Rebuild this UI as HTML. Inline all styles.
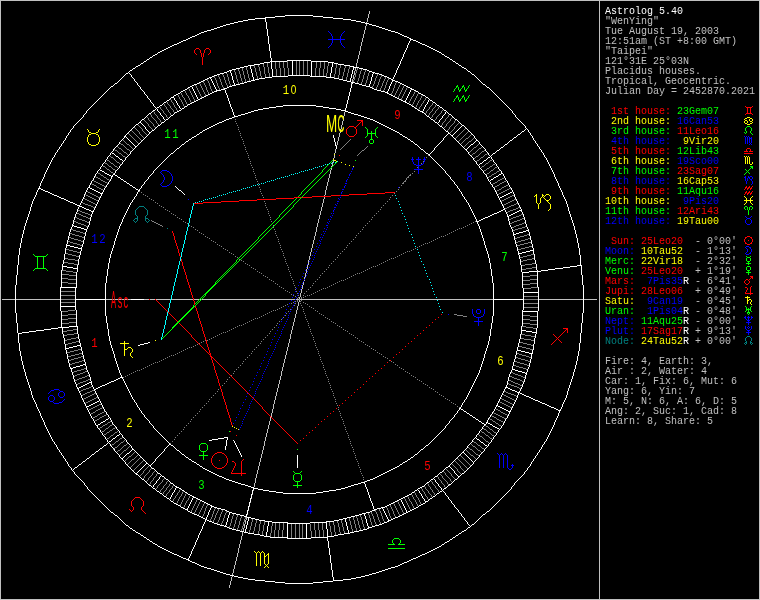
<!DOCTYPE html><html><head><meta charset="utf-8"><title>Astrolog 5.40</title><style>
#ang .hn{font-family:"Liberation Mono",monospace;font-size:13.3px;letter-spacing:2px;}
#ang .z{font-family:"Liberation Sans",sans-serif;font-size:12.6px;}
#ang{position:absolute;left:0;top:0;will-change:transform;font-family:"Liberation Sans",sans-serif;font-size:100px;}
html,body{margin:0;padding:0;background:#000;}
body{width:760px;height:600px;position:relative;overflow:hidden;}
#side{will-change:transform;position:absolute;left:604.6px;top:7px;width:154px;font-family:"Liberation Mono",monospace;font-size:10px;line-height:10px;white-space:pre;color:#c0c0c0;}
.ln{height:10px;}
</style></head><body><svg width="760" height="600" viewBox="0 0 760 600" shape-rendering="crispEdges" style="position:absolute;left:0;top:0"><path fill="#c0c0c0" d="M0 0h760v1h-760zM2 299h13v1h-13zM16 299h44v1h-44zM106 299h25v1h-25zM144 299h5v1h-5zM150 299h5v1h-5zM156 299h14v1h-14zM171 299h22v1h-22zM194 299h5v1h-5zM202 299h93v1h-93zM296 299h3v1h-3zM300 299h193v1h-193zM539 299h44v1h-44zM584 299h13v1h-13zM0 599h760v1h-760zM0 1v598h1v-598zM200 299v1h1v-1zM229 585v3h1v-3zM230 581v4h1v-4zM231 577v4h1v-4zM232 573v2h1v-2zM232 576v1h1v-1zM233 569v4h1v-4zM234 565v4h1v-4zM235 561v4h1v-4zM236 557v4h1v-4zM237 553v4h1v-4zM238 548v5h1v-5zM239 544v4h1v-4zM240 540v4h1v-4zM241 536v4h1v-4zM242 532v4h1v-4zM243 528v3h1v-3zM244 524v4h1v-4zM245 520v4h1v-4zM246 517v3h1v-3zM247 514v1h1v-1zM248 510v1h1v-1zM249 506v1h1v-1zM250 502v1h1v-1zM251 498v1h1v-1zM252 494v1h1v-1zM253 490v1h1v-1zM254 483v4h1v-4zM255 478v5h1v-5zM256 474v4h1v-4zM257 470v4h1v-4zM258 466v4h1v-4zM259 462v4h1v-4zM260 458v4h1v-4zM261 454v4h1v-4zM262 450v4h1v-4zM263 446v4h1v-4zM264 441v5h1v-5zM265 437v4h1v-4zM266 433v4h1v-4zM267 429v4h1v-4zM268 425v4h1v-4zM269 421v4h1v-4zM270 417v4h1v-4zM271 413v4h1v-4zM272 409v4h1v-4zM273 404v5h1v-5zM274 400v4h1v-4zM275 396v4h1v-4zM276 392v4h1v-4zM277 388v4h1v-4zM278 384v4h1v-4zM279 380v4h1v-4zM280 376v4h1v-4zM281 371v5h1v-5zM282 367v4h1v-4zM283 363v4h1v-4zM284 359v4h1v-4zM285 355v4h1v-4zM286 351v4h1v-4zM287 347v4h1v-4zM288 343v4h1v-4zM289 339v4h1v-4zM290 334v5h1v-5zM291 330v4h1v-4zM292 326v4h1v-4zM293 322v4h1v-4zM294 318v4h1v-4zM295 314v4h1v-4zM296 310v4h1v-4zM297 306v4h1v-4zM298 302v4h1v-4zM299 297v2h1v-2zM299 300v2h1v-2zM300 293v4h1v-4zM301 289v4h1v-4zM302 285v4h1v-4zM303 282v3h1v-3zM304 277v2h1v-2zM304 280v1h1v-1zM305 273v4h1v-4zM306 269v4h1v-4zM307 265v4h1v-4zM308 260v5h1v-5zM309 256v4h1v-4zM310 252v4h1v-4zM311 248v4h1v-4zM312 244v4h1v-4zM313 240v4h1v-4zM314 236v4h1v-4zM315 232v4h1v-4zM316 227v5h1v-5zM317 223v4h1v-4zM318 219v4h1v-4zM319 215v4h1v-4zM320 211v4h1v-4zM321 207v4h1v-4zM322 203v4h1v-4zM323 199v4h1v-4zM324 195v1h1v-1zM324 197v2h1v-2zM325 190v5h1v-5zM326 186v4h1v-4zM327 182v4h1v-4zM328 178v4h1v-4zM329 174v4h1v-4zM330 170v4h1v-4zM331 166v1h1v-1zM331 168v2h1v-2zM332 162v4h1v-4zM333 158v1h1v-1zM333 160v2h1v-2zM334 153v1h1v-1zM334 155v3h1v-3zM335 149v4h1v-4zM336 145v1h1v-1zM337 141v4h1v-4zM338 137v4h1v-4zM339 133v4h1v-4zM340 129v4h1v-4zM341 125v4h1v-4zM342 121v4h1v-4zM343 116v5h1v-5zM344 112v4h1v-4zM351 83v1h1v-1zM352 79v3h1v-3zM353 75v4h1v-4zM354 71v4h1v-4zM355 68v3h1v-3zM356 63v4h1v-4zM357 59v4h1v-4zM358 55v4h1v-4zM359 51v4h1v-4zM360 46v5h1v-5zM361 42v4h1v-4zM362 38v4h1v-4zM363 34v4h1v-4zM364 30v4h1v-4zM365 26v4h1v-4zM366 22v1h1v-1zM366 24v2h1v-2zM367 18v4h1v-4zM368 14v4h1v-4zM369 11v3h1v-3zM599 1v598h1v-598zM759 1v598h1v-598z"/><path fill="#808080" d="M466 138h2v1h-2zM469 141h2v1h-2zM121 144h2v1h-2zM127 144h2v1h-2zM474 147h2v1h-2zM119 148h2v1h-2zM479 148h2v1h-2zM127 149h2v1h-2zM115 150h2v1h-2zM362 150h2v1h-2zM482 151h2v1h-2zM124 152h2v1h-2zM119 153h2v1h-2zM473 153h2v1h-2zM485 154h2v1h-2zM123 156h2v1h-2zM476 156h2v1h-2zM111 157h2v1h-2zM481 157h2v1h-2zM107 160h2v1h-2zM477 160h2v1h-2zM490 160h2v1h-2zM117 162h2v1h-2zM105 163h2v1h-2zM111 163h2v1h-2zM486 163h2v1h-2zM493 164h2v1h-2zM103 166h2v1h-2zM109 166h2v1h-2zM115 166h2v1h-2zM482 166h2v1h-2zM490 166h2v1h-2zM495 167h2v1h-2zM487 168h2v1h-2zM107 169h2v1h-2zM113 169h2v1h-2zM484 170h2v1h-2zM491 170h2v1h-2zM497 171h2v1h-2zM111 172h2v1h-2zM98 173h2v1h-2zM487 173h2v1h-2zM494 173h2v1h-2zM492 174h2v1h-2zM101 175h2v1h-2zM409 175h2v1h-2zM489 176h2v1h-2zM96 177h2v1h-2zM104 177h2v1h-2zM407 177h2v1h-2zM98 178h2v1h-2zM502 178h2v1h-2zM107 179h2v1h-2zM500 179h2v1h-2zM101 180h2v1h-2zM498 180h2v1h-2zM94 181h2v1h-2zM103 181h2v1h-2zM404 181h2v1h-2zM504 181h2v1h-2zM96 182h2v1h-2zM105 182h2v1h-2zM495 182h2v1h-2zM502 182h2v1h-2zM98 183h2v1h-2zM402 183h2v1h-2zM493 183h2v1h-2zM500 183h2v1h-2zM92 184h2v1h-2zM100 184h2v1h-2zM94 185h2v1h-2zM102 185h2v1h-2zM497 185h2v1h-2zM506 185h2v1h-2zM104 186h2v1h-2zM495 186h2v1h-2zM504 186h2v1h-2zM97 187h2v1h-2zM502 187h2v1h-2zM99 188h2v1h-2zM509 188h2v1h-2zM101 189h2v1h-2zM499 189h2v1h-2zM507 189h2v1h-2zM497 190h2v1h-2zM505 190h2v1h-2zM503 191h2v1h-2zM88 192h2v1h-2zM501 192h2v1h-2zM90 193h2v1h-2zM499 193h2v1h-2zM92 194h2v1h-2zM86 195h2v1h-2zM94 195h2v1h-2zM512 195h2v1h-2zM88 196h2v1h-2zM96 196h2v1h-2zM510 196h2v1h-2zM90 197h2v1h-2zM98 197h2v1h-2zM508 197h2v1h-2zM92 198h2v1h-2zM506 198h2v1h-2zM85 199h2v1h-2zM94 199h2v1h-2zM504 199h2v1h-2zM514 199h2v1h-2zM87 200h2v1h-2zM96 200h2v1h-2zM502 200h2v1h-2zM512 200h2v1h-2zM89 201h2v1h-2zM510 201h2v1h-2zM91 202h2v1h-2zM508 202h2v1h-2zM83 203h2v1h-2zM93 203h2v1h-2zM506 203h2v1h-2zM516 203h2v1h-2zM85 204h3v1h-3zM504 204h2v1h-2zM514 204h2v1h-2zM88 205h3v1h-3zM511 205h3v1h-3zM91 206h2v1h-2zM509 206h2v1h-2zM93 207h2v1h-2zM507 207h2v1h-2zM518 207h2v1h-2zM505 208h2v1h-2zM516 208h2v1h-2zM513 209h3v1h-3zM78 210h2v1h-2zM510 210h3v1h-3zM80 211h2v1h-2zM508 211h2v1h-2zM82 212h3v1h-3zM77 213h2v1h-2zM85 213h3v1h-3zM79 214h2v1h-2zM88 214h2v1h-2zM521 214h2v1h-2zM81 215h2v1h-2zM519 215h2v1h-2zM83 216h3v1h-3zM516 216h3v1h-3zM75 217h2v1h-2zM86 217h2v1h-2zM513 217h3v1h-3zM77 218h2v1h-2zM88 218h2v1h-2zM511 218h2v1h-2zM522 218h2v1h-2zM79 219h3v1h-3zM509 219h2v1h-2zM520 219h2v1h-2zM82 220h3v1h-3zM517 220h3v1h-3zM74 221h2v1h-2zM85 221h2v1h-2zM152 221h2v1h-2zM514 221h3v1h-3zM76 222h2v1h-2zM87 222h2v1h-2zM154 222h2v1h-2zM512 222h2v1h-2zM78 223h3v1h-3zM156 223h2v1h-2zM510 223h2v1h-2zM522 223h2v1h-2zM81 224h3v1h-3zM158 224h2v1h-2zM519 224h3v1h-3zM84 225h2v1h-2zM160 225h2v1h-2zM516 225h3v1h-3zM86 226h2v1h-2zM514 226h2v1h-2zM512 227h2v1h-2zM522 227h3v1h-3zM518 228h4v1h-4zM71 229h2v1h-2zM515 229h3v1h-3zM73 230h3v1h-3zM513 230h2v1h-2zM76 231h4v1h-4zM80 232h3v1h-3zM70 233h2v1h-2zM83 233h2v1h-2zM72 234h3v1h-3zM527 234h2v1h-2zM75 235h4v1h-4zM524 235h3v1h-3zM79 236h3v1h-3zM520 236h4v1h-4zM69 237h2v1h-2zM82 237h2v1h-2zM517 237h3v1h-3zM71 238h3v1h-3zM515 238h2v1h-2zM528 238h2v1h-2zM74 239h4v1h-4zM525 239h3v1h-3zM78 240h3v1h-3zM521 240h4v1h-4zM68 241h2v1h-2zM81 241h2v1h-2zM518 241h3v1h-3zM70 242h3v1h-3zM516 242h2v1h-2zM528 242h3v1h-3zM73 243h4v1h-4zM524 243h4v1h-4zM77 244h3v1h-3zM520 244h4v1h-4zM80 245h2v1h-2zM517 245h3v1h-3zM529 246h3v1h-3zM525 247h4v1h-4zM521 248h4v1h-4zM66 249h3v1h-3zM518 249h3v1h-3zM69 250h4v1h-4zM73 251h4v1h-4zM77 252h3v1h-3zM66 253h2v1h-2zM68 254h4v1h-4zM531 254h3v1h-3zM72 255h4v1h-4zM527 255h4v1h-4zM76 256h3v1h-3zM523 256h4v1h-4zM520 257h3v1h-3zM65 258h3v1h-3zM532 258h2v1h-2zM68 259h7v1h-7zM527 259h5v1h-5zM75 260h3v1h-3zM523 260h4v1h-4zM521 261h2v1h-2zM64 262h4v1h-4zM68 263h6v1h-6zM532 263h3v1h-3zM74 264h4v1h-4zM525 264h7v1h-7zM522 265h3v1h-3zM532 267h4v1h-4zM526 268h6v1h-6zM522 269h4v1h-4zM62 270h4v1h-4zM66 271h7v1h-7zM73 272h3v1h-3zM62 274h7v1h-7zM69 275h7v1h-7zM530 275h7v1h-7zM523 276h7v1h-7zM62 278h6v1h-6zM68 279h8v1h-8zM530 279h7v1h-7zM523 280h7v1h-7zM62 282h6v1h-6zM68 283h8v1h-8zM530 283h7v1h-7zM523 284h7v1h-7zM531 287h7v1h-7zM524 288h7v1h-7zM61 291h14v1h-14zM61 295h14v1h-14zM524 296h14v1h-14zM61 299h14v1h-14zM524 299h14v1h-14zM61 302h14v1h-14zM524 303h14v1h-14zM524 307h14v1h-14zM68 310h7v1h-7zM62 311h6v1h-6zM68 314h8v1h-8zM454 314h3v1h-3zM62 315h6v1h-6zM457 315h6v1h-6zM523 315h7v1h-7zM463 316h4v1h-4zM530 316h7v1h-7zM68 318h8v1h-8zM62 319h6v1h-6zM523 319h7v1h-7zM530 320h7v1h-7zM69 322h7v1h-7zM62 323h7v1h-7zM523 323h7v1h-7zM530 324h7v1h-7zM522 326h4v1h-4zM526 327h7v1h-7zM533 328h3v1h-3zM73 329h4v1h-4zM67 330h6v1h-6zM63 331h4v1h-4zM74 333h3v1h-3zM67 334h7v1h-7zM521 334h4v1h-4zM64 335h3v1h-3zM525 335h6v1h-6zM531 336h4v1h-4zM76 337h2v1h-2zM71 338h5v1h-5zM521 338h3v1h-3zM67 339h4v1h-4zM524 339h7v1h-7zM65 340h2v1h-2zM531 340h3v1h-3zM76 341h3v1h-3zM72 342h4v1h-4zM520 342h3v1h-3zM68 343h4v1h-4zM523 343h4v1h-4zM66 344h2v1h-2zM527 344h4v1h-4zM531 345h2v1h-2zM519 346h3v1h-3zM522 347h4v1h-4zM526 348h4v1h-4zM78 349h3v1h-3zM530 349h3v1h-3zM74 350h4v1h-4zM70 351h4v1h-4zM67 352h3v1h-3zM79 353h3v1h-3zM517 353h2v1h-2zM75 354h4v1h-4zM519 354h3v1h-3zM71 355h4v1h-4zM522 355h4v1h-4zM68 356h3v1h-3zM81 356h2v1h-2zM526 356h3v1h-3zM78 357h3v1h-3zM516 357h2v1h-2zM529 357h2v1h-2zM74 358h4v1h-4zM518 358h3v1h-3zM71 359h3v1h-3zM521 359h4v1h-4zM69 360h2v1h-2zM82 360h2v1h-2zM525 360h3v1h-3zM79 361h3v1h-3zM515 361h2v1h-2zM528 361h2v1h-2zM75 362h4v1h-4zM517 362h3v1h-3zM72 363h3v1h-3zM520 363h4v1h-4zM70 364h2v1h-2zM524 364h3v1h-3zM514 365h2v1h-2zM527 365h2v1h-2zM516 366h3v1h-3zM519 367h4v1h-4zM84 368h2v1h-2zM523 368h3v1h-3zM81 369h3v1h-3zM77 370h4v1h-4zM74 371h3v1h-3zM85 371h2v1h-2zM83 372h2v1h-2zM511 372h2v1h-2zM80 373h3v1h-3zM513 373h2v1h-2zM77 374h3v1h-3zM515 374h3v1h-3zM75 375h2v1h-2zM87 375h2v1h-2zM518 375h3v1h-3zM85 376h2v1h-2zM510 376h2v1h-2zM521 376h2v1h-2zM82 377h3v1h-3zM512 377h2v1h-2zM523 377h2v1h-2zM79 378h3v1h-3zM514 378h3v1h-3zM77 379h2v1h-2zM88 379h2v1h-2zM517 379h3v1h-3zM75 380h2v1h-2zM86 380h2v1h-2zM509 380h2v1h-2zM520 380h2v1h-2zM83 381h3v1h-3zM511 381h2v1h-2zM522 381h2v1h-2zM80 382h3v1h-3zM513 382h2v1h-2zM78 383h2v1h-2zM515 383h3v1h-3zM509 384h2v1h-2zM518 384h2v1h-2zM511 385h3v1h-3zM520 385h2v1h-2zM514 386h3v1h-3zM89 387h2v1h-2zM517 387h2v1h-2zM86 388h3v1h-3zM519 388h2v1h-2zM83 389h3v1h-3zM81 390h2v1h-2zM92 390h2v1h-2zM90 391h2v1h-2zM504 391h2v1h-2zM87 392h3v1h-3zM506 392h2v1h-2zM85 393h2v1h-2zM94 393h2v1h-2zM508 393h3v1h-3zM83 394h2v1h-2zM92 394h2v1h-2zM511 394h3v1h-3zM90 395h2v1h-2zM504 395h2v1h-2zM514 395h2v1h-2zM88 396h2v1h-2zM506 396h2v1h-2zM86 397h2v1h-2zM96 397h2v1h-2zM508 397h2v1h-2zM84 398h2v1h-2zM94 398h2v1h-2zM510 398h2v1h-2zM92 399h2v1h-2zM502 399h2v1h-2zM512 399h2v1h-2zM90 400h2v1h-2zM504 400h2v1h-2zM88 401h2v1h-2zM506 401h2v1h-2zM86 402h2v1h-2zM500 402h2v1h-2zM508 402h2v1h-2zM502 403h2v1h-2zM510 403h2v1h-2zM99 404h2v1h-2zM504 404h2v1h-2zM97 405h2v1h-2zM506 405h2v1h-2zM95 406h2v1h-2zM508 406h2v1h-2zM93 407h2v1h-2zM510 407h2v1h-2zM91 408h2v1h-2zM100 408h2v1h-2zM89 409h2v1h-2zM98 409h2v1h-2zM496 409h2v1h-2zM96 410h2v1h-2zM498 410h2v1h-2zM93 412h2v1h-2zM102 412h2v1h-2zM501 412h2v1h-2zM91 413h2v1h-2zM100 413h2v1h-2zM494 413h2v1h-2zM503 413h2v1h-2zM98 414h2v1h-2zM496 414h2v1h-2zM505 414h2v1h-2zM104 415h2v1h-2zM498 415h2v1h-2zM95 416h2v1h-2zM102 416h2v1h-2zM492 416h2v1h-2zM500 416h2v1h-2zM93 417h2v1h-2zM100 417h2v1h-2zM494 417h2v1h-2zM502 417h2v1h-2zM504 418h2v1h-2zM97 419h2v1h-2zM490 419h2v1h-2zM497 419h2v1h-2zM95 420h2v1h-2zM499 420h2v1h-2zM493 421h2v1h-2zM501 421h2v1h-2zM108 422h2v1h-2zM496 423h2v1h-2zM105 424h2v1h-2zM103 425h2v1h-2zM110 425h2v1h-2zM499 425h2v1h-2zM486 426h2v1h-2zM100 427h2v1h-2zM106 428h2v1h-2zM113 428h2v1h-2zM484 429h2v1h-2zM490 429h2v1h-2zM110 430h2v1h-2zM102 431h2v1h-2zM107 432h2v1h-2zM115 432h2v1h-2zM482 432h2v1h-2zM488 432h2v1h-2zM494 432h2v1h-2zM104 434h2v1h-2zM111 435h2v1h-2zM486 435h2v1h-2zM492 435h2v1h-2zM480 436h2v1h-2zM107 438h2v1h-2zM120 438h2v1h-2zM490 438h2v1h-2zM116 441h2v1h-2zM486 441h2v1h-2zM121 442h2v1h-2zM474 442h2v1h-2zM112 444h2v1h-2zM124 445h2v1h-2zM478 445h2v1h-2zM473 446h2v1h-2zM115 447h2v1h-2zM482 448h2v1h-2zM470 449h2v1h-2zM118 450h2v1h-2zM124 450h2v1h-2zM478 450h2v1h-2zM476 454h2v1h-2zM471 455h2v1h-2zM129 456h2v1h-2zM132 459h2v1h-2zM73 372v1h1v-1zM74 376v1h1v-1zM77 384v1h1v-1zM80 391v1h1v-1zM82 202v1h1v-1zM82 395v1h1v-1zM83 399v1h1v-1zM84 198v1h1v-1zM85 194v1h1v-1zM85 403v1h1v-1zM87 191v1h1v-1zM90 215v1h1v-1zM91 183v1h1v-1zM91 386v1h1v-1zM93 180v1h1v-1zM95 176v1h1v-1zM95 204v1h1v-1zM95 411v1h1v-1zM96 186v1h1v-1zM97 415v1h1v-1zM99 418v1h1v-1zM99 428v1h1v-1zM100 174v1h1v-1zM100 179v1h1v-1zM102 407v1h1v-1zM102 426v1h1v-1zM103 176v1h1v-1zM104 411v1h1v-1zM104 430v1h1v-1zM105 167v1h1v-1zM105 429v1h1v-1zM106 168v1h1v-1zM106 178v1h1v-1zM106 414v1h1v-1zM106 433v1h1v-1zM107 164v1h1v-1zM107 183v1h1v-1zM107 423v1h1v-1zM108 165v1h1v-1zM108 427v1h1v-1zM109 161v1h1v-1zM109 170v1h1v-1zM109 180v1h1v-1zM109 426v1h1v-1zM109 431v1h1v-1zM109 437v1h1v-1zM110 156v1h1v-1zM110 162v1h1v-1zM110 171v1h1v-1zM110 421v1h1v-1zM110 436v1h1v-1zM111 167v1h1v-1zM111 445v1h1v-1zM112 168v1h1v-1zM112 424v1h1v-1zM112 429v1h1v-1zM113 158v1h1v-1zM113 164v1h1v-1zM113 173v1h1v-1zM113 434v1h1v-1zM113 449v1h1v-1zM114 149v1h1v-1zM114 159v1h1v-1zM114 165v1h1v-1zM114 433v1h1v-1zM114 443v1h1v-1zM114 448v1h1v-1zM115 160v1h1v-1zM115 170v1h1v-1zM115 427v1h1v-1zM115 442v1h1v-1zM116 161v1h1v-1zM117 146v1h1v-1zM117 151v1h1v-1zM117 167v1h1v-1zM117 431v1h1v-1zM117 446v1h1v-1zM117 451v1h1v-1zM118 147v1h1v-1zM118 152v1h1v-1zM118 440v1h1v-1zM118 445v1h1v-1zM119 163v1h1v-1zM119 439v1h1v-1zM119 444v1h1v-1zM120 143v1h1v-1zM120 164v1h1v-1zM120 443v1h1v-1zM120 449v1h1v-1zM120 454v1h1v-1zM121 149v1h1v-1zM121 154v1h1v-1zM121 448v1h1v-1zM121 453v1h1v-1zM122 150v1h1v-1zM122 155v1h1v-1zM122 437v1h1v-1zM122 447v1h1v-1zM122 452v1h1v-1zM123 140v1h1v-1zM123 145v1h1v-1zM123 151v1h1v-1zM123 377v1h1v-1zM123 441v1h1v-1zM123 446v1h1v-1zM123 451v1h1v-1zM124 141v1h1v-1zM124 146v1h1v-1zM124 440v1h1v-1zM125 142v1h1v-1zM125 147v1h1v-1zM125 157v1h1v-1zM125 376v1h1v-1zM125 460v1h1v-1zM126 143v1h1v-1zM126 148v1h1v-1zM126 153v1h1v-1zM126 444v1h1v-1zM126 449v1h1v-1zM126 459v1h1v-1zM127 154v1h1v-1zM127 375v1h1v-1zM127 443v1h1v-1zM127 448v1h1v-1zM127 458v1h1v-1zM127 464v1h1v-1zM128 133v1h1v-1zM128 447v1h1v-1zM128 457v1h1v-1zM128 463v1h1v-1zM129 134v1h1v-1zM129 145v1h1v-1zM129 150v1h1v-1zM129 374v1h1v-1zM129 446v1h1v-1zM129 462v1h1v-1zM130 135v1h1v-1zM130 146v1h1v-1zM130 151v1h1v-1zM130 461v1h1v-1zM130 467v1h1v-1zM131 130v1h1v-1zM131 136v1h1v-1zM131 147v1h1v-1zM131 373v1h1v-1zM131 455v1h1v-1zM131 460v1h1v-1zM131 466v1h1v-1zM132 131v1h1v-1zM132 137v1h1v-1zM132 148v1h1v-1zM132 454v1h1v-1zM132 465v1h1v-1zM133 132v1h1v-1zM133 138v1h1v-1zM133 372v1h1v-1zM133 453v1h1v-1zM133 464v1h1v-1zM133 470v1h1v-1zM134 127v1h1v-1zM134 133v1h1v-1zM134 139v1h1v-1zM134 452v1h1v-1zM134 458v1h1v-1zM134 463v1h1v-1zM134 469v1h1v-1zM135 128v1h1v-1zM135 134v1h1v-1zM135 140v1h1v-1zM135 371v1h1v-1zM135 457v1h1v-1zM135 462v1h1v-1zM135 468v1h1v-1zM136 129v1h1v-1zM136 135v1h1v-1zM136 141v1h1v-1zM136 456v1h1v-1zM136 461v1h1v-1zM136 467v1h1v-1zM137 130v1h1v-1zM137 136v1h1v-1zM137 142v1h1v-1zM137 370v1h1v-1zM137 455v1h1v-1zM137 460v1h1v-1zM137 466v1h1v-1zM138 125v1h1v-1zM138 131v1h1v-1zM138 137v1h1v-1zM138 143v1h1v-1zM138 459v1h1v-1zM138 465v1h1v-1zM139 126v1h1v-1zM139 132v2h1v-2zM139 138v1h1v-1zM139 191v1h1v-1zM139 370v1h1v-1zM139 458v1h1v-1zM139 464v1h1v-1zM140 127v1h1v-1zM140 134v1h1v-1zM140 139v1h1v-1zM140 457v1h1v-1zM140 463v1h1v-1zM140 475v1h1v-1zM141 128v1h1v-1zM141 135v1h1v-1zM141 140v1h1v-1zM141 192v1h1v-1zM141 369v1h1v-1zM141 462v1h1v-1zM141 474v1h1v-1zM142 129v2h1v-2zM142 136v1h1v-1zM142 461v1h1v-1zM142 473v1h1v-1zM143 131v1h1v-1zM143 137v1h1v-1zM143 194v1h1v-1zM143 368v1h1v-1zM143 460v1h1v-1zM143 471v2h1v-2zM143 478v1h1v-1zM144 120v1h1v-1zM144 132v1h1v-1zM144 470v1h1v-1zM144 476v2h1v-2zM145 121v1h1v-1zM145 133v1h1v-1zM145 195v1h1v-1zM145 367v1h1v-1zM145 469v1h1v-1zM145 475v1h1v-1zM146 122v1h1v-1zM146 134v1h1v-1zM146 468v1h1v-1zM146 474v1h1v-1zM146 481v1h1v-1zM147 117v1h1v-1zM147 123v1h1v-1zM147 196v1h1v-1zM147 366v1h1v-1zM147 467v1h1v-1zM147 473v1h1v-1zM147 480v1h1v-1zM148 118v2h1v-2zM148 124v2h1v-2zM148 466v1h1v-1zM148 472v1h1v-1zM148 478v2h1v-2zM149 120v1h1v-1zM149 126v1h1v-1zM149 198v1h1v-1zM149 365v1h1v-1zM149 470v2h1v-2zM149 477v1h1v-1zM149 484v1h1v-1zM150 114v1h1v-1zM150 121v1h1v-1zM150 127v1h1v-1zM150 469v1h1v-1zM150 476v1h1v-1zM150 482v2h1v-2zM151 115v2h1v-2zM151 122v1h1v-1zM151 128v1h1v-1zM151 199v1h1v-1zM151 220v1h1v-1zM151 364v1h1v-1zM151 468v1h1v-1zM151 475v1h1v-1zM151 481v1h1v-1zM152 117v1h1v-1zM152 123v1h1v-1zM152 129v1h1v-1zM152 473v2h1v-2zM152 480v1h1v-1zM153 111v1h1v-1zM153 118v1h1v-1zM153 124v2h1v-2zM153 200v1h1v-1zM153 363v1h1v-1zM153 472v1h1v-1zM153 478v2h1v-2zM154 112v2h1v-2zM154 119v1h1v-1zM154 126v1h1v-1zM154 471v1h1v-1zM154 477v1h1v-1zM155 114v1h1v-1zM155 120v1h1v-1zM155 127v1h1v-1zM155 202v1h1v-1zM155 362v1h1v-1zM155 476v1h1v-1zM156 115v1h1v-1zM156 121v2h1v-2zM156 474v2h1v-2zM156 488v1h1v-1zM157 116v2h1v-2zM157 123v1h1v-1zM157 203v1h1v-1zM157 362v1h1v-1zM157 473v1h1v-1zM157 486v2h1v-2zM158 118v1h1v-1zM158 124v1h1v-1zM158 485v1h1v-1zM159 119v1h1v-1zM159 205v1h1v-1zM159 361v1h1v-1zM159 484v1h1v-1zM160 107v2h1v-2zM160 120v2h1v-2zM160 483v1h1v-1zM160 490v2h1v-2zM161 109v1h1v-1zM161 122v1h1v-1zM161 206v1h1v-1zM161 360v1h1v-1zM161 482v1h1v-1zM161 489v1h1v-1zM162 110v1h1v-1zM162 226v1h1v-1zM162 480v2h1v-2zM162 488v1h1v-1zM163 111v2h1v-2zM163 207v1h1v-1zM163 359v1h1v-1zM163 479v1h1v-1zM163 486v2h1v-2zM163 492v2h1v-2zM164 104v2h1v-2zM164 113v1h1v-1zM164 478v1h1v-1zM164 485v1h1v-1zM164 491v1h1v-1zM165 106v1h1v-1zM165 114v1h1v-1zM165 209v1h1v-1zM165 358v1h1v-1zM165 484v1h1v-1zM165 490v1h1v-1zM166 107v2h1v-2zM166 115v2h1v-2zM166 482v2h1v-2zM166 488v2h1v-2zM166 494v2h1v-2zM167 102v2h1v-2zM167 109v1h1v-1zM167 117v1h1v-1zM167 210v1h1v-1zM167 357v1h1v-1zM167 481v1h1v-1zM167 487v1h1v-1zM167 493v1h1v-1zM168 104v1h1v-1zM168 110v2h1v-2zM168 486v1h1v-1zM168 492v1h1v-1zM169 105v1h1v-1zM169 112v1h1v-1zM169 211v1h1v-1zM169 356v1h1v-1zM169 484v2h1v-2zM169 490v2h1v-2zM170 99v1h1v-1zM170 106v2h1v-2zM170 113v2h1v-2zM170 443v1h1v-1zM170 483v1h1v-1zM170 489v1h1v-1zM171 100v2h1v-2zM171 108v1h1v-1zM171 213v1h1v-1zM171 355v1h1v-1zM171 488v1h1v-1zM172 102v1h1v-1zM172 109v1h1v-1zM172 441v1h1v-1zM172 486v2h1v-2zM173 103v2h1v-2zM173 110v2h1v-2zM173 214v1h1v-1zM173 355v1h1v-1zM173 485v1h1v-1zM173 499v2h1v-2zM174 105v2h1v-2zM174 112v1h1v-1zM174 439v1h1v-1zM174 498v1h1v-1zM175 107v1h1v-1zM175 215v1h1v-1zM175 354v1h1v-1zM175 437v1h1v-1zM175 496v2h1v-2zM176 108v2h1v-2zM176 495v1h1v-1zM176 503v1h1v-1zM177 110v1h1v-1zM177 217v1h1v-1zM177 353v1h1v-1zM177 435v1h1v-1zM177 493v2h1v-2zM177 501v2h1v-2zM178 95v2h1v-2zM178 492v1h1v-1zM178 499v2h1v-2zM179 97v2h1v-2zM179 218v1h1v-1zM179 352v1h1v-1zM179 433v1h1v-1zM179 490v2h1v-2zM179 497v2h1v-2zM180 99v1h1v-1zM180 489v1h1v-1zM180 496v1h1v-1zM180 504v2h1v-2zM181 93v2h1v-2zM181 100v2h1v-2zM181 219v1h1v-1zM181 351v1h1v-1zM181 431v1h1v-1zM181 494v2h1v-2zM181 502v2h1v-2zM182 95v2h1v-2zM182 102v2h1v-2zM182 492v2h1v-2zM182 500v2h1v-2zM183 97v1h1v-1zM183 104v2h1v-2zM183 221v1h1v-1zM183 350v1h1v-1zM183 429v1h1v-1zM183 491v1h1v-1zM183 498v2h1v-2zM183 507v1h1v-1zM184 98v2h1v-2zM184 106v1h1v-1zM184 427v1h1v-1zM184 496v2h1v-2zM184 505v2h1v-2zM185 91v2h1v-2zM185 100v2h1v-2zM185 222v1h1v-1zM185 349v1h1v-1zM185 494v2h1v-2zM185 503v2h1v-2zM186 93v2h1v-2zM186 102v2h1v-2zM186 425v1h1v-1zM186 493v1h1v-1zM186 501v2h1v-2zM187 95v1h1v-1zM187 104v1h1v-1zM187 223v1h1v-1zM187 348v1h1v-1zM187 500v1h1v-1zM188 88v1h1v-1zM188 96v2h1v-2zM188 423v1h1v-1zM188 498v2h1v-2zM189 89v2h1v-2zM189 98v2h1v-2zM189 225v1h1v-1zM189 347v1h1v-1zM189 496v2h1v-2zM190 91v2h1v-2zM190 100v2h1v-2zM190 421v1h1v-1zM191 93v2h1v-2zM191 102v1h1v-1zM191 226v1h1v-1zM191 347v1h1v-1zM191 419v1h1v-1zM191 510v2h1v-2zM192 95v2h1v-2zM192 508v2h1v-2zM193 97v2h1v-2zM193 227v1h1v-1zM193 346v1h1v-1zM193 417v1h1v-1zM193 506v2h1v-2zM194 99v2h1v-2zM194 504v2h1v-2zM194 512v2h1v-2zM195 85v1h1v-1zM195 229v1h1v-1zM195 345v1h1v-1zM195 415v1h1v-1zM195 502v2h1v-2zM195 510v2h1v-2zM196 86v2h1v-2zM196 500v2h1v-2zM196 508v2h1v-2zM197 88v2h1v-2zM197 230v1h1v-1zM197 344v1h1v-1zM197 413v1h1v-1zM197 499v1h1v-1zM197 506v2h1v-2zM198 90v2h1v-2zM198 504v2h1v-2zM198 514v1h1v-1zM199 83v1h1v-1zM199 92v2h1v-2zM199 232v1h1v-1zM199 343v1h1v-1zM199 411v1h1v-1zM199 502v2h1v-2zM199 512v2h1v-2zM200 84v2h1v-2zM200 94v2h1v-2zM200 409v1h1v-1zM200 501v1h1v-1zM200 510v2h1v-2zM201 86v2h1v-2zM201 96v2h1v-2zM201 233v1h1v-1zM201 342v1h1v-1zM201 508v2h1v-2zM202 88v2h1v-2zM202 407v1h1v-1zM202 506v2h1v-2zM202 516v1h1v-1zM203 81v2h1v-2zM203 90v2h1v-2zM203 234v1h1v-1zM203 341v1h1v-1zM203 504v2h1v-2zM203 514v2h1v-2zM204 83v2h1v-2zM204 92v2h1v-2zM204 405v1h1v-1zM204 503v1h1v-1zM204 511v3h1v-3zM205 85v2h1v-2zM205 94v2h1v-2zM205 236v1h1v-1zM205 340v1h1v-1zM205 508v3h1v-3zM206 87v3h1v-3zM206 403v1h1v-1zM206 506v2h1v-2zM207 79v2h1v-2zM207 90v2h1v-2zM207 237v1h1v-1zM207 340v1h1v-1zM207 504v2h1v-2zM208 81v2h1v-2zM208 92v2h1v-2zM208 401v1h1v-1zM209 83v3h1v-3zM209 238v1h1v-1zM209 339v1h1v-1zM209 399v1h1v-1zM210 86v3h1v-3zM210 519v2h1v-2zM211 89v2h1v-2zM211 240v1h1v-1zM211 338v1h1v-1zM211 397v1h1v-1zM211 517v2h1v-2zM212 91v1h1v-1zM212 514v3h1v-3zM213 241v1h1v-1zM213 337v1h1v-1zM213 395v1h1v-1zM213 511v3h1v-3zM213 520v2h1v-2zM214 76v2h1v-2zM214 509v2h1v-2zM214 518v2h1v-2zM215 78v2h1v-2zM215 242v1h1v-1zM215 336v1h1v-1zM215 393v1h1v-1zM215 508v1h1v-1zM215 515v3h1v-3zM216 80v3h1v-3zM216 513v2h1v-2zM217 83v3h1v-3zM217 244v1h1v-1zM217 335v1h1v-1zM217 391v1h1v-1zM217 511v2h1v-2zM217 522v2h1v-2zM218 75v2h1v-2zM218 86v2h1v-2zM218 389v1h1v-1zM218 509v2h1v-2zM218 520v2h1v-2zM219 77v2h1v-2zM219 88v2h1v-2zM219 245v1h1v-1zM219 334v1h1v-1zM219 517v3h1v-3zM220 79v3h1v-3zM220 514v3h1v-3zM221 82v3h1v-3zM221 246v1h1v-1zM221 333v1h1v-1zM221 512v2h1v-2zM221 523v2h1v-2zM222 74v1h1v-1zM222 85v2h1v-2zM222 385v1h1v-1zM222 510v2h1v-2zM222 521v2h1v-2zM223 75v2h1v-2zM223 87v2h1v-2zM223 248v1h1v-1zM223 332v1h1v-1zM223 518v3h1v-3zM224 77v3h1v-3zM224 383v1h1v-1zM224 515v3h1v-3zM225 80v3h1v-3zM225 249v1h1v-1zM225 332v1h1v-1zM225 513v2h1v-2zM226 73v1h1v-1zM226 83v2h1v-2zM226 381v1h1v-1zM226 511v2h1v-2zM227 74v3h1v-3zM227 85v2h1v-2zM227 250v1h1v-1zM227 331v1h1v-1zM227 379v1h1v-1zM228 77v4h1v-4zM229 81v3h1v-3zM229 252v1h1v-1zM229 330v1h1v-1zM229 377v1h1v-1zM229 526v2h1v-2zM230 84v2h1v-2zM230 523v3h1v-3zM231 253v1h1v-1zM231 329v1h1v-1zM231 375v1h1v-1zM231 519v4h1v-4zM232 516v3h1v-3zM233 254v1h1v-1zM233 328v1h1v-1zM233 373v1h1v-1zM233 514v2h1v-2zM233 527v2h1v-2zM234 70v2h1v-2zM234 117v1h1v-1zM234 371v1h1v-1zM234 524v3h1v-3zM235 72v3h1v-3zM235 119v1h1v-1zM235 121v1h1v-1zM235 256v1h1v-1zM235 327v1h1v-1zM235 520v4h1v-4zM236 75v4h1v-4zM236 123v1h1v-1zM236 369v1h1v-1zM236 517v3h1v-3zM237 79v3h1v-3zM237 125v1h1v-1zM237 257v1h1v-1zM237 326v1h1v-1zM237 515v2h1v-2zM237 528v2h1v-2zM238 69v2h1v-2zM238 82v2h1v-2zM238 127v1h1v-1zM238 129v1h1v-1zM238 367v1h1v-1zM238 525v3h1v-3zM239 71v3h1v-3zM239 131v1h1v-1zM239 259v1h1v-1zM239 325v1h1v-1zM239 521v4h1v-4zM240 74v4h1v-4zM240 133v1h1v-1zM240 135v1h1v-1zM240 365v1h1v-1zM240 518v3h1v-3zM241 78v3h1v-3zM241 137v1h1v-1zM241 260v1h1v-1zM241 325v1h1v-1zM241 516v2h1v-2zM241 529v2h1v-2zM242 68v3h1v-3zM242 81v2h1v-2zM242 139v1h1v-1zM242 363v1h1v-1zM242 526v3h1v-3zM243 71v4h1v-4zM243 141v1h1v-1zM243 143v1h1v-1zM243 261v1h1v-1zM243 324v1h1v-1zM243 361v1h1v-1zM243 522v4h1v-4zM244 75v4h1v-4zM244 145v1h1v-1zM244 519v3h1v-3zM245 79v3h1v-3zM245 147v1h1v-1zM245 149v1h1v-1zM245 263v1h1v-1zM245 323v1h1v-1zM245 359v1h1v-1zM245 517v2h1v-2zM246 67v3h1v-3zM246 151v1h1v-1zM247 70v4h1v-4zM247 153v1h1v-1zM247 264v1h1v-1zM247 322v1h1v-1zM247 357v1h1v-1zM248 74v4h1v-4zM248 155v1h1v-1zM248 157v1h1v-1zM249 78v3h1v-3zM249 159v1h1v-1zM249 265v1h1v-1zM249 321v1h1v-1zM249 355v1h1v-1zM249 530v3h1v-3zM250 161v1h1v-1zM250 163v1h1v-1zM250 526v4h1v-4zM251 165v1h1v-1zM251 267v1h1v-1zM251 320v1h1v-1zM251 353v1h1v-1zM251 522v4h1v-4zM252 167v1h1v-1zM252 351v1h1v-1zM252 519v3h1v-3zM253 169v1h1v-1zM253 171v1h1v-1zM253 268v1h1v-1zM253 319v1h1v-1zM253 531v2h1v-2zM254 65v3h1v-3zM254 173v1h1v-1zM254 349v1h1v-1zM254 527v4h1v-4zM255 68v4h1v-4zM255 175v1h1v-1zM255 177v1h1v-1zM255 269v1h1v-1zM255 318v1h1v-1zM255 523v4h1v-4zM256 72v4h1v-4zM256 179v1h1v-1zM256 347v1h1v-1zM256 520v3h1v-3zM257 76v3h1v-3zM257 181v1h1v-1zM257 271v1h1v-1zM257 318v1h1v-1zM258 65v2h1v-2zM258 183v1h1v-1zM258 185v1h1v-1zM258 345v1h1v-1zM258 531v3h1v-3zM259 67v4h1v-4zM259 187v1h1v-1zM259 272v1h1v-1zM259 317v1h1v-1zM259 524v7h1v-7zM260 71v5h1v-5zM260 189v1h1v-1zM260 191v1h1v-1zM260 343v1h1v-1zM260 521v3h1v-3zM261 76v2h1v-2zM261 193v1h1v-1zM261 273v1h1v-1zM261 316v1h1v-1zM261 341v1h1v-1zM262 195v1h1v-1zM262 531v4h1v-4zM263 64v3h1v-3zM263 197v1h1v-1zM263 275v1h1v-1zM263 315v1h1v-1zM263 339v1h1v-1zM263 525v6h1v-6zM264 67v7h1v-7zM264 201v1h1v-1zM264 521v4h1v-4zM265 74v3h1v-3zM265 203v1h1v-1zM265 205v1h1v-1zM265 276v1h1v-1zM265 314v1h1v-1zM265 337v1h1v-1zM266 207v1h1v-1zM267 63v4h1v-4zM267 209v1h1v-1zM267 277v1h1v-1zM267 313v1h1v-1zM267 335v1h1v-1zM268 67v6h1v-6zM268 211v1h1v-1zM268 213v1h1v-1zM269 73v4h1v-4zM269 215v1h1v-1zM269 279v1h1v-1zM269 312v1h1v-1zM269 333v1h1v-1zM270 217v1h1v-1zM270 219v1h1v-1zM270 331v1h1v-1zM270 533v4h1v-4zM271 221v1h1v-1zM271 280v1h1v-1zM271 311v1h1v-1zM271 526v7h1v-7zM272 329v1h1v-1zM272 523v3h1v-3zM273 225v1h1v-1zM273 227v1h1v-1zM273 281v1h1v-1zM273 310v1h1v-1zM274 229v1h1v-1zM274 327v1h1v-1zM274 530v7h1v-7zM275 62v7h1v-7zM275 231v1h1v-1zM275 233v1h1v-1zM275 283v1h1v-1zM275 310v1h1v-1zM275 523v7h1v-7zM276 69v7h1v-7zM276 235v1h1v-1zM276 325v1h1v-1zM277 237v1h1v-1zM277 284v1h1v-1zM277 309v1h1v-1zM277 323v1h1v-1zM278 239v1h1v-1zM278 241v1h1v-1zM278 530v7h1v-7zM279 62v6h1v-6zM279 243v1h1v-1zM279 286v1h1v-1zM279 308v1h1v-1zM279 321v1h1v-1zM279 523v7h1v-7zM280 68v8h1v-8zM280 245v1h1v-1zM280 247v1h1v-1zM281 249v1h1v-1zM281 287v1h1v-1zM281 307v1h1v-1zM281 319v1h1v-1zM282 251v1h1v-1zM282 530v7h1v-7zM283 62v6h1v-6zM283 253v1h1v-1zM283 255v1h1v-1zM283 288v1h1v-1zM283 306v1h1v-1zM283 317v1h1v-1zM283 523v7h1v-7zM284 68v8h1v-8zM284 257v1h1v-1zM285 259v1h1v-1zM285 261v1h1v-1zM285 290v1h1v-1zM285 305v1h1v-1zM285 315v1h1v-1zM286 263v1h1v-1zM286 313v1h1v-1zM287 61v7h1v-7zM287 265v1h1v-1zM287 291v1h1v-1zM287 304v1h1v-1zM288 68v7h1v-7zM288 267v1h1v-1zM288 269v1h1v-1zM288 311v1h1v-1zM289 271v1h1v-1zM289 292v1h1v-1zM290 273v1h1v-1zM290 275v1h1v-1zM290 309v1h1v-1zM291 277v1h1v-1zM291 294v1h1v-1zM291 303v1h1v-1zM291 524v14h1v-14zM292 279v1h1v-1zM293 281v1h1v-1zM293 283v1h1v-1zM293 295v1h1v-1zM293 302v1h1v-1zM294 285v1h1v-1zM294 305v1h1v-1zM295 287v1h1v-1zM295 289v1h1v-1zM295 296v1h1v-1zM295 301v1h1v-1zM295 303v1h1v-1zM295 524v14h1v-14zM296 61v14h1v-14zM296 291v1h1v-1zM297 293v1h1v-1zM297 298v1h1v-1zM297 300v2h1v-2zM298 295v1h1v-1zM298 297v1h1v-1zM299 61v14h1v-14zM299 299v1h1v-1zM299 524v14h1v-14zM300 301v1h1v-1zM300 303v1h1v-1zM301 297v2h1v-2zM301 300v1h1v-1zM301 305v1h1v-1zM302 307v1h1v-1zM302 524v14h1v-14zM303 61v14h1v-14zM303 295v1h1v-1zM303 297v1h1v-1zM303 302v1h1v-1zM303 309v1h1v-1zM303 311v1h1v-1zM304 293v1h1v-1zM304 313v1h1v-1zM305 296v1h1v-1zM305 303v1h1v-1zM305 315v1h1v-1zM305 317v1h1v-1zM306 291v1h1v-1zM306 319v1h1v-1zM307 61v14h1v-14zM307 295v1h1v-1zM307 304v1h1v-1zM307 321v1h1v-1zM308 289v1h1v-1zM308 323v1h1v-1zM308 325v1h1v-1zM309 295v1h1v-1zM309 306v1h1v-1zM309 327v1h1v-1zM310 287v1h1v-1zM310 329v1h1v-1zM310 331v1h1v-1zM310 524v7h1v-7zM311 294v1h1v-1zM311 307v1h1v-1zM311 333v1h1v-1zM311 531v6h1v-6zM312 285v1h1v-1zM312 335v1h1v-1zM313 283v1h1v-1zM313 293v1h1v-1zM313 308v1h1v-1zM313 337v1h1v-1zM313 339v1h1v-1zM314 341v1h1v-1zM314 523v7h1v-7zM315 68v8h1v-8zM315 281v1h1v-1zM315 292v1h1v-1zM315 310v1h1v-1zM315 343v1h1v-1zM315 345v1h1v-1zM315 530v7h1v-7zM316 62v6h1v-6zM316 347v1h1v-1zM317 279v1h1v-1zM317 291v1h1v-1zM317 311v1h1v-1zM317 349v1h1v-1zM318 351v1h1v-1zM318 353v1h1v-1zM318 523v7h1v-7zM319 68v8h1v-8zM319 277v1h1v-1zM319 290v1h1v-1zM319 313v1h1v-1zM319 355v1h1v-1zM319 530v7h1v-7zM320 62v6h1v-6zM320 275v1h1v-1zM320 357v1h1v-1zM320 359v1h1v-1zM321 289v1h1v-1zM321 314v1h1v-1zM321 361v1h1v-1zM322 273v1h1v-1zM322 363v1h1v-1zM322 523v7h1v-7zM323 69v7h1v-7zM323 288v1h1v-1zM323 315v1h1v-1zM323 365v1h1v-1zM323 367v1h1v-1zM323 530v7h1v-7zM324 62v7h1v-7zM324 271v1h1v-1zM324 369v1h1v-1zM325 288v1h1v-1zM325 317v1h1v-1zM325 371v1h1v-1zM325 373v1h1v-1zM326 73v4h1v-4zM326 269v1h1v-1zM326 375v1h1v-1zM327 66v7h1v-7zM327 287v1h1v-1zM327 318v1h1v-1zM327 377v1h1v-1zM328 63v3h1v-3zM328 267v1h1v-1zM328 379v1h1v-1zM328 381v1h1v-1zM329 265v1h1v-1zM329 286v1h1v-1zM329 319v1h1v-1zM329 383v1h1v-1zM329 522v4h1v-4zM330 385v1h1v-1zM330 387v1h1v-1zM330 526v6h1v-6zM331 263v1h1v-1zM331 285v1h1v-1zM331 321v1h1v-1zM331 389v1h1v-1zM331 532v4h1v-4zM332 391v1h1v-1zM333 261v1h1v-1zM333 284v1h1v-1zM333 322v1h1v-1zM333 393v1h1v-1zM333 395v1h1v-1zM333 522v3h1v-3zM334 74v4h1v-4zM334 397v1h1v-1zM334 525v7h1v-7zM335 68v6h1v-6zM335 259v1h1v-1zM335 283v1h1v-1zM335 323v1h1v-1zM335 399v1h1v-1zM335 401v1h1v-1zM335 532v3h1v-3zM336 64v4h1v-4zM336 403v1h1v-1zM337 257v1h1v-1zM337 282v1h1v-1zM337 325v1h1v-1zM337 405v1h1v-1zM337 521v2h1v-2zM338 75v3h1v-3zM338 255v1h1v-1zM338 407v1h1v-1zM338 409v1h1v-1zM338 523v4h1v-4zM339 68v7h1v-7zM339 281v1h1v-1zM339 326v1h1v-1zM339 411v1h1v-1zM339 527v5h1v-5zM340 65v3h1v-3zM340 149v1h1v-1zM340 253v1h1v-1zM340 413v1h1v-1zM340 415v1h1v-1zM340 532v2h1v-2zM341 148v1h1v-1zM341 280v1h1v-1zM341 327v1h1v-1zM341 417v1h1v-1zM341 520v3h1v-3zM342 76v3h1v-3zM342 147v1h1v-1zM342 251v1h1v-1zM342 419v1h1v-1zM342 523v4h1v-4zM343 72v4h1v-4zM343 146v1h1v-1zM343 280v1h1v-1zM343 329v1h1v-1zM343 421v1h1v-1zM343 423v1h1v-1zM343 527v4h1v-4zM344 68v4h1v-4zM344 145v1h1v-1zM344 249v1h1v-1zM344 425v1h1v-1zM344 531v2h1v-2zM345 66v2h1v-2zM345 144v1h1v-1zM345 279v1h1v-1zM345 330v1h1v-1zM345 427v1h1v-1zM345 429v1h1v-1zM346 77v3h1v-3zM346 143v1h1v-1zM346 247v1h1v-1zM346 431v1h1v-1zM347 73v4h1v-4zM347 142v1h1v-1zM347 245v1h1v-1zM347 278v1h1v-1zM347 331v1h1v-1zM347 433v1h1v-1zM348 69v4h1v-4zM348 141v1h1v-1zM348 435v1h1v-1zM348 437v1h1v-1zM349 66v3h1v-3zM349 140v1h1v-1zM349 243v1h1v-1zM349 277v1h1v-1zM349 333v1h1v-1zM349 439v1h1v-1zM349 518v3h1v-3zM350 139v1h1v-1zM350 441v1h1v-1zM350 443v1h1v-1zM350 521v4h1v-4zM351 241v1h1v-1zM351 276v1h1v-1zM351 334v1h1v-1zM351 445v1h1v-1zM351 525v4h1v-4zM352 447v1h1v-1zM352 529v3h1v-3zM353 80v2h1v-2zM353 239v1h1v-1zM353 275v1h1v-1zM353 335v1h1v-1zM353 449v1h1v-1zM353 451v1h1v-1zM353 517v3h1v-3zM354 77v3h1v-3zM354 453v1h1v-1zM354 520v4h1v-4zM355 73v4h1v-4zM355 237v1h1v-1zM355 274v1h1v-1zM355 337v1h1v-1zM355 455v1h1v-1zM355 457v1h1v-1zM355 524v4h1v-4zM356 70v3h1v-3zM356 235v1h1v-1zM356 459v1h1v-1zM356 516v2h1v-2zM356 528v3h1v-3zM357 68v2h1v-2zM357 81v2h1v-2zM357 155v1h1v-1zM357 273v1h1v-1zM357 338v1h1v-1zM357 461v1h1v-1zM357 518v3h1v-3zM358 78v3h1v-3zM358 154v1h1v-1zM358 233v1h1v-1zM358 463v1h1v-1zM358 465v1h1v-1zM358 521v4h1v-4zM359 74v4h1v-4zM359 153v1h1v-1zM359 273v1h1v-1zM359 340v1h1v-1zM359 467v1h1v-1zM359 525v3h1v-3zM360 71v3h1v-3zM360 152v1h1v-1zM360 231v1h1v-1zM360 469v1h1v-1zM360 471v1h1v-1zM360 515v2h1v-2zM360 528v2h1v-2zM361 69v2h1v-2zM361 82v2h1v-2zM361 151v1h1v-1zM361 272v1h1v-1zM361 341v1h1v-1zM361 473v1h1v-1zM361 517v3h1v-3zM362 79v3h1v-3zM362 229v1h1v-1zM362 475v1h1v-1zM362 520v4h1v-4zM363 75v4h1v-4zM363 227v1h1v-1zM363 271v1h1v-1zM363 342v1h1v-1zM363 477v1h1v-1zM363 479v1h1v-1zM363 524v3h1v-3zM364 72v3h1v-3zM364 149v1h1v-1zM364 481v1h1v-1zM364 527v2h1v-2zM365 70v2h1v-2zM365 83v2h1v-2zM365 148v1h1v-1zM365 225v1h1v-1zM365 270v1h1v-1zM365 344v1h1v-1zM366 80v3h1v-3zM366 147v1h1v-1zM367 76v4h1v-4zM367 146v1h1v-1zM367 223v1h1v-1zM367 269v1h1v-1zM367 345v1h1v-1zM368 73v3h1v-3zM368 513v2h1v-2zM369 72v1h1v-1zM369 221v1h1v-1zM369 268v1h1v-1zM369 346v1h1v-1zM369 515v3h1v-3zM370 518v4h1v-4zM371 219v1h1v-1zM371 267v1h1v-1zM371 348v1h1v-1zM371 512v2h1v-2zM371 522v3h1v-3zM372 86v2h1v-2zM372 217v1h1v-1zM372 514v2h1v-2zM372 525v1h1v-1zM373 84v2h1v-2zM373 266v1h1v-1zM373 349v1h1v-1zM373 516v3h1v-3zM374 81v3h1v-3zM374 215v1h1v-1zM374 519v3h1v-3zM375 78v3h1v-3zM375 266v1h1v-1zM375 350v1h1v-1zM375 510v2h1v-2zM375 522v2h1v-2zM376 76v2h1v-2zM376 87v2h1v-2zM376 213v1h1v-1zM376 512v2h1v-2zM376 524v1h1v-1zM377 74v2h1v-2zM377 85v2h1v-2zM377 265v1h1v-1zM377 352v1h1v-1zM377 514v3h1v-3zM378 82v3h1v-3zM378 211v1h1v-1zM378 517v3h1v-3zM379 79v3h1v-3zM379 264v1h1v-1zM379 353v1h1v-1zM379 509v2h1v-2zM379 520v2h1v-2zM380 77v2h1v-2zM380 88v2h1v-2zM380 209v1h1v-1zM380 511v2h1v-2zM380 522v2h1v-2zM381 75v2h1v-2zM381 86v2h1v-2zM381 207v1h1v-1zM381 263v1h1v-1zM381 354v1h1v-1zM381 513v3h1v-3zM382 83v3h1v-3zM382 516v3h1v-3zM383 81v2h1v-2zM383 90v1h1v-1zM383 205v1h1v-1zM383 262v1h1v-1zM383 356v1h1v-1zM383 519v2h1v-2zM384 79v2h1v-2zM384 88v2h1v-2zM384 521v1h1v-1zM385 77v2h1v-2zM385 85v3h1v-3zM385 203v1h1v-1zM385 261v1h1v-1zM385 357v1h1v-1zM386 82v3h1v-3zM386 507v1h1v-1zM387 80v2h1v-2zM387 201v1h1v-1zM387 260v1h1v-1zM387 358v1h1v-1zM387 508v2h1v-2zM388 78v2h1v-2zM388 510v3h1v-3zM389 199v1h1v-1zM389 259v1h1v-1zM389 360v1h1v-1zM389 513v3h1v-3zM390 197v1h1v-1zM390 505v2h1v-2zM390 516v2h1v-2zM391 93v2h1v-2zM391 258v1h1v-1zM391 361v1h1v-1zM391 507v2h1v-2zM391 518v1h1v-1zM392 91v2h1v-2zM392 195v1h1v-1zM392 509v2h1v-2zM393 88v3h1v-3zM393 258v1h1v-1zM393 362v1h1v-1zM393 503v1h1v-1zM393 511v3h1v-3zM394 85v3h1v-3zM394 95v1h1v-1zM394 193v1h1v-1zM394 504v2h1v-2zM394 514v2h1v-2zM395 83v2h1v-2zM395 93v2h1v-2zM395 257v1h1v-1zM395 364v1h1v-1zM395 506v2h1v-2zM395 516v1h1v-1zM396 82v1h1v-1zM396 91v2h1v-2zM396 191v1h1v-1zM396 508v2h1v-2zM397 89v2h1v-2zM397 256v1h1v-1zM397 365v1h1v-1zM397 501v1h1v-1zM397 510v2h1v-2zM398 87v2h1v-2zM398 96v2h1v-2zM398 189v1h1v-1zM398 502v2h1v-2zM398 512v2h1v-2zM399 85v2h1v-2zM399 94v2h1v-2zM399 187v1h1v-1zM399 255v1h1v-1zM399 367v1h1v-1zM399 504v2h1v-2zM399 514v2h1v-2zM400 84v1h1v-1zM400 92v2h1v-2zM400 506v2h1v-2zM401 90v2h1v-2zM401 98v2h1v-2zM401 185v1h1v-1zM401 254v1h1v-1zM401 368v1h1v-1zM401 508v2h1v-2zM402 88v2h1v-2zM402 96v2h1v-2zM402 510v2h1v-2zM403 86v2h1v-2zM403 94v2h1v-2zM403 182v1h1v-1zM403 253v1h1v-1zM403 369v1h1v-1zM403 512v2h1v-2zM404 92v2h1v-2zM404 498v1h1v-1zM405 90v2h1v-2zM405 180v1h1v-1zM405 252v1h1v-1zM405 371v1h1v-1zM405 499v2h1v-2zM406 88v2h1v-2zM406 178v2h1v-2zM406 501v2h1v-2zM407 87v1h1v-1zM407 251v1h1v-1zM407 372v1h1v-1zM407 496v1h1v-1zM407 503v2h1v-2zM408 176v1h1v-1zM408 497v2h1v-2zM408 505v2h1v-2zM409 101v2h1v-2zM409 251v1h1v-1zM409 373v1h1v-1zM409 499v2h1v-2zM409 507v2h1v-2zM410 99v2h1v-2zM410 174v1h1v-1zM410 501v1h1v-1zM410 509v1h1v-1zM411 97v2h1v-2zM411 250v1h1v-1zM411 375v1h1v-1zM411 494v1h1v-1zM411 502v2h1v-2zM412 96v1h1v-1zM412 104v2h1v-2zM412 173v1h1v-1zM412 495v2h1v-2zM412 504v2h1v-2zM413 94v2h1v-2zM413 102v2h1v-2zM413 249v1h1v-1zM413 376v1h1v-1zM413 497v2h1v-2zM413 506v2h1v-2zM414 92v2h1v-2zM414 100v2h1v-2zM414 171v1h1v-1zM414 492v1h1v-1zM414 499v1h1v-1zM415 91v1h1v-1zM415 98v2h1v-2zM415 107v1h1v-1zM415 248v1h1v-1zM415 377v1h1v-1zM415 493v2h1v-2zM415 500v2h1v-2zM416 96v2h1v-2zM416 105v2h1v-2zM416 495v2h1v-2zM416 502v2h1v-2zM417 94v2h1v-2zM417 103v2h1v-2zM417 167v1h1v-1zM417 247v1h1v-1zM417 379v1h1v-1zM417 497v1h1v-1zM417 504v2h1v-2zM418 93v1h1v-1zM418 101v2h1v-2zM418 109v1h1v-1zM418 498v2h1v-2zM419 100v1h1v-1zM419 107v2h1v-2zM419 246v1h1v-1zM419 380v1h1v-1zM419 500v2h1v-2zM420 98v2h1v-2zM420 106v1h1v-1zM420 502v2h1v-2zM421 96v2h1v-2zM421 104v2h1v-2zM421 163v1h1v-1zM421 245v1h1v-1zM421 381v1h1v-1zM421 488v1h1v-1zM422 95v1h1v-1zM422 103v1h1v-1zM422 489v2h1v-2zM423 101v2h1v-2zM423 161v1h1v-1zM423 244v1h1v-1zM423 383v1h1v-1zM423 491v1h1v-1zM424 100v1h1v-1zM424 486v1h1v-1zM424 492v2h1v-2zM425 98v2h1v-2zM425 113v1h1v-1zM425 243v1h1v-1zM425 384v1h1v-1zM425 487v2h1v-2zM425 494v2h1v-2zM426 111v2h1v-2zM426 157v1h1v-1zM426 489v1h1v-1zM426 496v1h1v-1zM427 110v1h1v-1zM427 243v1h1v-1zM427 385v1h1v-1zM427 483v1h1v-1zM427 490v1h1v-1zM427 497v2h1v-2zM428 109v1h1v-1zM428 115v1h1v-1zM428 155v1h1v-1zM428 484v2h1v-2zM428 491v2h1v-2zM428 499v1h1v-1zM429 107v2h1v-2zM429 113v2h1v-2zM429 242v1h1v-1zM429 387v1h1v-1zM429 486v1h1v-1zM429 493v1h1v-1zM430 106v1h1v-1zM430 112v1h1v-1zM430 487v2h1v-2zM430 494v1h1v-1zM431 105v1h1v-1zM431 111v1h1v-1zM431 117v1h1v-1zM431 241v1h1v-1zM431 388v1h1v-1zM431 481v1h1v-1zM431 489v1h1v-1zM431 495v2h1v-2zM432 103v2h1v-2zM432 109v2h1v-2zM432 115v2h1v-2zM432 482v2h1v-2zM432 490v2h1v-2zM433 108v1h1v-1zM433 114v1h1v-1zM433 240v1h1v-1zM433 389v1h1v-1zM433 484v1h1v-1zM433 492v1h1v-1zM434 107v1h1v-1zM434 113v1h1v-1zM434 120v1h1v-1zM434 485v1h1v-1zM434 493v2h1v-2zM435 105v2h1v-2zM435 111v2h1v-2zM435 119v1h1v-1zM435 239v1h1v-1zM435 391v1h1v-1zM435 486v2h1v-2zM436 110v1h1v-1zM436 117v2h1v-2zM436 488v1h1v-1zM437 109v1h1v-1zM437 116v1h1v-1zM437 238v1h1v-1zM437 392v1h1v-1zM437 476v1h1v-1zM437 489v1h1v-1zM438 107v2h1v-2zM438 115v1h1v-1zM438 477v2h1v-2zM438 490v2h1v-2zM439 114v1h1v-1zM439 237v1h1v-1zM439 394v1h1v-1zM439 479v1h1v-1zM440 113v1h1v-1zM440 474v1h1v-1zM440 480v1h1v-1zM441 111v2h1v-2zM441 125v1h1v-1zM441 236v1h1v-1zM441 395v1h1v-1zM441 475v1h1v-1zM441 481v2h1v-2zM442 110v1h1v-1zM442 123v2h1v-2zM442 476v2h1v-2zM442 483v1h1v-1zM443 122v1h1v-1zM443 236v1h1v-1zM443 396v1h1v-1zM443 471v1h1v-1zM443 478v1h1v-1zM443 484v1h1v-1zM444 121v1h1v-1zM444 127v1h1v-1zM444 472v1h1v-1zM444 479v1h1v-1zM444 485v2h1v-2zM445 119v2h1v-2zM445 126v1h1v-1zM445 235v1h1v-1zM445 398v1h1v-1zM445 473v2h1v-2zM445 480v1h1v-1zM445 487v1h1v-1zM446 118v1h1v-1zM446 124v2h1v-2zM446 469v1h1v-1zM446 475v1h1v-1zM446 481v1h1v-1zM447 117v1h1v-1zM447 123v1h1v-1zM447 130v1h1v-1zM447 234v1h1v-1zM447 399v1h1v-1zM447 470v1h1v-1zM447 476v1h1v-1zM447 482v2h1v-2zM448 115v2h1v-2zM448 122v1h1v-1zM448 129v1h1v-1zM448 471v1h1v-1zM448 477v1h1v-1zM448 484v1h1v-1zM449 121v1h1v-1zM449 127v2h1v-2zM449 233v1h1v-1zM449 400v1h1v-1zM449 472v1h1v-1zM449 478v1h1v-1zM449 485v1h1v-1zM450 119v2h1v-2zM450 126v1h1v-1zM450 132v1h1v-1zM450 473v1h1v-1zM450 479v2h1v-2zM451 118v1h1v-1zM451 125v1h1v-1zM451 131v1h1v-1zM451 232v1h1v-1zM451 402v1h1v-1zM451 474v2h1v-2zM451 481v1h1v-1zM452 117v1h1v-1zM452 124v1h1v-1zM452 130v1h1v-1zM452 464v1h1v-1zM452 476v1h1v-1zM453 123v1h1v-1zM453 129v1h1v-1zM453 231v1h1v-1zM453 403v1h1v-1zM453 465v1h1v-1zM453 477v1h1v-1zM454 121v2h1v-2zM454 127v2h1v-2zM454 466v1h1v-1zM454 478v1h1v-1zM455 120v1h1v-1zM455 126v1h1v-1zM455 138v1h1v-1zM455 230v1h1v-1zM455 404v1h1v-1zM455 461v1h1v-1zM455 467v1h1v-1zM456 125v1h1v-1zM456 137v1h1v-1zM456 462v1h1v-1zM456 468v1h1v-1zM457 124v1h1v-1zM457 136v1h1v-1zM457 229v1h1v-1zM457 406v1h1v-1zM457 458v1h1v-1zM457 463v1h1v-1zM457 469v2h1v-2zM458 123v1h1v-1zM458 135v1h1v-1zM458 141v1h1v-1zM458 459v1h1v-1zM458 464v1h1v-1zM458 471v1h1v-1zM459 134v1h1v-1zM459 140v1h1v-1zM459 228v1h1v-1zM459 407v1h1v-1zM459 460v1h1v-1zM459 465v1h1v-1zM459 472v1h1v-1zM460 133v1h1v-1zM460 139v1h1v-1zM460 455v1h1v-1zM460 461v1h1v-1zM460 466v2h1v-2zM460 473v1h1v-1zM461 132v1h1v-1zM461 138v1h1v-1zM461 143v1h1v-1zM461 228v1h1v-1zM461 456v1h1v-1zM461 462v1h1v-1zM461 468v1h1v-1zM462 131v1h1v-1zM462 137v1h1v-1zM462 142v1h1v-1zM462 457v1h1v-1zM462 463v1h1v-1zM462 469v1h1v-1zM463 130v1h1v-1zM463 136v1h1v-1zM463 141v1h1v-1zM463 227v1h1v-1zM463 458v1h1v-1zM463 464v1h1v-1zM463 470v1h1v-1zM464 129v1h1v-1zM464 135v1h1v-1zM464 140v1h1v-1zM464 146v1h1v-1zM464 459v1h1v-1zM464 465v1h1v-1zM464 471v1h1v-1zM465 128v1h1v-1zM465 134v1h1v-1zM465 139v1h1v-1zM465 145v1h1v-1zM465 226v1h1v-1zM465 460v1h1v-1zM465 466v1h1v-1zM466 133v1h1v-1zM466 144v1h1v-1zM466 450v1h1v-1zM466 461v1h1v-1zM466 467v1h1v-1zM467 132v1h1v-1zM467 143v1h1v-1zM467 225v1h1v-1zM467 451v1h1v-1zM467 462v1h1v-1zM467 468v1h1v-1zM468 131v1h1v-1zM468 137v1h1v-1zM468 142v1h1v-1zM468 447v1h1v-1zM468 452v1h1v-1zM468 463v1h1v-1zM469 136v1h1v-1zM469 152v1h1v-1zM469 224v1h1v-1zM469 448v1h1v-1zM469 453v1h1v-1zM469 464v1h1v-1zM470 135v1h1v-1zM470 151v1h1v-1zM470 454v1h1v-1zM470 465v1h1v-1zM471 134v1h1v-1zM471 140v1h1v-1zM471 150v1h1v-1zM471 155v1h1v-1zM471 223v1h1v-1zM471 444v1h1v-1zM472 139v1h1v-1zM472 149v1h1v-1zM472 154v1h1v-1zM472 445v1h1v-1zM472 450v1h1v-1zM473 138v1h1v-1zM473 148v1h1v-1zM473 222v1h1v-1zM473 441v1h1v-1zM473 451v1h1v-1zM473 456v1h1v-1zM474 158v1h1v-1zM474 452v1h1v-1zM474 457v1h1v-1zM475 152v1h1v-1zM475 157v1h1v-1zM475 221v1h1v-1zM475 447v1h1v-1zM475 453v1h1v-1zM475 458v1h1v-1zM476 146v1h1v-1zM476 151v1h1v-1zM476 161v1h1v-1zM476 443v1h1v-1zM476 448v1h1v-1zM477 145v1h1v-1zM477 150v1h1v-1zM477 444v1h1v-1zM477 449v1h1v-1zM478 144v1h1v-1zM478 149v1h1v-1zM478 155v1h1v-1zM478 434v1h1v-1zM478 455v1h1v-1zM479 154v1h1v-1zM479 159v1h1v-1zM479 435v1h1v-1zM480 153v1h1v-1zM480 158v1h1v-1zM480 446v1h1v-1zM480 451v1h1v-1zM481 147v1h1v-1zM481 152v1h1v-1zM481 167v1h1v-1zM481 431v1h1v-1zM481 447v1h1v-1zM481 452v1h1v-1zM482 437v1h1v-1zM483 156v1h1v-1zM483 428v1h1v-1zM483 438v1h1v-1zM484 150v1h1v-1zM484 155v1h1v-1zM484 165v1h1v-1zM484 433v1h1v-1zM484 439v1h1v-1zM485 164v1h1v-1zM485 425v1h1v-1zM485 434v1h1v-1zM485 440v1h1v-1zM486 169v1h1v-1zM486 174v1h1v-1zM486 430v1h1v-1zM487 153v1h1v-1zM487 431v1h1v-1zM488 162v1h1v-1zM488 177v1h1v-1zM488 427v1h1v-1zM488 436v1h1v-1zM488 442v1h1v-1zM489 161v1h1v-1zM489 167v1h1v-1zM489 172v1h1v-1zM489 418v1h1v-1zM489 428v1h1v-1zM489 437v1h1v-1zM490 171v1h1v-1zM490 433v1h1v-1zM491 175v1h1v-1zM491 415v1h1v-1zM491 434v1h1v-1zM492 165v1h1v-1zM492 184v1h1v-1zM492 420v1h1v-1zM492 430v1h1v-1zM493 169v1h1v-1zM493 412v1h1v-1zM493 431v1h1v-1zM494 168v1h1v-1zM494 187v1h1v-1zM495 422v1h1v-1zM496 172v1h1v-1zM496 191v1h1v-1zM496 418v1h1v-1zM497 181v1h1v-1zM498 194v1h1v-1zM498 424v1h1v-1zM499 170v1h1v-1zM499 184v1h1v-1zM499 401v1h1v-1zM500 411v1h1v-1zM501 188v1h1v-1zM501 201v1h1v-1zM501 398v1h1v-1zM503 205v1h1v-1zM503 394v1h1v-1zM503 422v1h1v-1zM507 212v1h1v-1zM507 415v1h1v-1zM508 383v1h1v-1zM512 404v1h1v-1zM514 400v1h1v-1zM516 396v1h1v-1zM524 222v1h1v-1zM525 226v1h1v-1zM526 369v1h1v-1z"/><path fill="#ffffff" d="M285 15h28v1h-28zM275 16h10v1h-10zM313 16h10v1h-10zM265 17h10v1h-10zM323 17h10v1h-10zM255 18h11v1h-11zM333 18h10v1h-10zM248 19h7v1h-7zM343 19h8v1h-8zM243 20h5v1h-5zM351 20h5v1h-5zM238 21h5v1h-5zM356 21h5v1h-5zM234 22h4v1h-4zM361 22h4v1h-4zM230 23h4v1h-4zM365 23h4v1h-4zM226 24h4v1h-4zM369 24h3v1h-3zM223 25h3v1h-3zM372 25h4v1h-4zM220 26h3v1h-3zM376 26h3v1h-3zM217 27h3v1h-3zM379 27h3v1h-3zM214 28h3v1h-3zM382 28h3v1h-3zM211 29h3v1h-3zM385 29h3v1h-3zM207 30h4v1h-4zM388 30h3v1h-3zM204 31h3v1h-3zM391 31h4v1h-4zM201 32h3v1h-3zM395 32h3v1h-3zM199 33h2v1h-2zM398 33h2v1h-2zM197 34h2v1h-2zM400 34h2v1h-2zM195 35h2v1h-2zM402 35h2v1h-2zM192 36h3v1h-3zM404 36h3v1h-3zM190 37h2v1h-2zM407 37h2v1h-2zM188 38h2v1h-2zM409 38h2v1h-2zM186 39h2v1h-2zM410 39h3v1h-3zM183 40h3v1h-3zM413 40h3v1h-3zM181 41h2v1h-2zM416 41h2v1h-2zM179 42h2v1h-2zM418 42h2v1h-2zM177 43h2v1h-2zM420 43h2v1h-2zM174 44h3v1h-3zM422 44h3v1h-3zM172 45h2v1h-2zM425 45h2v1h-2zM170 46h2v1h-2zM427 46h2v1h-2zM168 47h2v1h-2zM429 47h2v1h-2zM166 48h2v1h-2zM431 48h2v1h-2zM164 49h2v1h-2zM433 49h2v1h-2zM162 50h2v1h-2zM435 50h2v1h-2zM160 51h2v1h-2zM437 51h2v1h-2zM158 52h2v1h-2zM439 52h2v1h-2zM155 54h2v1h-2zM442 54h2v1h-2zM153 55h2v1h-2zM445 56h2v1h-2zM150 57h2v1h-2zM447 57h2v1h-2zM147 59h2v1h-2zM450 59h2v1h-2zM287 60h24v1h-24zM144 61h2v1h-2zM270 61h17v1h-17zM311 61h17v1h-17zM453 61h2v1h-2zM264 62h6v1h-6zM328 62h6v1h-6zM141 63h2v1h-2zM260 63h4v1h-4zM334 63h4v1h-4zM456 63h2v1h-2zM254 64h6v1h-6zM338 64h6v1h-6zM138 65h2v1h-2zM248 65h6v1h-6zM344 65h6v1h-6zM459 65h2v1h-2zM136 66h2v1h-2zM244 66h4v1h-4zM350 66h4v1h-4zM240 67h4v1h-4zM353 67h6v1h-6zM462 67h2v1h-2zM133 68h2v1h-2zM236 68h4v1h-4zM359 68h4v1h-4zM464 68h2v1h-2zM232 69h4v1h-4zM363 69h4v1h-4zM130 70h2v1h-2zM229 70h3v1h-3zM367 70h2v1h-2zM227 71h2v1h-2zM369 71h3v1h-3zM468 71h2v1h-2zM224 72h3v1h-3zM372 72h3v1h-3zM126 73h2v1h-2zM220 73h4v1h-4zM375 73h4v1h-4zM217 74h3v1h-3zM379 74h3v1h-3zM472 74h2v1h-2zM214 75h3v1h-3zM288 75h22v1h-22zM382 75h2v1h-2zM212 76h2v1h-2zM272 76h16v1h-16zM310 76h16v1h-16zM384 76h3v1h-3zM209 77h3v1h-3zM265 77h7v1h-7zM326 77h8v1h-8zM387 77h2v1h-2zM207 78h2v1h-2zM259 78h6v1h-6zM334 78h5v1h-5zM389 78h2v1h-2zM205 79h2v1h-2zM255 79h4v1h-4zM339 79h4v1h-4zM391 79h2v1h-2zM203 80h2v1h-2zM251 80h4v1h-4zM343 80h4v1h-4zM392 80h3v1h-3zM201 81h2v1h-2zM247 81h4v1h-4zM347 81h4v1h-4zM395 81h3v1h-3zM199 82h2v1h-2zM244 82h3v1h-3zM351 82h4v1h-4zM398 82h2v1h-2zM115 83h2v1h-2zM197 83h2v1h-2zM240 83h4v1h-4zM355 83h4v1h-4zM400 83h2v1h-2zM194 84h3v1h-3zM236 84h4v1h-4zM359 84h3v1h-3zM402 84h2v1h-2zM483 84h2v1h-2zM192 85h2v1h-2zM232 85h4v1h-4zM362 85h4v1h-4zM404 85h2v1h-2zM111 86h2v1h-2zM190 86h2v1h-2zM229 86h3v1h-3zM366 86h4v1h-4zM406 86h2v1h-2zM188 87h2v1h-2zM227 87h2v1h-2zM370 87h2v1h-2zM408 87h2v1h-2zM487 87h2v1h-2zM224 88h3v1h-3zM372 88h2v1h-2zM410 88h2v1h-2zM185 89h2v1h-2zM221 89h4v1h-4zM374 89h3v1h-3zM411 89h3v1h-3zM183 90h2v1h-2zM216 90h5v1h-5zM377 90h4v1h-4zM414 90h2v1h-2zM181 91h2v1h-2zM214 91h3v1h-3zM381 91h4v1h-4zM416 91h2v1h-2zM212 92h2v1h-2zM385 92h3v1h-3zM178 93h2v1h-2zM210 93h2v1h-2zM387 93h2v1h-2zM419 93h2v1h-2zM176 94h2v1h-2zM208 94h2v1h-2zM389 94h2v1h-2zM421 94h2v1h-2zM174 95h2v1h-2zM206 95h2v1h-2zM391 95h2v1h-2zM423 95h2v1h-2zM204 96h2v1h-2zM393 96h2v1h-2zM171 97h3v1h-3zM202 97h2v1h-2zM395 97h2v1h-2zM426 97h2v1h-2zM200 98h2v1h-2zM397 98h2v1h-2zM198 99h2v1h-2zM399 99h2v1h-2zM167 100h2v1h-2zM196 100h2v1h-2zM401 100h2v1h-2zM430 100h2v1h-2zM194 101h2v1h-2zM403 101h3v1h-3zM164 102h2v1h-2zM192 102h2v1h-2zM405 102h2v1h-2zM433 102h2v1h-2zM190 103h2v1h-2zM407 103h2v1h-2zM188 104h2v1h-2zM409 104h2v1h-2zM160 105h2v1h-2zM283 105h33v1h-33zM437 105h2v1h-2zM185 106h2v1h-2zM276 106h7v1h-7zM316 106h7v1h-7zM412 106h2v1h-2zM157 107h2v1h-2zM269 107h7v1h-7zM323 107h6v1h-6zM440 107h2v1h-2zM182 108h2v1h-2zM263 108h6v1h-6zM329 108h7v1h-7zM415 108h2v1h-2zM258 109h5v1h-5zM336 109h5v1h-5zM153 110h2v1h-2zM179 110h2v1h-2zM254 110h4v1h-4zM341 110h5v1h-5zM418 110h2v1h-2zM444 110h2v1h-2zM177 111h2v1h-2zM251 111h3v1h-3zM345 111h3v1h-3zM420 111h3v1h-3zM175 112h2v1h-2zM248 112h3v1h-3zM348 112h3v1h-3zM422 112h2v1h-2zM149 113h2v1h-2zM245 113h3v1h-3zM351 113h3v1h-3zM241 114h4v1h-4zM354 114h4v1h-4zM449 114h2v1h-2zM171 115h2v1h-2zM238 115h3v1h-3zM358 115h3v1h-3zM234 116h4v1h-4zM361 116h3v1h-3zM427 116h2v1h-2zM232 117h2v1h-2zM364 117h3v1h-3zM229 118h3v1h-3zM367 118h3v1h-3zM142 119h2v1h-2zM166 119h2v1h-2zM226 119h3v1h-3zM370 119h3v1h-3zM431 119h2v1h-2zM455 119h2v1h-2zM224 120h2v1h-2zM373 120h2v1h-2zM222 121h2v1h-2zM375 121h2v1h-2zM139 122h2v1h-2zM162 122h2v1h-2zM219 122h3v1h-3zM377 122h2v1h-2zM435 122h2v1h-2zM217 123h2v1h-2zM379 123h2v1h-2zM136 124h2v1h-2zM215 124h2v1h-2zM381 124h2v1h-2zM158 125h2v1h-2zM213 125h2v1h-2zM383 125h2v1h-2zM462 125h2v1h-2zM211 126h2v1h-2zM385 126h2v1h-2zM440 126h2v1h-2zM209 127h2v1h-2zM387 127h2v1h-2zM207 128h2v1h-2zM389 128h2v1h-2zM205 129h2v1h-2zM391 129h2v1h-2zM152 130h2v1h-2zM203 130h2v1h-2zM393 130h2v1h-2zM395 131h2v1h-2zM446 131h2v1h-2zM522 131h2v1h-2zM149 132h2v1h-2zM200 132h2v1h-2zM397 132h2v1h-2zM448 133h2v1h-2zM197 134h2v1h-2zM400 134h2v1h-2zM518 134h2v1h-2zM451 135h2v1h-2zM124 136h2v1h-2zM194 136h2v1h-2zM403 136h2v1h-2zM192 137h2v1h-2zM405 137h2v1h-2zM514 137h2v1h-2zM189 139h2v1h-2zM408 139h2v1h-2zM476 140h2v1h-2zM510 140h2v1h-2zM186 141h2v1h-2zM411 141h2v1h-2zM182 144h2v1h-2zM415 144h2v1h-2zM471 144h2v1h-2zM505 144h2v1h-2zM135 146h2v1h-2zM501 147h2v1h-2zM177 148h2v1h-2zM421 149h2v1h-2zM465 149h2v1h-2zM497 150h2v1h-2zM112 153h2v1h-2zM171 153h2v1h-2zM426 153h2v1h-2zM493 153h2v1h-2zM428 154h2v1h-2zM116 156h2v1h-2zM488 157h2v1h-2zM120 159h2v1h-2zM484 160h2v1h-2zM480 163h2v1h-2zM100 170h2v1h-2zM102 171h2v1h-2zM105 173h2v1h-2zM501 173h2v1h-2zM107 174h2v1h-2zM113 174h2v1h-2zM499 174h2v1h-2zM109 175h2v1h-2zM115 175h2v1h-2zM111 176h2v1h-2zM496 176h2v1h-2zM118 177h2v1h-2zM494 177h2v1h-2zM121 179h2v1h-2zM491 179h2v1h-2zM124 181h2v1h-2zM127 183h2v1h-2zM130 185h2v1h-2zM88 187h2v1h-2zM133 187h2v1h-2zM38 188h3v1h-3zM90 188h2v1h-2zM41 189h2v1h-2zM92 189h2v1h-2zM136 189h2v1h-2zM43 190h2v1h-2zM94 190h2v1h-2zM138 190h2v1h-2zM179 190h2v1h-2zM45 191h3v1h-3zM96 191h2v1h-2zM48 192h2v1h-2zM98 192h2v1h-2zM510 192h2v1h-2zM50 193h2v1h-2zM100 193h3v1h-3zM508 193h2v1h-2zM52 194h2v1h-2zM506 194h2v1h-2zM54 195h3v1h-3zM504 195h2v1h-2zM57 196h2v1h-2zM502 196h2v1h-2zM59 197h2v1h-2zM500 197h2v1h-2zM61 198h3v1h-3zM64 199h2v1h-2zM66 200h2v1h-2zM68 201h2v1h-2zM70 202h3v1h-3zM73 203h2v1h-2zM75 204h2v1h-2zM77 205h3v1h-3zM79 206h3v1h-3zM82 207h2v1h-2zM84 208h2v1h-2zM86 209h3v1h-3zM503 209h2v1h-2zM89 210h2v1h-2zM501 210h2v1h-2zM519 210h3v1h-3zM91 211h3v1h-3zM499 211h2v1h-2zM517 211h2v1h-2zM497 212h2v1h-2zM515 212h2v1h-2zM494 213h3v1h-3zM513 213h2v1h-2zM492 214h2v1h-2zM511 214h2v1h-2zM490 215h2v1h-2zM509 215h2v1h-2zM488 216h2v1h-2zM507 216h2v1h-2zM485 217h3v1h-3zM483 218h2v1h-2zM481 219h2v1h-2zM479 220h2v1h-2zM476 221h3v1h-3zM72 225h2v1h-2zM74 226h3v1h-3zM77 227h4v1h-4zM81 228h3v1h-3zM84 229h3v1h-3zM526 230h3v1h-3zM523 231h3v1h-3zM519 232h4v1h-4zM516 233h3v1h-3zM513 234h3v1h-3zM66 245h4v1h-4zM70 246h4v1h-4zM74 247h4v1h-4zM78 248h4v1h-4zM530 250h4v1h-4zM526 251h4v1h-4zM522 252h4v1h-4zM518 253h4v1h-4zM577 265h5v1h-5zM62 266h5v1h-5zM570 266h7v1h-7zM67 267h6v1h-6zM563 267h7v1h-7zM73 268h5v1h-5zM555 268h8v1h-8zM548 269h7v1h-7zM541 270h7v1h-7zM529 271h12v1h-12zM522 272h7v1h-7zM60 287h17v1h-17zM523 292h16v1h-16zM75 299h31v1h-31zM131 299h13v1h-13zM493 299h31v1h-31zM60 306h16v1h-16zM522 311h16v1h-16zM69 326h9v1h-9zM58 327h11v1h-11zM51 328h7v1h-7zM44 329h7v1h-7zM36 330h8v1h-8zM521 330h5v1h-5zM29 331h7v1h-7zM526 331h6v1h-6zM22 332h7v1h-7zM532 332h5v1h-5zM18 333h4v1h-4zM148 342h2v1h-2zM144 343h4v1h-4zM140 344h4v1h-4zM77 345h4v1h-4zM138 345h2v1h-2zM73 346h4v1h-4zM69 347h4v1h-4zM65 348h4v1h-4zM517 350h4v1h-4zM521 351h4v1h-4zM525 352h4v1h-4zM529 353h4v1h-4zM83 364h3v1h-3zM80 365h3v1h-3zM76 366h4v1h-4zM73 367h3v1h-3zM70 368h3v1h-3zM512 369h3v1h-3zM515 370h3v1h-3zM518 371h4v1h-4zM522 372h3v1h-3zM525 373h2v1h-2zM120 377h3v1h-3zM118 378h2v1h-2zM116 379h2v1h-2zM114 380h2v1h-2zM111 381h3v1h-3zM89 382h3v1h-3zM109 382h2v1h-2zM87 383h2v1h-2zM107 383h2v1h-2zM85 384h2v1h-2zM105 384h2v1h-2zM83 385h2v1h-2zM102 385h3v1h-3zM81 386h2v1h-2zM100 386h2v1h-2zM79 387h2v1h-2zM98 387h2v1h-2zM505 387h3v1h-3zM77 388h2v1h-2zM96 388h2v1h-2zM508 388h2v1h-2zM94 389h2v1h-2zM510 389h2v1h-2zM512 390h3v1h-3zM515 391h2v1h-2zM517 392h3v1h-3zM520 393h2v1h-2zM522 394h2v1h-2zM524 395h2v1h-2zM526 396h3v1h-3zM529 397h2v1h-2zM531 398h2v1h-2zM533 399h2v1h-2zM535 400h3v1h-3zM97 401h2v1h-2zM538 401h2v1h-2zM95 402h2v1h-2zM540 402h2v1h-2zM93 403h2v1h-2zM542 403h3v1h-3zM91 404h2v1h-2zM545 404h2v1h-2zM89 405h2v1h-2zM496 405h2v1h-2zM547 405h2v1h-2zM86 406h3v1h-3zM498 406h2v1h-2zM549 406h2v1h-2zM500 407h2v1h-2zM551 407h3v1h-3zM459 408h2v1h-2zM502 408h2v1h-2zM554 408h2v1h-2zM461 409h2v1h-2zM504 409h2v1h-2zM556 409h2v1h-2zM506 410h2v1h-2zM558 410h3v1h-3zM464 411h2v1h-2zM508 411h3v1h-3zM467 413h2v1h-2zM470 415h2v1h-2zM473 417h2v1h-2zM106 419h2v1h-2zM476 419h2v1h-2zM103 421h2v1h-2zM479 421h2v1h-2zM101 422h2v1h-2zM486 422h2v1h-2zM482 423h2v1h-2zM488 423h2v1h-2zM98 424h2v1h-2zM484 424h2v1h-2zM490 424h2v1h-2zM96 425h2v1h-2zM493 426h2v1h-2zM495 427h2v1h-2zM497 428h2v1h-2zM117 435h2v1h-2zM224 437h4v1h-4zM113 438h2v1h-2zM218 438h6v1h-6zM212 439h6v1h-6zM477 439h2v1h-2zM209 440h3v1h-3zM109 441h2v1h-2zM481 442h2v1h-2zM169 444h2v1h-2zM104 445h2v1h-2zM171 445h2v1h-2zM426 445h2v1h-2zM485 445h2v1h-2zM100 448h2v1h-2zM132 449h2v1h-2zM421 449h2v1h-2zM177 450h2v1h-2zM96 451h2v1h-2zM462 452h2v1h-2zM127 453h2v1h-2zM92 454h2v1h-2zM182 454h2v1h-2zM415 454h2v1h-2zM186 457h2v1h-2zM411 457h2v1h-2zM87 458h2v1h-2zM121 458h2v1h-2zM189 459h2v1h-2zM408 459h2v1h-2zM83 461h2v1h-2zM192 461h2v1h-2zM405 461h2v1h-2zM194 462h2v1h-2zM403 462h2v1h-2zM146 463h2v1h-2zM79 464h2v1h-2zM197 464h2v1h-2zM400 464h2v1h-2zM149 465h2v1h-2zM200 466h2v1h-2zM397 466h2v1h-2zM448 466h2v1h-2zM75 467h2v1h-2zM395 467h2v1h-2zM446 467h2v1h-2zM152 468h2v1h-2zM203 468h2v1h-2zM393 468h2v1h-2zM205 469h2v1h-2zM391 469h2v1h-2zM207 470h2v1h-2zM389 470h2v1h-2zM209 471h2v1h-2zM387 471h2v1h-2zM211 472h2v1h-2zM385 472h2v1h-2zM440 472h2v1h-2zM135 473h2v1h-2zM158 473h2v1h-2zM213 473h2v1h-2zM383 473h2v1h-2zM462 473h2v1h-2zM136 474h2v1h-2zM215 474h2v1h-2zM381 474h2v1h-2zM217 475h2v1h-2zM379 475h2v1h-2zM162 476h2v1h-2zM219 476h3v1h-3zM377 476h2v1h-2zM435 476h2v1h-2zM458 476h2v1h-2zM222 477h2v1h-2zM375 477h2v1h-2zM224 478h2v1h-2zM373 478h2v1h-2zM142 479h2v1h-2zM166 479h2v1h-2zM226 479h3v1h-3zM370 479h3v1h-3zM431 479h2v1h-2zM455 479h2v1h-2zM229 480h3v1h-3zM367 480h3v1h-3zM232 481h3v1h-3zM365 481h2v1h-2zM235 482h3v1h-3zM361 482h4v1h-4zM427 482h2v1h-2zM171 483h2v1h-2zM238 483h3v1h-3zM358 483h3v1h-3zM241 484h4v1h-4zM354 484h4v1h-4zM449 484h2v1h-2zM149 485h2v1h-2zM245 485h3v1h-3zM351 485h3v1h-3zM175 486h2v1h-2zM248 486h3v1h-3zM348 486h3v1h-3zM422 486h2v1h-2zM176 487h3v1h-3zM251 487h3v1h-3zM345 487h3v1h-3zM420 487h2v1h-2zM153 488h2v1h-2zM179 488h2v1h-2zM253 488h5v1h-5zM341 488h4v1h-4zM418 488h2v1h-2zM444 488h2v1h-2zM258 489h5v1h-5zM336 489h5v1h-5zM182 490h2v1h-2zM263 490h6v1h-6zM329 490h7v1h-7zM415 490h2v1h-2zM157 491h2v1h-2zM269 491h7v1h-7zM323 491h6v1h-6zM440 491h2v1h-2zM185 492h2v1h-2zM276 492h7v1h-7zM316 492h7v1h-7zM412 492h2v1h-2zM160 493h2v1h-2zM283 493h33v1h-33zM437 493h2v1h-2zM188 494h2v1h-2zM409 494h2v1h-2zM190 495h2v1h-2zM407 495h2v1h-2zM164 496h2v1h-2zM192 496h2v1h-2zM405 496h2v1h-2zM433 496h2v1h-2zM193 497h3v1h-3zM403 497h2v1h-2zM167 498h2v1h-2zM196 498h2v1h-2zM401 498h2v1h-2zM430 498h2v1h-2zM198 499h2v1h-2zM399 499h2v1h-2zM200 500h2v1h-2zM397 500h2v1h-2zM171 501h2v1h-2zM202 501h2v1h-2zM395 501h2v1h-2zM425 501h3v1h-3zM204 502h2v1h-2zM393 502h2v1h-2zM174 503h2v1h-2zM206 503h2v1h-2zM391 503h2v1h-2zM423 503h2v1h-2zM176 504h2v1h-2zM208 504h2v1h-2zM389 504h2v1h-2zM421 504h2v1h-2zM178 505h2v1h-2zM210 505h2v1h-2zM387 505h2v1h-2zM419 505h2v1h-2zM211 506h3v1h-3zM385 506h2v1h-2zM181 507h2v1h-2zM214 507h3v1h-3zM381 507h4v1h-4zM416 507h2v1h-2zM183 508h2v1h-2zM217 508h4v1h-4zM377 508h4v1h-4zM414 508h2v1h-2zM185 509h3v1h-3zM221 509h4v1h-4zM374 509h3v1h-3zM412 509h2v1h-2zM225 510h2v1h-2zM372 510h3v1h-3zM410 510h2v1h-2zM188 511h2v1h-2zM227 511h2v1h-2zM370 511h2v1h-2zM408 511h2v1h-2zM487 511h2v1h-2zM111 512h2v1h-2zM190 512h2v1h-2zM229 512h3v1h-3zM366 512h4v1h-4zM406 512h2v1h-2zM192 513h2v1h-2zM232 513h4v1h-4zM362 513h4v1h-4zM404 513h2v1h-2zM194 514h3v1h-3zM236 514h4v1h-4zM359 514h3v1h-3zM402 514h2v1h-2zM483 514h2v1h-2zM115 515h2v1h-2zM197 515h2v1h-2zM240 515h4v1h-4zM355 515h4v1h-4zM400 515h2v1h-2zM199 516h2v1h-2zM244 516h3v1h-3zM351 516h4v1h-4zM398 516h2v1h-2zM201 517h2v1h-2zM247 517h4v1h-4zM347 517h4v1h-4zM395 517h3v1h-3zM203 518h2v1h-2zM251 518h4v1h-4zM343 518h4v1h-4zM393 518h2v1h-2zM205 519h2v1h-2zM255 519h4v1h-4zM339 519h4v1h-4zM391 519h2v1h-2zM207 520h2v1h-2zM259 520h6v1h-6zM334 520h5v1h-5zM388 520h3v1h-3zM209 521h3v1h-3zM265 521h7v1h-7zM326 521h8v1h-8zM387 521h2v1h-2zM212 522h2v1h-2zM272 522h16v1h-16zM310 522h17v1h-17zM384 522h3v1h-3zM214 523h3v1h-3zM287 523h23v1h-23zM382 523h2v1h-2zM217 524h3v1h-3zM379 524h3v1h-3zM472 524h2v1h-2zM126 525h2v1h-2zM220 525h4v1h-4zM375 525h4v1h-4zM224 526h3v1h-3zM372 526h3v1h-3zM227 527h2v1h-2zM368 527h4v1h-4zM468 527h2v1h-2zM130 528h2v1h-2zM229 528h3v1h-3zM367 528h2v1h-2zM232 529h4v1h-4zM363 529h4v1h-4zM133 530h2v1h-2zM236 530h4v1h-4zM359 530h4v1h-4zM464 530h2v1h-2zM240 531h4v1h-4zM354 531h5v1h-5zM462 531h2v1h-2zM136 532h2v1h-2zM244 532h4v1h-4zM350 532h4v1h-4zM138 533h2v1h-2zM248 533h6v1h-6zM344 533h6v1h-6zM459 533h2v1h-2zM254 534h6v1h-6zM338 534h6v1h-6zM141 535h2v1h-2zM260 535h4v1h-4zM334 535h4v1h-4zM456 535h2v1h-2zM264 536h6v1h-6zM327 536h7v1h-7zM144 537h2v1h-2zM270 537h18v1h-18zM311 537h17v1h-17zM453 537h2v1h-2zM287 538h24v1h-24zM147 539h2v1h-2zM450 539h2v1h-2zM150 541h2v1h-2zM447 541h2v1h-2zM445 542h2v1h-2zM153 543h2v1h-2zM155 544h2v1h-2zM442 544h2v1h-2zM158 546h2v1h-2zM439 546h2v1h-2zM160 547h2v1h-2zM437 547h2v1h-2zM162 548h2v1h-2zM435 548h2v1h-2zM164 549h2v1h-2zM433 549h2v1h-2zM166 550h2v1h-2zM431 550h2v1h-2zM168 551h2v1h-2zM429 551h2v1h-2zM170 552h2v1h-2zM427 552h2v1h-2zM172 553h2v1h-2zM425 553h2v1h-2zM174 554h3v1h-3zM422 554h3v1h-3zM177 555h2v1h-2zM420 555h2v1h-2zM179 556h2v1h-2zM418 556h2v1h-2zM181 557h2v1h-2zM416 557h2v1h-2zM183 558h3v1h-3zM413 558h3v1h-3zM186 559h3v1h-3zM411 559h2v1h-2zM188 560h2v1h-2zM409 560h2v1h-2zM190 561h2v1h-2zM407 561h2v1h-2zM192 562h3v1h-3zM404 562h3v1h-3zM195 563h2v1h-2zM402 563h2v1h-2zM197 564h2v1h-2zM400 564h2v1h-2zM199 565h2v1h-2zM398 565h2v1h-2zM201 566h3v1h-3zM395 566h3v1h-3zM204 567h3v1h-3zM391 567h4v1h-4zM207 568h4v1h-4zM388 568h3v1h-3zM211 569h3v1h-3zM385 569h3v1h-3zM214 570h3v1h-3zM382 570h3v1h-3zM217 571h3v1h-3zM379 571h3v1h-3zM220 572h3v1h-3zM376 572h3v1h-3zM223 573h3v1h-3zM372 573h4v1h-4zM226 574h4v1h-4zM369 574h3v1h-3zM230 575h4v1h-4zM365 575h4v1h-4zM234 576h4v1h-4zM361 576h4v1h-4zM238 577h5v1h-5zM356 577h5v1h-5zM243 578h5v1h-5zM351 578h5v1h-5zM248 579h7v1h-7zM343 579h8v1h-8zM255 580h10v1h-10zM333 580h10v1h-10zM265 581h10v1h-10zM323 581h10v1h-10zM275 582h10v1h-10zM313 582h10v1h-10zM285 583h28v1h-28zM15 285v28h1v-28zM16 275v10h1v-10zM16 313v10h1v-10zM17 265v10h1v-10zM17 323v10h1v-10zM18 255v10h1v-10zM18 334v9h1v-9zM19 248v7h1v-7zM19 343v8h1v-8zM20 243v5h1v-5zM20 351v5h1v-5zM21 238v5h1v-5zM21 356v5h1v-5zM22 234v4h1v-4zM22 361v4h1v-4zM23 230v4h1v-4zM23 365v4h1v-4zM24 226v4h1v-4zM24 369v3h1v-3zM25 223v3h1v-3zM25 372v4h1v-4zM26 220v3h1v-3zM26 376v3h1v-3zM27 217v3h1v-3zM27 379v3h1v-3zM28 214v3h1v-3zM28 382v3h1v-3zM29 211v3h1v-3zM29 385v3h1v-3zM30 207v4h1v-4zM30 388v3h1v-3zM31 204v3h1v-3zM31 391v4h1v-4zM32 201v3h1v-3zM32 395v3h1v-3zM33 199v2h1v-2zM33 398v2h1v-2zM34 197v2h1v-2zM34 400v2h1v-2zM35 195v2h1v-2zM35 402v2h1v-2zM36 192v3h1v-3zM36 404v3h1v-3zM37 190v2h1v-2zM37 407v2h1v-2zM38 189v1h1v-1zM38 409v2h1v-2zM39 186v2h1v-2zM39 411v2h1v-2zM40 183v3h1v-3zM40 413v3h1v-3zM41 181v2h1v-2zM41 416v2h1v-2zM42 179v2h1v-2zM42 418v2h1v-2zM43 177v2h1v-2zM43 420v2h1v-2zM44 174v3h1v-3zM44 422v3h1v-3zM45 172v2h1v-2zM45 425v2h1v-2zM46 170v2h1v-2zM46 427v2h1v-2zM47 168v2h1v-2zM47 429v2h1v-2zM48 166v2h1v-2zM48 431v2h1v-2zM49 164v2h1v-2zM49 433v2h1v-2zM50 162v2h1v-2zM50 435v2h1v-2zM51 160v2h1v-2zM51 437v2h1v-2zM52 158v2h1v-2zM52 439v2h1v-2zM53 157v1h1v-1zM53 441v1h1v-1zM54 155v2h1v-2zM54 442v2h1v-2zM55 153v2h1v-2zM55 444v1h1v-1zM56 152v1h1v-1zM56 445v2h1v-2zM57 150v2h1v-2zM57 447v2h1v-2zM58 149v1h1v-1zM58 449v1h1v-1zM59 147v2h1v-2zM59 450v2h1v-2zM60 146v1h1v-1zM60 288v18h1v-18zM60 307v4h1v-4zM60 452v1h1v-1zM61 144v2h1v-2zM61 270v17h1v-17zM61 311v16h1v-16zM61 453v2h1v-2zM62 143v1h1v-1zM62 264v2h1v-2zM62 267v3h1v-3zM62 328v6h1v-6zM62 455v1h1v-1zM63 141v2h1v-2zM63 260v4h1v-4zM63 334v4h1v-4zM63 456v2h1v-2zM64 140v1h1v-1zM64 254v6h1v-6zM64 338v6h1v-6zM64 458v1h1v-1zM65 138v2h1v-2zM65 248v6h1v-6zM65 344v4h1v-4zM65 349v1h1v-1zM65 459v2h1v-2zM66 136v2h1v-2zM66 244v1h1v-1zM66 246v2h1v-2zM66 350v4h1v-4zM66 461v1h1v-1zM67 135v1h1v-1zM67 240v4h1v-4zM67 354v5h1v-5zM67 462v2h1v-2zM68 133v2h1v-2zM68 236v4h1v-4zM68 359v4h1v-4zM68 464v2h1v-2zM69 132v1h1v-1zM69 232v4h1v-4zM69 363v4h1v-4zM69 466v1h1v-1zM70 130v2h1v-2zM70 229v3h1v-3zM70 367v1h1v-1zM70 467v1h1v-1zM71 129v1h1v-1zM71 227v2h1v-2zM71 369v3h1v-3zM71 468v2h1v-2zM72 128v1h1v-1zM72 224v1h1v-1zM72 226v1h1v-1zM72 372v3h1v-3zM72 470v1h1v-1zM73 126v2h1v-2zM73 220v4h1v-4zM73 375v4h1v-4zM73 469v1h1v-1zM73 471v1h1v-1zM74 125v1h1v-1zM74 217v3h1v-3zM74 379v3h1v-3zM74 468v1h1v-1zM74 472v2h1v-2zM75 124v1h1v-1zM75 214v3h1v-3zM75 288v11h1v-11zM75 300v6h1v-6zM75 307v3h1v-3zM75 382v2h1v-2zM75 474v1h1v-1zM76 123v1h1v-1zM76 212v2h1v-2zM76 272v15h1v-15zM76 310v16h1v-16zM76 384v3h1v-3zM76 475v1h1v-1zM77 122v1h1v-1zM77 209v3h1v-3zM77 265v3h1v-3zM77 269v3h1v-3zM77 327v7h1v-7zM77 387v1h1v-1zM77 466v1h1v-1zM77 476v1h1v-1zM78 121v1h1v-1zM78 207v2h1v-2zM78 259v6h1v-6zM78 334v5h1v-5zM78 389v2h1v-2zM78 465v1h1v-1zM78 477v1h1v-1zM79 120v1h1v-1zM79 255v4h1v-4zM79 339v4h1v-4zM79 391v2h1v-2zM79 478v1h1v-1zM80 119v1h1v-1zM80 203v2h1v-2zM80 251v4h1v-4zM80 343v2h1v-2zM80 346v1h1v-1zM80 393v2h1v-2zM80 479v1h1v-1zM81 118v1h1v-1zM81 201v2h1v-2zM81 247v1h1v-1zM81 249v2h1v-2zM81 347v4h1v-4zM81 395v3h1v-3zM81 463v1h1v-1zM81 480v1h1v-1zM82 117v1h1v-1zM82 199v2h1v-2zM82 244v3h1v-3zM82 351v4h1v-4zM82 398v2h1v-2zM82 462v1h1v-1zM82 481v1h1v-1zM83 115v2h1v-2zM83 197v2h1v-2zM83 240v4h1v-4zM83 355v4h1v-4zM83 400v2h1v-2zM83 482v1h1v-1zM84 114v1h1v-1zM84 194v3h1v-3zM84 236v4h1v-4zM84 359v3h1v-3zM84 402v2h1v-2zM84 483v2h1v-2zM85 113v1h1v-1zM85 192v2h1v-2zM85 232v4h1v-4zM85 362v2h1v-2zM85 365v1h1v-1zM85 404v2h1v-2zM85 460v1h1v-1zM85 485v1h1v-1zM86 111v2h1v-2zM86 190v2h1v-2zM86 230v2h1v-2zM86 366v4h1v-4zM86 407v1h1v-1zM86 459v1h1v-1zM86 486v1h1v-1zM87 110v1h1v-1zM87 188v2h1v-2zM87 227v2h1v-2zM87 370v2h1v-2zM87 408v2h1v-2zM87 487v2h1v-2zM88 109v1h1v-1zM88 225v2h1v-2zM88 372v2h1v-2zM88 410v2h1v-2zM88 489v1h1v-1zM89 108v1h1v-1zM89 185v2h1v-2zM89 221v4h1v-4zM89 374v3h1v-3zM89 412v2h1v-2zM89 457v1h1v-1zM89 490v1h1v-1zM90 107v1h1v-1zM90 183v2h1v-2zM90 217v4h1v-4zM90 377v4h1v-4zM90 414v2h1v-2zM90 456v1h1v-1zM90 491v1h1v-1zM91 106v1h1v-1zM91 181v2h1v-2zM91 214v3h1v-3zM91 381v1h1v-1zM91 383v2h1v-2zM91 416v2h1v-2zM91 455v1h1v-1zM91 492v1h1v-1zM92 105v1h1v-1zM92 180v1h1v-1zM92 212v2h1v-2zM92 385v2h1v-2zM92 418v1h1v-1zM92 493v1h1v-1zM93 104v1h1v-1zM93 178v2h1v-2zM93 210v1h1v-1zM93 387v2h1v-2zM93 419v2h1v-2zM93 494v1h1v-1zM94 103v1h1v-1zM94 176v2h1v-2zM94 208v2h1v-2zM94 390v1h1v-1zM94 421v2h1v-2zM94 453v1h1v-1zM94 495v1h1v-1zM95 102v1h1v-1zM95 174v2h1v-2zM95 206v2h1v-2zM95 391v2h1v-2zM95 423v2h1v-2zM95 452v1h1v-1zM95 496v1h1v-1zM96 101v1h1v-1zM96 173v1h1v-1zM96 204v2h1v-2zM96 393v2h1v-2zM96 497v1h1v-1zM97 100v1h1v-1zM97 171v2h1v-2zM97 202v2h1v-2zM97 395v2h1v-2zM97 426v2h1v-2zM97 498v1h1v-1zM98 99v1h1v-1zM98 170v1h1v-1zM98 200v2h1v-2zM98 397v2h1v-2zM98 428v1h1v-1zM98 450v1h1v-1zM98 499v1h1v-1zM99 98v1h1v-1zM99 169v1h1v-1zM99 198v2h1v-2zM99 399v2h1v-2zM99 429v1h1v-1zM99 449v1h1v-1zM99 500v1h1v-1zM100 97v1h1v-1zM100 167v2h1v-2zM100 196v2h1v-2zM100 401v2h1v-2zM100 423v1h1v-1zM100 430v2h1v-2zM100 501v1h1v-1zM101 96v1h1v-1zM101 166v1h1v-1zM101 194v2h1v-2zM101 403v2h1v-2zM101 432v1h1v-1zM101 502v1h1v-1zM102 95v1h1v-1zM102 164v2h1v-2zM102 192v1h1v-1zM102 405v2h1v-2zM102 433v2h1v-2zM102 447v1h1v-1zM102 503v1h1v-1zM103 94v1h1v-1zM103 163v1h1v-1zM103 190v2h1v-2zM103 407v2h1v-2zM103 435v1h1v-1zM103 446v1h1v-1zM103 504v1h1v-1zM104 93v1h1v-1zM104 162v1h1v-1zM104 172v1h1v-1zM104 188v2h1v-2zM104 409v2h1v-2zM104 436v1h1v-1zM104 505v1h1v-1zM105 92v1h1v-1zM105 160v2h1v-2zM105 187v1h1v-1zM105 283v16h1v-16zM105 300v16h1v-16zM105 411v1h1v-1zM105 420v1h1v-1zM105 437v2h1v-2zM105 506v1h1v-1zM106 91v1h1v-1zM106 159v1h1v-1zM106 185v2h1v-2zM106 276v7h1v-7zM106 316v7h1v-7zM106 412v2h1v-2zM106 439v1h1v-1zM106 444v1h1v-1zM106 507v1h1v-1zM107 90v1h1v-1zM107 157v2h1v-2zM107 184v1h1v-1zM107 269v7h1v-7zM107 323v6h1v-6zM107 414v1h1v-1zM107 440v2h1v-2zM107 443v1h1v-1zM107 508v1h1v-1zM108 89v1h1v-1zM108 156v1h1v-1zM108 182v2h1v-2zM108 263v6h1v-6zM108 329v7h1v-7zM108 415v2h1v-2zM108 418v1h1v-1zM108 442v1h1v-1zM108 509v1h1v-1zM109 88v1h1v-1zM109 155v1h1v-1zM109 181v1h1v-1zM109 258v5h1v-5zM109 336v5h1v-5zM109 417v1h1v-1zM109 443v1h1v-1zM109 510v1h1v-1zM110 87v1h1v-1zM110 153v2h1v-2zM110 179v2h1v-2zM110 254v4h1v-4zM110 341v4h1v-4zM110 418v2h1v-2zM110 444v2h1v-2zM110 511v1h1v-1zM111 152v1h1v-1zM111 177v2h1v-2zM111 251v3h1v-3zM111 345v3h1v-3zM111 420v2h1v-2zM111 440v1h1v-1zM111 446v1h1v-1zM112 151v1h1v-1zM112 175v1h1v-1zM112 248v3h1v-3zM112 348v3h1v-3zM112 422v2h1v-2zM112 439v1h1v-1zM112 447v1h1v-1zM113 85v1h1v-1zM113 149v2h1v-2zM113 245v3h1v-3zM113 351v3h1v-3zM113 424v1h1v-1zM113 448v1h1v-1zM113 513v1h1v-1zM114 84v1h1v-1zM114 148v1h1v-1zM114 154v1h1v-1zM114 173v1h1v-1zM114 241v4h1v-4zM114 354v4h1v-4zM114 425v1h1v-1zM114 449v2h1v-2zM114 514v1h1v-1zM115 147v1h1v-1zM115 155v1h1v-1zM115 171v2h1v-2zM115 238v3h1v-3zM115 358v3h1v-3zM115 426v1h1v-1zM115 437v1h1v-1zM115 451v1h1v-1zM116 146v1h1v-1zM116 170v1h1v-1zM116 235v3h1v-3zM116 361v3h1v-3zM116 427v2h1v-2zM116 436v1h1v-1zM116 452v1h1v-1zM117 82v1h1v-1zM117 145v1h1v-1zM117 169v1h1v-1zM117 176v1h1v-1zM117 232v3h1v-3zM117 364v3h1v-3zM117 429v1h1v-1zM117 453v1h1v-1zM117 516v1h1v-1zM118 81v1h1v-1zM118 144v1h1v-1zM118 157v1h1v-1zM118 168v1h1v-1zM118 229v3h1v-3zM118 367v3h1v-3zM118 430v1h1v-1zM118 454v1h1v-1zM118 517v1h1v-1zM119 80v1h1v-1zM119 142v2h1v-2zM119 158v1h1v-1zM119 166v2h1v-2zM119 226v3h1v-3zM119 370v3h1v-3zM119 431v2h1v-2zM119 434v1h1v-1zM119 455v2h1v-2zM119 518v1h1v-1zM120 79v1h1v-1zM120 141v1h1v-1zM120 165v1h1v-1zM120 178v1h1v-1zM120 224v2h1v-2zM120 373v2h1v-2zM120 433v1h1v-1zM120 457v1h1v-1zM120 519v1h1v-1zM121 78v1h1v-1zM121 140v1h1v-1zM121 164v1h1v-1zM121 222v2h1v-2zM121 375v2h1v-2zM121 434v1h1v-1zM121 520v1h1v-1zM122 77v1h1v-1zM122 139v1h1v-1zM122 160v1h1v-1zM122 162v2h1v-2zM122 219v3h1v-3zM122 378v1h1v-1zM122 435v2h1v-2zM122 459v1h1v-1zM122 521v1h1v-1zM123 76v1h1v-1zM123 138v1h1v-1zM123 161v1h1v-1zM123 180v1h1v-1zM123 217v2h1v-2zM123 379v2h1v-2zM123 437v1h1v-1zM123 457v1h1v-1zM123 460v1h1v-1zM123 522v1h1v-1zM124 75v1h1v-1zM124 137v1h1v-1zM124 160v1h1v-1zM124 215v2h1v-2zM124 381v2h1v-2zM124 438v1h1v-1zM124 456v1h1v-1zM124 461v1h1v-1zM124 523v1h1v-1zM125 74v1h1v-1zM125 135v1h1v-1zM125 158v2h1v-2zM125 213v2h1v-2zM125 383v2h1v-2zM125 439v1h1v-1zM125 455v1h1v-1zM125 462v2h1v-2zM125 524v1h1v-1zM126 134v1h1v-1zM126 137v1h1v-1zM126 157v1h1v-1zM126 182v1h1v-1zM126 211v2h1v-2zM126 385v2h1v-2zM126 440v2h1v-2zM126 454v1h1v-1zM126 464v1h1v-1zM127 133v1h1v-1zM127 138v1h1v-1zM127 156v1h1v-1zM127 209v2h1v-2zM127 387v2h1v-2zM127 442v1h1v-1zM127 465v1h1v-1zM128 72v1h1v-1zM128 132v1h1v-1zM128 139v1h1v-1zM128 155v1h1v-1zM128 207v2h1v-2zM128 389v2h1v-2zM128 443v1h1v-1zM128 466v1h1v-1zM128 526v1h1v-1zM129 71v1h1v-1zM129 73v1h1v-1zM129 131v1h1v-1zM129 140v1h1v-1zM129 154v1h1v-1zM129 184v1h1v-1zM129 205v2h1v-2zM129 391v2h1v-2zM129 444v1h1v-1zM129 452v1h1v-1zM129 467v1h1v-1zM129 527v1h1v-1zM130 74v1h1v-1zM130 130v1h1v-1zM130 141v1h1v-1zM130 152v2h1v-2zM130 203v2h1v-2zM130 393v2h1v-2zM130 445v1h1v-1zM130 451v1h1v-1zM130 468v1h1v-1zM131 75v2h1v-2zM131 129v1h1v-1zM131 142v1h1v-1zM131 151v1h1v-1zM131 202v1h1v-1zM131 395v2h1v-2zM131 446v2h1v-2zM131 450v1h1v-1zM131 469v1h1v-1zM132 69v1h1v-1zM132 77v1h1v-1zM132 128v1h1v-1zM132 143v1h1v-1zM132 150v1h1v-1zM132 186v1h1v-1zM132 200v2h1v-2zM132 397v2h1v-2zM132 448v1h1v-1zM132 470v1h1v-1zM132 529v1h1v-1zM133 78v1h1v-1zM133 127v1h1v-1zM133 144v1h1v-1zM133 149v1h1v-1zM133 199v1h1v-1zM133 399v1h1v-1zM133 471v1h1v-1zM134 79v2h1v-2zM134 126v1h1v-1zM134 145v1h1v-1zM134 148v1h1v-1zM134 197v2h1v-2zM134 400v2h1v-2zM134 450v1h1v-1zM134 472v1h1v-1zM135 67v1h1v-1zM135 81v1h1v-1zM135 125v1h1v-1zM135 147v1h1v-1zM135 188v1h1v-1zM135 196v1h1v-1zM135 402v1h1v-1zM135 451v1h1v-1zM135 531v1h1v-1zM136 82v1h1v-1zM136 194v2h1v-2zM136 403v2h1v-2zM136 452v1h1v-1zM137 83v2h1v-2zM137 145v1h1v-1zM137 192v2h1v-2zM137 405v2h1v-2zM137 453v1h1v-1zM137 472v1h1v-1zM138 85v1h1v-1zM138 123v1h1v-1zM138 144v1h1v-1zM138 191v1h1v-1zM138 407v1h1v-1zM138 454v1h1v-1zM138 471v1h1v-1zM138 475v1h1v-1zM139 86v1h1v-1zM139 143v1h1v-1zM139 189v1h1v-1zM139 408v2h1v-2zM139 455v1h1v-1zM139 470v1h1v-1zM139 476v1h1v-1zM140 64v1h1v-1zM140 87v2h1v-2zM140 121v1h1v-1zM140 142v1h1v-1zM140 188v1h1v-1zM140 410v1h1v-1zM140 456v1h1v-1zM140 469v1h1v-1zM140 477v1h1v-1zM140 534v1h1v-1zM141 89v1h1v-1zM141 120v1h1v-1zM141 123v1h1v-1zM141 141v1h1v-1zM141 186v2h1v-2zM141 411v2h1v-2zM141 457v1h1v-1zM141 468v1h1v-1zM141 478v1h1v-1zM142 90v1h1v-1zM142 124v1h1v-1zM142 140v1h1v-1zM142 185v1h1v-1zM142 413v1h1v-1zM142 458v1h1v-1zM142 467v1h1v-1zM143 62v1h1v-1zM143 91v1h1v-1zM143 125v1h1v-1zM143 139v1h1v-1zM143 184v1h1v-1zM143 414v1h1v-1zM143 459v1h1v-1zM143 466v1h1v-1zM143 536v1h1v-1zM144 92v2h1v-2zM144 118v1h1v-1zM144 126v1h1v-1zM144 138v1h1v-1zM144 182v2h1v-2zM144 415v2h1v-2zM144 460v1h1v-1zM144 465v1h1v-1zM144 480v1h1v-1zM145 94v1h1v-1zM145 117v1h1v-1zM145 127v2h1v-2zM145 137v1h1v-1zM145 181v1h1v-1zM145 417v1h1v-1zM145 461v1h1v-1zM145 464v1h1v-1zM145 481v1h1v-1zM146 60v1h1v-1zM146 95v1h1v-1zM146 116v1h1v-1zM146 129v1h1v-1zM146 136v1h1v-1zM146 180v1h1v-1zM146 418v1h1v-1zM146 462v1h1v-1zM146 482v1h1v-1zM146 538v1h1v-1zM147 96v2h1v-2zM147 115v1h1v-1zM147 130v1h1v-1zM147 135v1h1v-1zM147 179v1h1v-1zM147 419v1h1v-1zM147 483v1h1v-1zM148 98v1h1v-1zM148 114v1h1v-1zM148 131v1h1v-1zM148 134v1h1v-1zM148 177v2h1v-2zM148 420v1h1v-1zM148 464v1h1v-1zM148 484v1h1v-1zM149 58v1h1v-1zM149 99v1h1v-1zM149 133v1h1v-1zM149 176v1h1v-1zM149 421v2h1v-2zM149 540v1h1v-1zM150 100v2h1v-2zM150 175v1h1v-1zM150 423v1h1v-1zM150 466v1h1v-1zM151 102v1h1v-1zM151 112v1h1v-1zM151 131v1h1v-1zM151 174v1h1v-1zM151 424v1h1v-1zM151 464v1h1v-1zM151 467v1h1v-1zM151 486v1h1v-1zM152 56v1h1v-1zM152 103v1h1v-1zM152 111v1h1v-1zM152 173v1h1v-1zM152 425v1h1v-1zM152 463v1h1v-1zM152 487v1h1v-1zM152 542v1h1v-1zM153 104v2h1v-2zM153 171v2h1v-2zM153 426v2h1v-2zM153 462v1h1v-1zM153 485v2h1v-2zM154 106v1h1v-1zM154 129v1h1v-1zM154 170v1h1v-1zM154 428v1h1v-1zM154 461v1h1v-1zM154 469v1h1v-1zM154 484v1h1v-1zM155 107v1h1v-1zM155 109v1h1v-1zM155 128v1h1v-1zM155 169v1h1v-1zM155 429v1h1v-1zM155 459v2h1v-2zM155 470v1h1v-1zM155 483v1h1v-1zM155 489v1h1v-1zM156 108v1h1v-1zM156 127v1h1v-1zM156 168v1h1v-1zM156 430v1h1v-1zM156 458v1h1v-1zM156 471v1h1v-1zM156 481v2h1v-2zM156 490v1h1v-1zM157 53v1h1v-1zM157 109v2h1v-2zM157 126v1h1v-1zM157 167v1h1v-1zM157 431v1h1v-1zM157 457v1h1v-1zM157 472v1h1v-1zM157 480v1h1v-1zM157 545v1h1v-1zM158 111v1h1v-1zM158 166v1h1v-1zM158 432v1h1v-1zM158 456v1h1v-1zM158 479v1h1v-1zM159 106v1h1v-1zM159 112v1h1v-1zM159 165v1h1v-1zM159 433v1h1v-1zM159 455v1h1v-1zM159 477v2h1v-2zM159 492v1h1v-1zM160 113v2h1v-2zM160 124v1h1v-1zM160 164v1h1v-1zM160 434v1h1v-1zM160 454v1h1v-1zM160 474v1h1v-1zM160 476v1h1v-1zM161 115v1h1v-1zM161 123v1h1v-1zM161 163v1h1v-1zM161 435v1h1v-1zM161 453v1h1v-1zM161 475v1h1v-1zM162 104v1h1v-1zM162 116v1h1v-1zM162 162v1h1v-1zM162 436v1h1v-1zM162 452v1h1v-1zM162 494v1h1v-1zM163 103v1h1v-1zM163 117v2h1v-2zM163 161v1h1v-1zM163 437v1h1v-1zM163 451v1h1v-1zM163 495v1h1v-1zM164 119v1h1v-1zM164 121v1h1v-1zM164 160v1h1v-1zM164 438v1h1v-1zM164 449v2h1v-2zM164 477v1h1v-1zM165 120v1h1v-1zM165 159v1h1v-1zM165 439v1h1v-1zM165 448v1h1v-1zM165 478v1h1v-1zM166 101v1h1v-1zM166 158v1h1v-1zM166 440v1h1v-1zM166 447v1h1v-1zM166 497v1h1v-1zM167 157v1h1v-1zM167 441v1h1v-1zM167 446v1h1v-1zM168 118v1h1v-1zM168 156v1h1v-1zM168 442v1h1v-1zM168 445v1h1v-1zM168 480v1h1v-1zM169 99v1h1v-1zM169 117v1h1v-1zM169 155v1h1v-1zM169 443v1h1v-1zM169 481v1h1v-1zM169 499v1h1v-1zM170 98v1h1v-1zM170 116v1h1v-1zM170 154v1h1v-1zM170 482v1h1v-1zM170 497v2h1v-2zM170 500v1h1v-1zM171 495v2h1v-2zM172 493v2h1v-2zM173 96v1h1v-1zM173 114v1h1v-1zM173 152v1h1v-1zM173 446v1h1v-1zM173 484v1h1v-1zM173 492v1h1v-1zM173 502v1h1v-1zM174 98v2h1v-2zM174 113v1h1v-1zM174 151v1h1v-1zM174 447v1h1v-1zM174 485v1h1v-1zM174 490v2h1v-2zM175 100v1h1v-1zM175 150v1h1v-1zM175 186v1h1v-1zM175 448v1h1v-1zM175 488v2h1v-2zM176 101v2h1v-2zM176 149v1h1v-1zM176 187v1h1v-1zM176 449v1h1v-1zM177 103v2h1v-2zM177 188v1h1v-1zM178 105v1h1v-1zM178 189v1h1v-1zM179 106v2h1v-2zM179 147v1h1v-1zM179 451v1h1v-1zM180 92v1h1v-1zM180 108v1h1v-1zM180 146v1h1v-1zM180 452v1h1v-1zM180 506v1h1v-1zM181 109v1h1v-1zM181 145v1h1v-1zM181 191v1h1v-1zM181 453v1h1v-1zM181 489v1h1v-1zM182 192v1h1v-1zM183 193v1h1v-1zM184 107v1h1v-1zM184 143v1h1v-1zM184 194v1h1v-1zM184 455v1h1v-1zM184 491v1h1v-1zM185 142v1h1v-1zM185 456v1h1v-1zM187 88v1h1v-1zM187 105v1h1v-1zM187 493v1h1v-1zM187 508v1h1v-1zM187 510v1h1v-1zM188 140v1h1v-1zM188 458v1h1v-1zM188 506v2h1v-2zM188 558v1h1v-1zM189 504v2h1v-2zM189 556v2h1v-2zM190 502v2h1v-2zM190 554v2h1v-2zM191 138v1h1v-1zM191 460v1h1v-1zM191 500v2h1v-2zM191 551v3h1v-3zM192 87v2h1v-2zM192 498v2h1v-2zM192 549v2h1v-2zM193 89v2h1v-2zM193 547v2h1v-2zM194 91v2h1v-2zM194 545v2h1v-2zM195 93v2h1v-2zM195 542v3h1v-3zM196 95v2h1v-2zM196 135v1h1v-1zM196 463v1h1v-1zM196 540v2h1v-2zM197 97v2h1v-2zM197 538v2h1v-2zM198 535v3h1v-3zM199 133v1h1v-1zM199 465v1h1v-1zM199 533v2h1v-2zM200 531v2h1v-2zM201 529v2h1v-2zM202 131v1h1v-1zM202 467v1h1v-1zM202 526v3h1v-3zM203 524v2h1v-2zM204 522v2h1v-2zM205 520v2h1v-2zM206 517v2h1v-2zM207 515v2h1v-2zM208 512v3h1v-3zM209 510v2h1v-2zM210 78v1h1v-1zM210 508v2h1v-2zM211 79v2h1v-2zM211 507v1h1v-1zM212 81v2h1v-2zM213 83v2h1v-2zM214 85v2h1v-2zM215 87v2h1v-2zM216 89v1h1v-1zM225 90v3h1v-3zM225 446v4h1v-4zM225 525v1h1v-1zM226 93v2h1v-2zM226 440v6h1v-6zM226 522v3h1v-3zM227 95v3h1v-3zM227 438v2h1v-2zM227 518v4h1v-4zM228 98v3h1v-3zM228 515v3h1v-3zM229 101v3h1v-3zM229 513v2h1v-2zM230 71v2h1v-2zM230 104v3h1v-3zM231 73v3h1v-3zM231 107v2h1v-2zM232 76v4h1v-4zM232 109v3h1v-3zM233 80v3h1v-3zM233 112v3h1v-3zM233 440v1h1v-1zM234 83v2h1v-2zM234 115v1h1v-1zM234 441v2h1v-2zM235 443v2h1v-2zM236 445v2h1v-2zM237 447v2h1v-2zM238 449v2h1v-2zM239 451v2h1v-2zM240 453v2h1v-2zM241 455v2h1v-2zM245 529v3h1v-3zM246 514v2h1v-2zM246 525v4h1v-4zM247 510v4h1v-4zM247 521v4h1v-4zM248 506v4h1v-4zM248 518v3h1v-3zM249 502v4h1v-4zM250 66v3h1v-3zM250 498v4h1v-4zM251 69v4h1v-4zM251 494v4h1v-4zM252 73v4h1v-4zM252 490v4h1v-4zM253 77v3h1v-3zM253 489v1h1v-1zM265 19v3h1v-3zM266 22v7h1v-7zM266 532v4h1v-4zM267 29v7h1v-7zM267 526v6h1v-6zM268 36v8h1v-8zM268 522v4h1v-4zM269 44v7h1v-7zM270 51v7h1v-7zM271 58v3h1v-3zM271 62v7h1v-7zM272 69v7h1v-7zM287 524v13h1v-13zM292 61v14h1v-14zM297 455v13h1v-13zM306 524v14h1v-14zM311 62v14h1v-14zM326 523v6h1v-6zM327 529v7h1v-7zM327 538v3h1v-3zM328 541v7h1v-7zM329 548v7h1v-7zM330 73v4h1v-4zM330 555v8h1v-8zM331 67v6h1v-6zM331 563v7h1v-7zM332 63v4h1v-4zM332 570v7h1v-7zM333 135v3h1v-3zM333 577v3h1v-3zM334 138v4h1v-4zM335 142v4h1v-4zM336 146v3h1v-3zM345 108v2h1v-2zM345 519v3h1v-3zM346 104v4h1v-4zM346 522v4h1v-4zM347 100v4h1v-4zM347 526v4h1v-4zM348 96v4h1v-4zM348 530v3h1v-3zM349 92v4h1v-4zM350 78v3h1v-3zM350 88v4h1v-4zM351 74v4h1v-4zM351 84v4h1v-4zM352 70v4h1v-4zM352 83v1h1v-1zM353 68v2h1v-2zM364 483v1h1v-1zM364 514v2h1v-2zM365 484v3h1v-3zM365 516v3h1v-3zM366 487v2h1v-2zM366 519v4h1v-4zM367 489v3h1v-3zM367 523v3h1v-3zM368 492v3h1v-3zM368 526v1h1v-1zM369 84v2h1v-2zM369 495v3h1v-3zM370 81v3h1v-3zM370 498v3h1v-3zM371 77v4h1v-4zM371 501v2h1v-2zM372 74v3h1v-3zM372 503v3h1v-3zM373 73v1h1v-1zM373 506v3h1v-3zM382 508v1h1v-1zM383 509v2h1v-2zM384 511v2h1v-2zM385 513v2h1v-2zM386 515v2h1v-2zM387 91v1h1v-1zM387 517v2h1v-2zM388 89v2h1v-2zM388 519v1h1v-1zM389 86v3h1v-3zM390 84v2h1v-2zM391 82v2h1v-2zM392 81v1h1v-1zM393 77v2h1v-2zM394 75v2h1v-2zM395 73v2h1v-2zM396 70v3h1v-3zM397 68v2h1v-2zM398 66v2h1v-2zM399 64v2h1v-2zM399 133v1h1v-1zM399 465v1h1v-1zM400 61v3h1v-3zM401 59v2h1v-2zM401 500v2h1v-2zM402 57v2h1v-2zM402 135v1h1v-1zM402 463v1h1v-1zM402 502v2h1v-2zM403 54v3h1v-3zM403 504v2h1v-2zM404 52v2h1v-2zM404 506v2h1v-2zM405 50v2h1v-2zM405 100v1h1v-1zM405 508v2h1v-2zM406 48v2h1v-2zM406 98v2h1v-2zM406 510v2h1v-2zM407 45v3h1v-3zM407 96v2h1v-2zM407 138v1h1v-1zM407 460v1h1v-1zM408 43v2h1v-2zM408 94v2h1v-2zM409 41v2h1v-2zM409 92v2h1v-2zM410 40v1h1v-1zM410 90v2h1v-2zM410 140v1h1v-1zM410 458v1h1v-1zM411 105v1h1v-1zM411 493v1h1v-1zM413 142v1h1v-1zM413 456v1h1v-1zM414 107v1h1v-1zM414 143v1h1v-1zM414 455v1h1v-1zM414 491v1h1v-1zM417 109v1h1v-1zM417 145v1h1v-1zM417 453v1h1v-1zM417 489v1h1v-1zM418 92v1h1v-1zM418 146v1h1v-1zM418 452v1h1v-1zM418 490v1h1v-1zM418 506v1h1v-1zM419 147v1h1v-1zM419 451v1h1v-1zM419 491v2h1v-2zM420 148v1h1v-1zM420 450v1h1v-1zM420 493v1h1v-1zM421 494v2h1v-2zM422 496v2h1v-2zM423 109v2h1v-2zM423 150v1h1v-1zM423 448v1h1v-1zM423 498v1h1v-1zM424 107v2h1v-2zM424 113v1h1v-1zM424 151v1h1v-1zM424 447v1h1v-1zM424 485v1h1v-1zM424 499v2h1v-2zM425 96v1h1v-1zM425 105v2h1v-2zM425 114v1h1v-1zM425 152v1h1v-1zM425 446v1h1v-1zM425 484v1h1v-1zM425 502v1h1v-1zM426 104v1h1v-1zM426 115v1h1v-1zM426 483v1h1v-1zM427 102v2h1v-2zM428 98v1h1v-1zM428 100v2h1v-2zM428 444v1h1v-1zM428 500v1h1v-1zM429 99v1h1v-1zM429 117v1h1v-1zM429 155v1h1v-1zM429 443v1h1v-1zM429 481v1h1v-1zM429 499v1h1v-1zM430 118v1h1v-1zM430 153v1h1v-1zM430 156v1h1v-1zM430 442v1h1v-1zM430 480v1h1v-1zM431 152v1h1v-1zM431 157v1h1v-1zM431 441v1h1v-1zM432 101v1h1v-1zM432 151v1h1v-1zM432 158v1h1v-1zM432 440v1h1v-1zM432 497v1h1v-1zM433 120v1h1v-1zM433 150v1h1v-1zM433 159v1h1v-1zM433 439v1h1v-1zM433 478v1h1v-1zM434 121v1h1v-1zM434 148v2h1v-2zM434 160v1h1v-1zM434 438v1h1v-1zM434 477v1h1v-1zM434 479v1h1v-1zM435 103v1h1v-1zM435 147v1h1v-1zM435 161v1h1v-1zM435 437v1h1v-1zM435 480v2h1v-2zM435 495v1h1v-1zM436 104v1h1v-1zM436 146v1h1v-1zM436 162v1h1v-1zM436 436v1h1v-1zM436 482v1h1v-1zM436 494v1h1v-1zM437 123v1h1v-1zM437 145v1h1v-1zM437 163v1h1v-1zM437 435v1h1v-1zM437 475v1h1v-1zM437 483v1h1v-1zM438 122v1h1v-1zM438 124v1h1v-1zM438 144v1h1v-1zM438 164v1h1v-1zM438 434v1h1v-1zM438 474v1h1v-1zM438 484v2h1v-2zM439 106v1h1v-1zM439 120v2h1v-2zM439 125v1h1v-1zM439 143v1h1v-1zM439 165v1h1v-1zM439 433v1h1v-1zM439 473v1h1v-1zM439 486v1h1v-1zM439 492v1h1v-1zM440 119v1h1v-1zM440 142v1h1v-1zM440 166v1h1v-1zM440 432v1h1v-1zM440 487v1h1v-1zM441 53v1h1v-1zM441 118v1h1v-1zM441 141v1h1v-1zM441 167v1h1v-1zM441 431v1h1v-1zM441 488v2h1v-2zM441 545v1h1v-1zM442 108v1h1v-1zM442 116v2h1v-2zM442 127v1h1v-1zM442 140v1h1v-1zM442 168v1h1v-1zM442 430v1h1v-1zM442 471v1h1v-1zM442 490v1h1v-1zM443 109v1h1v-1zM443 115v1h1v-1zM443 128v1h1v-1zM443 138v2h1v-2zM443 169v1h1v-1zM443 429v1h1v-1zM443 470v1h1v-1zM443 489v1h1v-1zM443 491v1h1v-1zM444 55v1h1v-1zM444 114v1h1v-1zM444 129v1h1v-1zM444 137v1h1v-1zM444 170v1h1v-1zM444 428v1h1v-1zM444 469v1h1v-1zM444 492v1h1v-1zM444 543v1h1v-1zM445 112v2h1v-2zM445 130v1h1v-1zM445 136v1h1v-1zM445 171v2h1v-2zM445 426v2h1v-2zM445 468v1h1v-1zM445 493v2h1v-2zM446 111v1h1v-1zM446 135v1h1v-1zM446 173v1h1v-1zM446 425v1h1v-1zM446 487v1h1v-1zM446 495v1h1v-1zM447 112v1h1v-1zM447 134v1h1v-1zM447 174v1h1v-1zM447 424v1h1v-1zM447 486v1h1v-1zM447 496v1h1v-1zM448 113v1h1v-1zM448 132v1h1v-1zM448 175v1h1v-1zM448 423v1h1v-1zM448 485v1h1v-1zM448 497v2h1v-2zM449 58v1h1v-1zM449 176v1h1v-1zM449 421v2h1v-2zM449 465v1h1v-1zM449 499v1h1v-1zM449 540v1h1v-1zM450 134v1h1v-1zM450 177v2h1v-2zM450 420v1h1v-1zM450 464v1h1v-1zM450 467v1h1v-1zM450 500v1h1v-1zM451 115v1h1v-1zM451 179v1h1v-1zM451 419v1h1v-1zM451 463v1h1v-1zM451 468v1h1v-1zM451 483v1h1v-1zM451 501v2h1v-2zM452 60v1h1v-1zM452 116v1h1v-1zM452 136v1h1v-1zM452 180v1h1v-1zM452 418v1h1v-1zM452 462v1h1v-1zM452 469v1h1v-1zM452 482v1h1v-1zM452 503v1h1v-1zM452 538v1h1v-1zM453 117v1h1v-1zM453 134v1h1v-1zM453 137v1h1v-1zM453 181v1h1v-1zM453 417v1h1v-1zM453 461v1h1v-1zM453 470v1h1v-1zM453 481v1h1v-1zM453 504v1h1v-1zM454 118v1h1v-1zM454 133v1h1v-1zM454 138v1h1v-1zM454 182v2h1v-2zM454 415v2h1v-2zM454 460v1h1v-1zM454 471v2h1v-2zM454 480v1h1v-1zM454 505v2h1v-2zM455 62v1h1v-1zM455 132v1h1v-1zM455 139v1h1v-1zM455 184v1h1v-1zM455 414v1h1v-1zM455 459v1h1v-1zM455 473v1h1v-1zM455 507v1h1v-1zM455 536v1h1v-1zM456 131v1h1v-1zM456 140v1h1v-1zM456 185v1h1v-1zM456 413v1h1v-1zM456 458v1h1v-1zM456 474v1h1v-1zM456 508v1h1v-1zM457 120v1h1v-1zM457 130v1h1v-1zM457 141v1h1v-1zM457 186v2h1v-2zM457 411v2h1v-2zM457 457v1h1v-1zM457 475v1h1v-1zM457 478v1h1v-1zM457 509v1h1v-1zM458 64v1h1v-1zM458 121v1h1v-1zM458 129v1h1v-1zM458 142v1h1v-1zM458 188v1h1v-1zM458 410v1h1v-1zM458 456v1h1v-1zM458 477v1h1v-1zM458 510v2h1v-2zM458 534v1h1v-1zM459 122v1h1v-1zM459 128v1h1v-1zM459 143v1h1v-1zM459 189v2h1v-2zM459 409v1h1v-1zM459 455v1h1v-1zM459 512v1h1v-1zM460 123v1h1v-1zM460 127v1h1v-1zM460 144v1h1v-1zM460 191v1h1v-1zM460 407v1h1v-1zM460 454v1h1v-1zM460 475v1h1v-1zM460 513v1h1v-1zM461 66v1h1v-1zM461 124v1h1v-1zM461 126v1h1v-1zM461 145v1h1v-1zM461 192v2h1v-2zM461 405v2h1v-2zM461 453v1h1v-1zM461 474v1h1v-1zM461 514v2h1v-2zM461 532v1h1v-1zM462 146v1h1v-1zM462 194v2h1v-2zM462 403v2h1v-2zM462 516v1h1v-1zM463 147v1h1v-1zM463 196v1h1v-1zM463 402v1h1v-1zM463 410v1h1v-1zM463 451v1h1v-1zM463 517v1h1v-1zM464 126v1h1v-1zM464 148v1h1v-1zM464 197v2h1v-2zM464 400v2h1v-2zM464 450v1h1v-1zM464 453v1h1v-1zM464 472v1h1v-1zM464 518v2h1v-2zM465 127v1h1v-1zM465 199v1h1v-1zM465 399v1h1v-1zM465 449v1h1v-1zM465 454v1h1v-1zM465 471v1h1v-1zM465 520v1h1v-1zM466 69v1h1v-1zM466 128v1h1v-1zM466 150v1h1v-1zM466 200v2h1v-2zM466 397v2h1v-2zM466 412v1h1v-1zM466 448v1h1v-1zM466 455v1h1v-1zM466 470v1h1v-1zM466 521v1h1v-1zM466 529v1h1v-1zM467 70v1h1v-1zM467 129v1h1v-1zM467 148v1h1v-1zM467 151v1h1v-1zM467 202v1h1v-1zM467 395v2h1v-2zM467 446v2h1v-2zM467 456v1h1v-1zM467 469v1h1v-1zM467 522v2h1v-2zM467 528v1h1v-1zM468 130v1h1v-1zM468 147v1h1v-1zM468 152v2h1v-2zM468 203v2h1v-2zM468 393v2h1v-2zM468 445v1h1v-1zM468 457v1h1v-1zM468 468v1h1v-1zM468 524v1h1v-1zM469 131v1h1v-1zM469 146v1h1v-1zM469 154v1h1v-1zM469 205v2h1v-2zM469 391v2h1v-2zM469 414v1h1v-1zM469 444v1h1v-1zM469 458v1h1v-1zM469 467v1h1v-1zM469 525v1h1v-1zM470 72v1h1v-1zM470 132v1h1v-1zM470 145v1h1v-1zM470 155v1h1v-1zM470 207v2h1v-2zM470 389v2h1v-2zM470 443v1h1v-1zM470 459v1h1v-1zM470 466v1h1v-1zM470 526v1h1v-1zM471 73v1h1v-1zM471 133v1h1v-1zM471 156v1h1v-1zM471 209v2h1v-2zM471 387v2h1v-2zM471 442v1h1v-1zM471 460v1h1v-1zM471 465v1h1v-1zM471 525v1h1v-1zM472 134v1h1v-1zM472 157v1h1v-1zM472 211v2h1v-2zM472 385v2h1v-2zM472 416v1h1v-1zM472 440v2h1v-2zM472 461v1h1v-1zM472 464v1h1v-1zM473 135v1h1v-1zM473 143v1h1v-1zM473 158v2h1v-2zM473 213v2h1v-2zM473 383v2h1v-2zM473 439v1h1v-1zM473 462v2h1v-2zM474 75v1h1v-1zM474 136v2h1v-2zM474 142v1h1v-1zM474 160v1h1v-1zM474 215v2h1v-2zM474 381v2h1v-2zM474 438v1h1v-1zM474 461v1h1v-1zM474 523v1h1v-1zM475 76v1h1v-1zM475 138v1h1v-1zM475 141v1h1v-1zM475 161v1h1v-1zM475 217v2h1v-2zM475 379v2h1v-2zM475 418v1h1v-1zM475 437v1h1v-1zM475 460v1h1v-1zM475 522v1h1v-1zM476 77v1h1v-1zM476 139v1h1v-1zM476 162v2h1v-2zM476 219v2h1v-2zM476 377v2h1v-2zM476 435v2h1v-2zM476 438v1h1v-1zM476 459v1h1v-1zM476 521v1h1v-1zM477 78v1h1v-1zM477 164v1h1v-1zM477 222v2h1v-2zM477 375v2h1v-2zM477 434v1h1v-1zM477 458v1h1v-1zM477 520v1h1v-1zM478 79v1h1v-1zM478 141v1h1v-1zM478 165v1h1v-1zM478 224v2h1v-2zM478 373v2h1v-2zM478 420v1h1v-1zM478 433v1h1v-1zM478 457v1h1v-1zM478 519v1h1v-1zM479 80v1h1v-1zM479 142v2h1v-2zM479 164v1h1v-1zM479 166v2h1v-2zM479 226v3h1v-3zM479 370v3h1v-3zM479 431v2h1v-2zM479 440v1h1v-1zM479 455v2h1v-2zM479 518v1h1v-1zM480 81v1h1v-1zM480 144v1h1v-1zM480 168v1h1v-1zM480 229v3h1v-3zM480 367v3h1v-3zM480 430v1h1v-1zM480 441v1h1v-1zM480 454v1h1v-1zM480 517v1h1v-1zM481 82v1h1v-1zM481 145v1h1v-1zM481 169v1h1v-1zM481 232v3h1v-3zM481 364v3h1v-3zM481 422v1h1v-1zM481 429v1h1v-1zM481 453v1h1v-1zM481 516v1h1v-1zM482 83v1h1v-1zM482 146v1h1v-1zM482 162v1h1v-1zM482 170v1h1v-1zM482 235v3h1v-3zM482 361v3h1v-3zM482 427v2h1v-2zM482 452v1h1v-1zM482 515v1h1v-1zM483 147v1h1v-1zM483 161v1h1v-1zM483 171v2h1v-2zM483 238v3h1v-3zM483 358v3h1v-3zM483 426v1h1v-1zM483 443v1h1v-1zM483 451v1h1v-1zM484 148v1h1v-1zM484 173v1h1v-1zM484 241v4h1v-4zM484 354v4h1v-4zM484 425v1h1v-1zM484 444v1h1v-1zM484 449v2h1v-2zM485 85v1h1v-1zM485 149v2h1v-2zM485 174v1h1v-1zM485 245v3h1v-3zM485 351v3h1v-3zM485 448v1h1v-1zM485 513v1h1v-1zM486 86v1h1v-1zM486 151v1h1v-1zM486 159v1h1v-1zM486 175v2h1v-2zM486 248v3h1v-3zM486 348v3h1v-3zM486 423v1h1v-1zM486 447v1h1v-1zM486 512v1h1v-1zM487 152v1h1v-1zM487 158v1h1v-1zM487 177v2h1v-2zM487 251v3h1v-3zM487 345v3h1v-3zM487 420v2h1v-2zM487 446v1h1v-1zM488 153v2h1v-2zM488 179v2h1v-2zM488 254v4h1v-4zM488 341v4h1v-4zM488 418v2h1v-2zM488 444v2h1v-2zM489 88v1h1v-1zM489 155v1h1v-1zM489 181v1h1v-1zM489 258v5h1v-5zM489 336v5h1v-5zM489 417v1h1v-1zM489 443v1h1v-1zM489 510v1h1v-1zM490 89v1h1v-1zM490 156v1h1v-1zM490 180v1h1v-1zM490 182v2h1v-2zM490 263v6h1v-6zM490 329v7h1v-7zM490 415v2h1v-2zM490 442v1h1v-1zM490 509v1h1v-1zM491 90v1h1v-1zM491 155v1h1v-1zM491 157v2h1v-2zM491 184v1h1v-1zM491 269v7h1v-7zM491 323v6h1v-6zM491 414v1h1v-1zM491 440v2h1v-2zM491 508v1h1v-1zM492 91v1h1v-1zM492 154v1h1v-1zM492 159v1h1v-1zM492 185v2h1v-2zM492 276v7h1v-7zM492 316v7h1v-7zM492 412v2h1v-2zM492 425v1h1v-1zM492 439v1h1v-1zM492 507v1h1v-1zM493 92v1h1v-1zM493 160v2h1v-2zM493 178v1h1v-1zM493 187v1h1v-1zM493 283v16h1v-16zM493 300v16h1v-16zM493 411v1h1v-1zM493 437v2h1v-2zM493 506v1h1v-1zM494 93v1h1v-1zM494 162v1h1v-1zM494 188v2h1v-2zM494 409v2h1v-2zM494 436v1h1v-1zM494 505v1h1v-1zM495 94v1h1v-1zM495 152v1h1v-1zM495 163v1h1v-1zM495 190v2h1v-2zM495 407v2h1v-2zM495 435v1h1v-1zM495 504v1h1v-1zM496 95v1h1v-1zM496 151v1h1v-1zM496 164v2h1v-2zM496 192v2h1v-2zM496 406v1h1v-1zM496 433v2h1v-2zM496 503v1h1v-1zM497 96v1h1v-1zM497 166v1h1v-1zM497 194v2h1v-2zM497 403v2h1v-2zM497 432v1h1v-1zM497 502v1h1v-1zM498 97v1h1v-1zM498 167v2h1v-2zM498 175v1h1v-1zM498 196v2h1v-2zM498 401v2h1v-2zM498 430v2h1v-2zM498 501v1h1v-1zM499 98v1h1v-1zM499 149v1h1v-1zM499 169v1h1v-1zM499 198v2h1v-2zM499 399v2h1v-2zM499 429v1h1v-1zM499 500v1h1v-1zM500 99v1h1v-1zM500 148v1h1v-1zM500 170v1h1v-1zM500 200v2h1v-2zM500 397v2h1v-2zM500 428v1h1v-1zM500 499v1h1v-1zM501 100v1h1v-1zM501 171v2h1v-2zM501 202v2h1v-2zM501 395v2h1v-2zM501 426v2h1v-2zM501 498v1h1v-1zM502 101v1h1v-1zM502 204v2h1v-2zM502 393v2h1v-2zM502 425v1h1v-1zM502 497v1h1v-1zM503 102v1h1v-1zM503 146v1h1v-1zM503 174v2h1v-2zM503 206v2h1v-2zM503 391v2h1v-2zM503 423v2h1v-2zM503 496v1h1v-1zM504 103v1h1v-1zM504 145v1h1v-1zM504 176v2h1v-2zM504 208v1h1v-1zM504 389v2h1v-2zM504 421v2h1v-2zM504 495v1h1v-1zM505 104v1h1v-1zM505 178v2h1v-2zM505 210v2h1v-2zM505 388v1h1v-1zM505 419v2h1v-2zM505 494v1h1v-1zM506 105v1h1v-1zM506 180v1h1v-1zM506 212v2h1v-2zM506 385v2h1v-2zM506 418v1h1v-1zM506 493v1h1v-1zM507 106v1h1v-1zM507 143v1h1v-1zM507 181v2h1v-2zM507 214v2h1v-2zM507 381v4h1v-4zM507 416v2h1v-2zM507 492v1h1v-1zM508 107v1h1v-1zM508 142v1h1v-1zM508 183v2h1v-2zM508 217v4h1v-4zM508 377v4h1v-4zM508 414v2h1v-2zM508 491v1h1v-1zM509 108v1h1v-1zM509 141v1h1v-1zM509 185v2h1v-2zM509 221v4h1v-4zM509 374v3h1v-3zM509 412v2h1v-2zM509 490v1h1v-1zM510 109v1h1v-1zM510 187v1h1v-1zM510 225v2h1v-2zM510 372v2h1v-2zM510 410v1h1v-1zM510 489v1h1v-1zM511 110v1h1v-1zM511 188v2h1v-2zM511 227v2h1v-2zM511 370v2h1v-2zM511 408v2h1v-2zM511 487v2h1v-2zM512 111v2h1v-2zM512 139v1h1v-1zM512 190v2h1v-2zM512 229v3h1v-3zM512 366v3h1v-3zM512 406v2h1v-2zM512 486v1h1v-1zM513 113v1h1v-1zM513 138v1h1v-1zM513 192v2h1v-2zM513 232v2h1v-2zM513 235v1h1v-1zM513 362v4h1v-4zM513 404v2h1v-2zM513 485v1h1v-1zM514 114v1h1v-1zM514 194v3h1v-3zM514 236v4h1v-4zM514 359v3h1v-3zM514 402v2h1v-2zM514 483v2h1v-2zM515 115v2h1v-2zM515 197v2h1v-2zM515 240v4h1v-4zM515 355v4h1v-4zM515 400v2h1v-2zM515 482v1h1v-1zM516 117v1h1v-1zM516 136v1h1v-1zM516 199v2h1v-2zM516 244v3h1v-3zM516 351v4h1v-4zM516 398v2h1v-2zM516 481v1h1v-1zM517 118v1h1v-1zM517 135v1h1v-1zM517 201v2h1v-2zM517 247v4h1v-4zM517 347v3h1v-3zM517 395v3h1v-3zM517 480v1h1v-1zM518 119v1h1v-1zM518 203v2h1v-2zM518 251v2h1v-2zM518 254v1h1v-1zM518 343v4h1v-4zM518 393v2h1v-2zM518 479v1h1v-1zM519 120v1h1v-1zM519 205v2h1v-2zM519 255v4h1v-4zM519 339v4h1v-4zM519 391v1h1v-1zM519 478v1h1v-1zM520 121v1h1v-1zM520 133v1h1v-1zM520 207v2h1v-2zM520 259v6h1v-6zM520 334v5h1v-5zM520 389v2h1v-2zM520 477v1h1v-1zM521 122v1h1v-1zM521 132v1h1v-1zM521 209v1h1v-1zM521 211v1h1v-1zM521 265v7h1v-7zM521 326v4h1v-4zM521 331v3h1v-3zM521 387v2h1v-2zM521 476v1h1v-1zM522 123v1h1v-1zM522 212v2h1v-2zM522 273v15h1v-15zM522 310v1h1v-1zM522 312v14h1v-14zM522 384v3h1v-3zM522 475v1h1v-1zM523 124v1h1v-1zM523 214v3h1v-3zM523 288v4h1v-4zM523 293v6h1v-6zM523 300v10h1v-10zM523 382v2h1v-2zM523 474v1h1v-1zM524 125v1h1v-1zM524 130v1h1v-1zM524 217v3h1v-3zM524 379v3h1v-3zM524 472v2h1v-2zM525 126v2h1v-2zM525 129v1h1v-1zM525 220v4h1v-4zM525 375v4h1v-4zM525 471v1h1v-1zM526 128v1h1v-1zM526 224v3h1v-3zM526 372v1h1v-1zM526 374v1h1v-1zM526 470v1h1v-1zM527 129v1h1v-1zM527 227v2h1v-2zM527 369v3h1v-3zM527 468v2h1v-2zM528 130v2h1v-2zM528 229v1h1v-1zM528 231v1h1v-1zM528 367v2h1v-2zM528 467v1h1v-1zM529 132v1h1v-1zM529 232v4h1v-4zM529 363v4h1v-4zM529 466v1h1v-1zM530 133v2h1v-2zM530 236v4h1v-4zM530 359v4h1v-4zM530 464v2h1v-2zM531 135v1h1v-1zM531 240v4h1v-4zM531 354v5h1v-5zM531 462v2h1v-2zM532 136v2h1v-2zM532 244v4h1v-4zM532 350v3h1v-3zM532 461v1h1v-1zM533 138v2h1v-2zM533 248v2h1v-2zM533 251v3h1v-3zM533 344v6h1v-6zM533 459v2h1v-2zM534 140v1h1v-1zM534 254v6h1v-6zM534 338v6h1v-6zM534 458v1h1v-1zM535 141v2h1v-2zM535 260v4h1v-4zM535 334v4h1v-4zM535 456v2h1v-2zM536 143v1h1v-1zM536 264v6h1v-6zM536 328v4h1v-4zM536 333v1h1v-1zM536 455v1h1v-1zM537 144v2h1v-2zM537 270v1h1v-1zM537 272v15h1v-15zM537 312v16h1v-16zM537 453v2h1v-2zM538 146v1h1v-1zM538 287v5h1v-5zM538 293v18h1v-18zM538 452v1h1v-1zM539 147v2h1v-2zM539 450v2h1v-2zM540 149v1h1v-1zM540 449v1h1v-1zM541 150v2h1v-2zM541 447v2h1v-2zM542 152v1h1v-1zM542 445v2h1v-2zM543 153v2h1v-2zM543 444v1h1v-1zM544 155v2h1v-2zM544 442v2h1v-2zM545 157v1h1v-1zM545 441v1h1v-1zM546 158v2h1v-2zM546 439v2h1v-2zM547 160v2h1v-2zM547 437v2h1v-2zM548 162v2h1v-2zM548 435v2h1v-2zM549 164v2h1v-2zM549 433v2h1v-2zM550 166v2h1v-2zM550 431v2h1v-2zM551 168v2h1v-2zM551 429v2h1v-2zM552 170v2h1v-2zM552 427v2h1v-2zM553 172v2h1v-2zM553 425v2h1v-2zM554 174v3h1v-3zM554 422v3h1v-3zM555 177v2h1v-2zM555 420v2h1v-2zM556 179v2h1v-2zM556 418v2h1v-2zM557 181v2h1v-2zM557 416v2h1v-2zM558 183v3h1v-3zM558 413v3h1v-3zM559 186v2h1v-2zM559 411v2h1v-2zM560 188v2h1v-2zM560 409v1h1v-1zM561 190v2h1v-2zM561 407v2h1v-2zM562 192v3h1v-3zM562 404v3h1v-3zM563 195v2h1v-2zM563 402v2h1v-2zM564 197v2h1v-2zM564 400v2h1v-2zM565 199v2h1v-2zM565 398v2h1v-2zM566 201v3h1v-3zM566 395v3h1v-3zM567 204v3h1v-3zM567 391v4h1v-4zM568 207v4h1v-4zM568 388v3h1v-3zM569 211v3h1v-3zM569 385v3h1v-3zM570 214v3h1v-3zM570 382v3h1v-3zM571 217v3h1v-3zM571 379v3h1v-3zM572 220v3h1v-3zM572 376v3h1v-3zM573 223v3h1v-3zM573 372v4h1v-4zM574 226v4h1v-4zM574 369v3h1v-3zM575 230v4h1v-4zM575 365v4h1v-4zM576 234v4h1v-4zM576 361v4h1v-4zM577 238v5h1v-5zM577 356v5h1v-5zM578 243v5h1v-5zM578 351v5h1v-5zM579 248v7h1v-7zM579 343v8h1v-8zM580 255v10h1v-10zM580 333v10h1v-10zM581 266v9h1v-9zM581 323v10h1v-10zM582 275v10h1v-10zM582 313v10h1v-10zM583 285v28h1v-28z"/><path fill="#ff0000" d="M196 48h3v1h-3zM206 48h3v1h-3zM746 107h6v1h-6zM746 113h6v1h-6zM357 120h6v1h-6zM361 121h2v1h-2zM349 126h5v1h-5zM354 127h2v1h-2zM349 136h5v1h-5zM747 148h3v1h-3zM744 151h4v1h-4zM749 151h4v1h-4zM744 153h9v1h-9zM745 187h2v1h-2zM748 187h2v1h-2zM747 188h2v1h-2zM750 188h2v1h-2zM385 192h10v1h-10zM745 192h2v1h-2zM748 192h2v1h-2zM367 193h18v1h-18zM747 193h2v1h-2zM750 193h2v1h-2zM349 194h18v1h-18zM331 195h9v1h-9zM341 195h8v1h-8zM312 196h19v1h-19zM294 197h7v1h-7zM302 197h10v1h-10zM276 198h18v1h-18zM257 199h19v1h-19zM239 200h18v1h-18zM221 201h18v1h-18zM203 202h18v1h-18zM194 203h9v1h-9zM747 236h3v1h-3zM745 237h2v1h-2zM750 237h2v1h-2zM745 243h2v1h-2zM750 243h2v1h-2zM747 244h3v1h-3zM750 276h3v1h-3zM751 277h2v1h-2zM746 279h2v1h-2zM746 284h2v1h-2zM745 287h2v1h-2zM745 293h8v1h-8zM563 328h5v1h-5zM566 329h2v1h-2zM209 354h2v1h-2zM210 356h2v1h-2zM211 357h2v1h-2zM217 452h5v1h-5zM215 453h2v1h-2zM222 453h2v1h-2zM232 461h2v1h-2zM215 467h2v1h-2zM222 467h2v1h-2zM217 468h5v1h-5zM231 473h15v1h-15zM135 497h5v1h-5zM129 509v1h1v-1zM130 510v1h1v-1zM131 501v5h1v-5zM131 511v1h1v-1zM132 500v1h1v-1zM132 506v1h1v-1zM132 510v1h1v-1zM133 499v1h1v-1zM133 507v3h1v-3zM134 498v1h1v-1zM140 498v1h1v-1zM141 499v1h1v-1zM141 507v3h1v-3zM142 500v1h1v-1zM142 506v1h1v-1zM142 510v1h1v-1zM143 501v5h1v-5zM143 511v1h1v-1zM144 512v1h1v-1zM145 513v1h1v-1zM149 299v1h1v-1zM155 299v1h1v-1zM156 300v1h1v-1zM157 301v1h1v-1zM158 302v1h1v-1zM159 303v1h1v-1zM160 304v1h1v-1zM161 305v1h1v-1zM162 306v1h1v-1zM163 307v1h1v-1zM164 308v1h1v-1zM165 309v1h1v-1zM166 310v1h1v-1zM167 311v1h1v-1zM168 312v1h1v-1zM169 313v1h1v-1zM170 314v1h1v-1zM171 315v1h1v-1zM172 231v2h1v-2zM172 316v1h1v-1zM173 233v3h1v-3zM173 317v1h1v-1zM174 236v4h1v-4zM174 318v1h1v-1zM175 240v3h1v-3zM175 319v1h1v-1zM176 243v3h1v-3zM176 320v1h1v-1zM177 246v3h1v-3zM177 321v1h1v-1zM178 249v4h1v-4zM179 253v3h1v-3zM179 323v1h1v-1zM180 256v1h1v-1zM180 324v1h1v-1zM181 259v3h1v-3zM181 325v1h1v-1zM182 262v4h1v-4zM182 326v1h1v-1zM183 266v3h1v-3zM183 327v1h1v-1zM184 269v3h1v-3zM184 328v1h1v-1zM185 272v3h1v-3zM185 329v1h1v-1zM186 275v4h1v-4zM186 330v1h1v-1zM187 279v3h1v-3zM187 331v1h1v-1zM188 282v3h1v-3zM188 332v1h1v-1zM189 285v3h1v-3zM189 333v1h1v-1zM190 288v4h1v-4zM190 334v1h1v-1zM191 292v3h1v-3zM191 335v2h1v-2zM192 295v3h1v-3zM192 337v1h1v-1zM193 298v3h1v-3zM193 338v1h1v-1zM194 50v3h1v-3zM194 301v4h1v-4zM194 339v1h1v-1zM195 49v1h1v-1zM195 53v1h1v-1zM195 306v2h1v-2zM195 340v1h1v-1zM196 54v1h1v-1zM196 308v3h1v-3zM196 341v1h1v-1zM197 311v3h1v-3zM197 342v1h1v-1zM198 314v4h1v-4zM198 343v1h1v-1zM199 49v1h1v-1zM199 318v3h1v-3zM199 344v1h1v-1zM200 50v3h1v-3zM200 321v3h1v-3zM200 345v1h1v-1zM201 53v4h1v-4zM201 324v3h1v-3zM201 346v1h1v-1zM202 57v8h1v-8zM202 327v4h1v-4zM202 347v1h1v-1zM203 53v4h1v-4zM203 331v3h1v-3zM203 348v1h1v-1zM204 50v3h1v-3zM204 334v3h1v-3zM204 349v1h1v-1zM205 49v1h1v-1zM205 337v3h1v-3zM205 350v1h1v-1zM206 340v4h1v-4zM206 351v1h1v-1zM207 344v3h1v-3zM207 352v1h1v-1zM208 54v1h1v-1zM208 347v3h1v-3zM208 353v1h1v-1zM209 49v1h1v-1zM209 53v1h1v-1zM209 350v3h1v-3zM210 50v3h1v-3zM210 353v1h1v-1zM210 355v1h1v-1zM211 358v2h1v-2zM211 458v5h1v-5zM212 360v3h1v-3zM212 456v2h1v-2zM212 463v2h1v-2zM213 358v1h1v-1zM213 363v3h1v-3zM213 455v1h1v-1zM213 465v1h1v-1zM214 359v1h1v-1zM214 366v4h1v-4zM214 454v1h1v-1zM214 466v1h1v-1zM215 360v1h1v-1zM215 370v3h1v-3zM216 361v1h1v-1zM216 373v3h1v-3zM217 362v1h1v-1zM217 376v3h1v-3zM218 363v1h1v-1zM218 379v4h1v-4zM219 364v1h1v-1zM219 383v3h1v-3zM219 460v1h1v-1zM220 365v1h1v-1zM220 386v3h1v-3zM221 366v1h1v-1zM221 389v3h1v-3zM222 367v1h1v-1zM222 392v4h1v-4zM223 368v1h1v-1zM223 396v3h1v-3zM224 369v1h1v-1zM224 399v3h1v-3zM224 454v1h1v-1zM224 466v1h1v-1zM225 370v1h1v-1zM225 402v3h1v-3zM225 455v1h1v-1zM225 465v1h1v-1zM226 371v1h1v-1zM226 405v4h1v-4zM226 456v2h1v-2zM226 463v2h1v-2zM227 372v1h1v-1zM227 409v3h1v-3zM227 458v5h1v-5zM228 373v1h1v-1zM228 412v3h1v-3zM229 374v1h1v-1zM229 415v3h1v-3zM230 375v1h1v-1zM230 418v4h1v-4zM230 431v1h1v-1zM231 376v1h1v-1zM231 422v3h1v-3zM231 472v1h1v-1zM232 377v1h1v-1zM232 425v1h1v-1zM232 470v2h1v-2zM233 378v1h1v-1zM233 468v2h1v-2zM234 379v1h1v-1zM234 462v1h1v-1zM234 466v2h1v-2zM235 380v1h1v-1zM235 463v3h1v-3zM236 381v1h1v-1zM236 435v1h1v-1zM237 382v1h1v-1zM238 383v1h1v-1zM239 384v1h1v-1zM240 385v1h1v-1zM241 386v1h1v-1zM241 461v12h1v-12zM241 474v2h1v-2zM242 387v1h1v-1zM242 460v1h1v-1zM243 388v1h1v-1zM243 459v1h1v-1zM244 389v1h1v-1zM245 390v1h1v-1zM246 391v1h1v-1zM247 392v1h1v-1zM248 393v1h1v-1zM249 394v1h1v-1zM250 395v1h1v-1zM251 396v1h1v-1zM252 397v1h1v-1zM253 398v1h1v-1zM254 399v1h1v-1zM255 400v1h1v-1zM256 401v1h1v-1zM257 402v1h1v-1zM258 403v1h1v-1zM259 404v1h1v-1zM260 405v1h1v-1zM261 406v1h1v-1zM262 407v2h1v-2zM263 409v1h1v-1zM264 410v1h1v-1zM265 411v1h1v-1zM266 412v1h1v-1zM267 413v1h1v-1zM268 414v1h1v-1zM269 415v1h1v-1zM270 416v1h1v-1zM271 417v1h1v-1zM272 418v1h1v-1zM273 419v1h1v-1zM274 420v1h1v-1zM275 421v1h1v-1zM276 422v1h1v-1zM277 423v1h1v-1zM278 424v1h1v-1zM279 425v1h1v-1zM280 426v1h1v-1zM281 427v1h1v-1zM282 428v1h1v-1zM283 429v1h1v-1zM284 430v1h1v-1zM285 431v1h1v-1zM286 432v1h1v-1zM287 433v1h1v-1zM288 434v1h1v-1zM289 435v1h1v-1zM290 436v1h1v-1zM291 437v1h1v-1zM292 438v1h1v-1zM293 439v1h1v-1zM294 440v1h1v-1zM295 441v1h1v-1zM296 442v1h1v-1zM297 443v1h1v-1zM300 440v1h1v-1zM303 438v1h1v-1zM306 435v1h1v-1zM309 432v1h1v-1zM312 430v1h1v-1zM315 427v1h1v-1zM318 424v1h1v-1zM321 421v1h1v-1zM324 419v1h1v-1zM327 416v1h1v-1zM330 413v1h1v-1zM333 411v1h1v-1zM336 408v1h1v-1zM339 155v1h1v-1zM339 405v1h1v-1zM342 403v1h1v-1zM345 400v1h1v-1zM346 129v5h1v-5zM347 128v1h1v-1zM347 134v1h1v-1zM348 127v1h1v-1zM348 135v1h1v-1zM348 397v1h1v-1zM351 395v1h1v-1zM354 135v1h1v-1zM354 392v1h1v-1zM355 128v1h1v-1zM355 134v1h1v-1zM356 126v1h1v-1zM356 129v5h1v-5zM357 125v1h1v-1zM357 389v1h1v-1zM358 124v1h1v-1zM359 123v1h1v-1zM360 122v1h1v-1zM360 387v1h1v-1zM362 122v4h1v-4zM363 384v1h1v-1zM366 381v1h1v-1zM369 378v1h1v-1zM372 376v1h1v-1zM375 373v1h1v-1zM378 370v1h1v-1zM381 368v1h1v-1zM384 365v1h1v-1zM387 362v1h1v-1zM390 360v1h1v-1zM393 357v1h1v-1zM396 354v1h1v-1zM399 352v1h1v-1zM402 349v1h1v-1zM405 346v1h1v-1zM408 343v1h1v-1zM411 341v1h1v-1zM414 338v1h1v-1zM417 335v1h1v-1zM420 333v1h1v-1zM423 330v1h1v-1zM426 327v1h1v-1zM429 325v1h1v-1zM432 322v1h1v-1zM435 319v1h1v-1zM438 317v1h1v-1zM441 314v1h1v-1zM551 344v1h1v-1zM552 343v1h1v-1zM553 334v1h1v-1zM553 342v1h1v-1zM554 335v1h1v-1zM554 341v1h1v-1zM555 336v1h1v-1zM555 340v1h1v-1zM556 337v1h1v-1zM556 339v1h1v-1zM557 338v1h1v-1zM558 337v1h1v-1zM558 339v1h1v-1zM559 336v1h1v-1zM559 340v1h1v-1zM560 335v1h1v-1zM560 341v1h1v-1zM561 334v1h1v-1zM561 342v1h1v-1zM562 333v1h1v-1zM563 332v1h1v-1zM564 331v1h1v-1zM565 330v1h1v-1zM567 330v3h1v-3zM744 189v1h1v-1zM744 194v1h1v-1zM744 239v3h1v-3zM744 281v2h1v-2zM745 106v1h1v-1zM745 114v1h1v-1zM745 188v1h1v-1zM745 193v1h1v-1zM745 238v1h1v-1zM745 242v1h1v-1zM745 280v1h1v-1zM745 283v1h1v-1zM745 292v1h1v-1zM746 149v2h1v-2zM746 186v1h1v-1zM746 191v1h1v-1zM746 290v2h1v-2zM747 108v5h1v-5zM747 189v1h1v-1zM747 194v1h1v-1zM747 288v2h1v-2zM748 240v1h1v-1zM748 280v1h1v-1zM748 283v1h1v-1zM749 186v1h1v-1zM749 191v1h1v-1zM749 279v1h1v-1zM749 281v2h1v-2zM750 108v5h1v-5zM750 149v2h1v-2zM750 189v1h1v-1zM750 194v1h1v-1zM750 278v1h1v-1zM750 287v6h1v-6zM750 294v1h1v-1zM751 187v1h1v-1zM751 192v1h1v-1zM751 238v1h1v-1zM751 242v1h1v-1zM751 286v1h1v-1zM752 106v1h1v-1zM752 114v1h1v-1zM752 186v1h1v-1zM752 191v1h1v-1zM752 239v3h1v-3zM752 278v1h1v-1z"/><path fill="#00ff00" d="M456 86h2v1h-2zM462 86h2v1h-2zM459 90h2v1h-2zM465 90h2v1h-2zM456 96h2v1h-2zM462 96h2v1h-2zM459 100h2v1h-2zM465 100h2v1h-2zM747 126h3v1h-3zM367 133h9v1h-9zM370 139h3v1h-3zM370 143h3v1h-3zM750 166h3v1h-3zM751 167h2v1h-2zM745 206h2v1h-2zM750 206h2v1h-2zM35 256h11v1h-11zM747 257h3v1h-3zM747 261h3v1h-3zM746 263h5v1h-5zM747 266h3v1h-3zM35 268h11v1h-11zM747 270h3v1h-3zM746 272h5v1h-5zM215 283h2v1h-2zM214 284h2v1h-2zM213 285h2v1h-2zM212 286h2v1h-2zM211 287h2v1h-2zM210 288h2v1h-2zM209 289h2v1h-2zM208 290h2v1h-2zM207 291h2v1h-2zM206 292h2v1h-2zM205 293h2v1h-2zM204 294h2v1h-2zM193 306h2v1h-2zM192 307h2v1h-2zM191 308h2v1h-2zM190 309h2v1h-2zM746 309h5v1h-5zM189 310h2v1h-2zM188 311h2v1h-2zM187 312h2v1h-2zM747 312h3v1h-3zM186 313h2v1h-2zM185 314h2v1h-2zM184 315h2v1h-2zM183 316h2v1h-2zM182 317h2v1h-2zM181 318h2v1h-2zM180 319h2v1h-2zM179 320h2v1h-2zM178 321h2v1h-2zM177 322h2v1h-2zM176 323h2v1h-2zM175 324h2v1h-2zM174 325h2v1h-2zM173 326h2v1h-2zM172 327h2v1h-2zM201 443h5v1h-5zM201 451h5v1h-5zM199 455h9v1h-9zM295 473h5v1h-5zM295 481h5v1h-5zM293 485h9v1h-9zM394 538h5v1h-5zM388 544h7v1h-7zM398 544h7v1h-7zM388 548h17v1h-17zM33 254v1h1v-1zM33 270v1h1v-1zM34 255v1h1v-1zM34 269v1h1v-1zM37 257v11h1v-11zM43 257v11h1v-11zM46 255v1h1v-1zM46 269v1h1v-1zM47 254v1h1v-1zM47 270v1h1v-1zM162 338v1h1v-1zM163 337v1h1v-1zM164 336v1h1v-1zM165 335v1h1v-1zM166 334v1h1v-1zM167 333v1h1v-1zM168 332v1h1v-1zM169 331v1h1v-1zM170 330v1h1v-1zM171 329v1h1v-1zM172 328v1h1v-1zM193 305v1h1v-1zM195 303v1h1v-1zM195 305v1h1v-1zM196 302v1h1v-1zM196 304v1h1v-1zM197 301v1h1v-1zM197 303v1h1v-1zM198 300v1h1v-1zM198 302v1h1v-1zM199 299v1h1v-1zM199 301v1h1v-1zM199 445v5h1v-5zM200 298v1h1v-1zM200 300v1h1v-1zM200 444v1h1v-1zM200 450v1h1v-1zM201 297v1h1v-1zM201 299v1h1v-1zM202 296v1h1v-1zM202 298v1h1v-1zM203 295v1h1v-1zM203 297v1h1v-1zM203 452v3h1v-3zM203 456v4h1v-4zM204 296v1h1v-1zM205 295v1h1v-1zM206 444v1h1v-1zM206 450v1h1v-1zM207 445v5h1v-5zM215 282v1h1v-1zM216 281v1h1v-1zM217 280v1h1v-1zM217 282v1h1v-1zM218 279v1h1v-1zM218 281v1h1v-1zM219 278v1h1v-1zM219 280v1h1v-1zM220 277v1h1v-1zM220 279v1h1v-1zM221 276v1h1v-1zM221 278v1h1v-1zM222 275v1h1v-1zM222 277v1h1v-1zM223 274v1h1v-1zM223 276v1h1v-1zM224 273v1h1v-1zM224 275v1h1v-1zM225 272v1h1v-1zM225 274v1h1v-1zM226 271v1h1v-1zM226 273v1h1v-1zM227 270v1h1v-1zM227 272v1h1v-1zM228 269v1h1v-1zM228 271v1h1v-1zM229 268v1h1v-1zM229 270v1h1v-1zM229 431v1h1v-1zM230 267v1h1v-1zM230 269v1h1v-1zM231 266v1h1v-1zM231 268v1h1v-1zM232 265v1h1v-1zM232 267v1h1v-1zM233 264v1h1v-1zM233 266v1h1v-1zM234 263v1h1v-1zM234 265v1h1v-1zM235 262v1h1v-1zM235 264v1h1v-1zM236 260v2h1v-2zM236 263v1h1v-1zM237 259v1h1v-1zM237 262v1h1v-1zM238 258v1h1v-1zM238 261v1h1v-1zM239 257v1h1v-1zM239 260v1h1v-1zM240 256v1h1v-1zM240 259v1h1v-1zM241 255v1h1v-1zM241 258v1h1v-1zM242 254v1h1v-1zM242 257v1h1v-1zM243 253v1h1v-1zM243 256v1h1v-1zM244 252v1h1v-1zM244 255v1h1v-1zM245 251v1h1v-1zM245 254v1h1v-1zM246 250v1h1v-1zM246 253v1h1v-1zM247 249v1h1v-1zM247 252v1h1v-1zM248 248v1h1v-1zM248 251v1h1v-1zM249 247v1h1v-1zM249 250v1h1v-1zM250 246v1h1v-1zM250 249v1h1v-1zM251 245v1h1v-1zM251 248v1h1v-1zM252 244v1h1v-1zM252 247v1h1v-1zM253 243v1h1v-1zM253 246v1h1v-1zM254 242v1h1v-1zM254 245v1h1v-1zM255 241v1h1v-1zM255 244v1h1v-1zM256 240v1h1v-1zM256 243v1h1v-1zM257 239v1h1v-1zM257 242v1h1v-1zM258 237v2h1v-2zM258 241v1h1v-1zM259 236v1h1v-1zM259 240v1h1v-1zM260 235v1h1v-1zM260 239v1h1v-1zM261 234v1h1v-1zM261 238v1h1v-1zM262 233v1h1v-1zM262 237v1h1v-1zM263 232v1h1v-1zM263 236v1h1v-1zM264 231v1h1v-1zM264 235v1h1v-1zM265 230v1h1v-1zM265 234v1h1v-1zM266 229v1h1v-1zM266 233v1h1v-1zM267 228v1h1v-1zM267 232v1h1v-1zM268 227v1h1v-1zM268 231v1h1v-1zM269 226v1h1v-1zM269 230v1h1v-1zM270 225v1h1v-1zM270 229v1h1v-1zM271 224v1h1v-1zM271 228v1h1v-1zM272 223v1h1v-1zM272 227v1h1v-1zM273 222v1h1v-1zM273 226v1h1v-1zM274 221v1h1v-1zM274 225v1h1v-1zM275 220v1h1v-1zM275 224v1h1v-1zM276 219v1h1v-1zM276 223v1h1v-1zM277 218v1h1v-1zM277 222v1h1v-1zM278 217v1h1v-1zM278 221v1h1v-1zM279 215v2h1v-2zM279 220v1h1v-1zM280 214v1h1v-1zM280 219v1h1v-1zM281 213v1h1v-1zM281 218v1h1v-1zM282 212v1h1v-1zM282 217v1h1v-1zM283 211v1h1v-1zM283 216v1h1v-1zM284 210v1h1v-1zM284 215v1h1v-1zM285 209v1h1v-1zM285 214v1h1v-1zM286 208v1h1v-1zM286 213v1h1v-1zM287 207v1h1v-1zM287 212v1h1v-1zM288 206v1h1v-1zM288 211v1h1v-1zM289 205v1h1v-1zM289 210v1h1v-1zM290 204v1h1v-1zM290 209v1h1v-1zM291 203v1h1v-1zM291 208v1h1v-1zM292 202v1h1v-1zM292 207v1h1v-1zM293 201v1h1v-1zM293 205v2h1v-2zM293 471v1h1v-1zM293 475v5h1v-5zM294 200v1h1v-1zM294 204v1h1v-1zM294 472v1h1v-1zM294 474v1h1v-1zM294 480v1h1v-1zM295 199v1h1v-1zM295 203v1h1v-1zM296 198v1h1v-1zM296 202v1h1v-1zM297 201v1h1v-1zM297 449v1h1v-1zM297 482v3h1v-3zM297 486v2h1v-2zM298 196v1h1v-1zM298 200v1h1v-1zM299 195v1h1v-1zM299 199v1h1v-1zM300 194v1h1v-1zM300 198v1h1v-1zM300 472v1h1v-1zM300 474v1h1v-1zM300 480v1h1v-1zM301 192v2h1v-2zM301 197v1h1v-1zM301 471v1h1v-1zM301 475v5h1v-5zM302 191v1h1v-1zM302 196v1h1v-1zM303 190v1h1v-1zM303 195v1h1v-1zM304 189v1h1v-1zM304 194v1h1v-1zM305 188v1h1v-1zM305 193v1h1v-1zM306 187v1h1v-1zM306 192v1h1v-1zM307 186v1h1v-1zM307 191v1h1v-1zM308 185v1h1v-1zM308 190v1h1v-1zM309 184v1h1v-1zM309 189v1h1v-1zM310 183v1h1v-1zM310 188v1h1v-1zM311 182v1h1v-1zM311 187v1h1v-1zM312 181v1h1v-1zM312 186v1h1v-1zM313 180v1h1v-1zM313 185v1h1v-1zM314 179v1h1v-1zM314 184v1h1v-1zM315 178v1h1v-1zM315 183v1h1v-1zM316 177v1h1v-1zM316 182v1h1v-1zM317 176v1h1v-1zM317 181v1h1v-1zM318 175v1h1v-1zM318 180v1h1v-1zM319 174v1h1v-1zM319 179v1h1v-1zM320 173v1h1v-1zM320 178v1h1v-1zM321 172v1h1v-1zM321 177v1h1v-1zM322 170v2h1v-2zM322 176v1h1v-1zM323 169v1h1v-1zM323 175v1h1v-1zM324 168v1h1v-1zM324 174v1h1v-1zM325 167v1h1v-1zM325 173v1h1v-1zM326 166v1h1v-1zM326 172v1h1v-1zM327 165v1h1v-1zM327 171v1h1v-1zM328 164v1h1v-1zM328 170v1h1v-1zM329 169v1h1v-1zM330 162v1h1v-1zM330 168v1h1v-1zM331 161v1h1v-1zM331 167v1h1v-1zM332 160v1h1v-1zM332 166v1h1v-1zM333 165v1h1v-1zM334 164v1h1v-1zM335 163v1h1v-1zM336 162v1h1v-1zM355 160v1h1v-1zM365 127v1h1v-1zM365 137v1h1v-1zM366 128v1h1v-1zM366 136v1h1v-1zM367 129v4h1v-4zM367 134v2h1v-2zM369 140v3h1v-3zM371 131v2h1v-2zM371 134v5h1v-5zM373 140v3h1v-3zM375 129v4h1v-4zM375 134v2h1v-2zM376 128v1h1v-1zM376 136v1h1v-1zM377 127v1h1v-1zM377 137v1h1v-1zM392 540v3h1v-3zM393 539v1h1v-1zM393 543v1h1v-1zM399 539v1h1v-1zM399 543v1h1v-1zM400 540v3h1v-3zM453 91v1h1v-1zM453 101v1h1v-1zM454 89v2h1v-2zM454 99v2h1v-2zM455 88v1h1v-1zM455 98v1h1v-1zM456 87v1h1v-1zM456 97v1h1v-1zM457 85v1h1v-1zM457 95v1h1v-1zM458 87v3h1v-3zM458 97v3h1v-3zM459 91v1h1v-1zM459 101v1h1v-1zM460 89v1h1v-1zM460 99v1h1v-1zM461 88v1h1v-1zM461 98v1h1v-1zM462 87v1h1v-1zM462 97v1h1v-1zM463 85v1h1v-1zM463 95v1h1v-1zM464 87v3h1v-3zM464 97v3h1v-3zM465 91v1h1v-1zM465 101v1h1v-1zM466 89v1h1v-1zM466 99v1h1v-1zM467 88v1h1v-1zM467 98v1h1v-1zM468 86v2h1v-2zM468 96v2h1v-2zM469 85v1h1v-1zM469 95v1h1v-1zM744 132v1h1v-1zM744 174v1h1v-1zM744 207v2h1v-2zM745 128v3h1v-3zM745 133v1h1v-1zM745 169v1h1v-1zM745 173v1h1v-1zM745 209v1h1v-1zM745 306v1h1v-1zM745 311v1h1v-1zM746 127v1h1v-1zM746 131v2h1v-2zM746 170v1h1v-1zM746 172v1h1v-1zM746 256v1h1v-1zM746 258v3h1v-3zM746 267v3h1v-3zM746 307v2h1v-2zM746 310v1h1v-1zM747 171v1h1v-1zM747 207v3h1v-3zM747 313v1h1v-1zM748 170v1h1v-1zM748 172v1h1v-1zM748 210v5h1v-5zM748 262v1h1v-1zM748 264v1h1v-1zM748 271v1h1v-1zM748 273v2h1v-2zM748 308v1h1v-1zM748 310v2h1v-2zM748 314v1h1v-1zM749 169v1h1v-1zM749 173v1h1v-1zM749 207v3h1v-3zM749 313v1h1v-1zM750 127v1h1v-1zM750 131v2h1v-2zM750 168v1h1v-1zM750 256v1h1v-1zM750 258v3h1v-3zM750 267v3h1v-3zM750 307v2h1v-2zM750 310v1h1v-1zM751 128v3h1v-3zM751 133v1h1v-1zM751 209v1h1v-1zM751 306v1h1v-1zM751 311v1h1v-1zM752 134v1h1v-1zM752 168v1h1v-1zM752 207v2h1v-2z"/><path fill="#ffff00" d="M747 117h3v1h-3zM745 118h2v1h-2zM750 118h2v1h-2zM745 120h2v1h-2zM750 121h2v1h-2zM745 123h2v1h-2zM750 123h2v1h-2zM747 124h3v1h-3zM89 132h2v1h-2zM96 132h2v1h-2zM91 133h5v1h-5zM89 134h2v1h-2zM96 134h2v1h-2zM89 144h2v1h-2zM96 144h2v1h-2zM91 145h5v1h-5zM334 160h2v1h-2zM750 164h2v1h-2zM546 194h3v1h-3zM535 195h2v1h-2zM542 195h2v1h-2zM546 200h3v1h-3zM744 200h9v1h-9zM745 297h5v1h-5zM749 299h2v1h-2zM747 300h2v1h-2zM120 343h9v1h-9zM128 347h3v1h-3zM124 349h3v1h-3zM267 554h2v1h-2zM264 556h2v1h-2zM87 129v1h1v-1zM87 137v5h1v-5zM88 130v2h1v-2zM88 135v2h1v-2zM88 142v2h1v-2zM98 130v2h1v-2zM98 135v2h1v-2zM98 142v2h1v-2zM99 129v1h1v-1zM99 137v5h1v-5zM124 341v2h1v-2zM124 344v5h1v-5zM124 350v6h1v-6zM127 348v1h1v-1zM130 353v3h1v-3zM131 348v1h1v-1zM131 352v1h1v-1zM131 356v1h1v-1zM132 349v3h1v-3zM132 357v1h1v-1zM155 340v1h1v-1zM232 426v1h1v-1zM234 427v1h1v-1zM236 428v1h1v-1zM238 429v1h1v-1zM254 551v1h1v-1zM255 552v1h1v-1zM256 553v13h1v-13zM257 552v1h1v-1zM258 551v1h1v-1zM259 552v1h1v-1zM260 553v13h1v-13zM261 552v1h1v-1zM262 551v1h1v-1zM263 552v1h1v-1zM264 553v3h1v-3zM264 557v7h1v-7zM264 567v1h1v-1zM265 564v1h1v-1zM265 566v1h1v-1zM266 555v1h1v-1zM266 565v1h1v-1zM267 564v1h1v-1zM267 566v1h1v-1zM268 553v1h1v-1zM268 555v9h1v-9zM268 567v1h1v-1zM333 159v1h1v-1zM334 154v1h1v-1zM336 161v1h1v-1zM341 162v1h1v-1zM345 164v1h1v-1zM349 165v1h1v-1zM353 166v1h1v-1zM534 196v1h1v-1zM536 194v1h1v-1zM536 196v7h1v-7zM537 203v1h1v-1zM538 204v5h1v-5zM539 203v1h1v-1zM540 198v5h1v-5zM541 197v1h1v-1zM542 194v1h1v-1zM542 196v1h1v-1zM543 197v1h1v-1zM544 196v1h1v-1zM544 198v1h1v-1zM545 195v1h1v-1zM545 199v1h1v-1zM547 201v1h1v-1zM548 202v1h1v-1zM548 210v1h1v-1zM549 195v1h1v-1zM549 199v1h1v-1zM549 203v1h1v-1zM549 209v1h1v-1zM550 196v3h1v-3zM550 204v5h1v-5zM744 119v1h1v-1zM744 121v2h1v-2zM744 156v1h1v-1zM744 196v1h1v-1zM744 204v1h1v-1zM745 157v7h1v-7zM745 197v1h1v-1zM745 203v1h1v-1zM746 156v1h1v-1zM746 198v2h1v-2zM746 201v2h1v-2zM747 121v2h1v-2zM747 157v7h1v-7zM747 296v1h1v-1zM747 298v2h1v-2zM747 301v3h1v-3zM748 156v1h1v-1zM749 119v2h1v-2zM749 157v7h1v-7zM750 198v2h1v-2zM750 201v2h1v-2zM750 302v2h1v-2zM751 197v1h1v-1zM751 203v1h1v-1zM751 300v2h1v-2zM751 304v1h1v-1zM752 119v2h1v-2zM752 122v1h1v-1zM752 162v2h1v-2zM752 196v1h1v-1zM752 204v1h1v-1z"/><path fill="#0000ff" d="M328 39h17v1h-17zM749 138h3v1h-3zM411 159h3v1h-3zM416 159h5v1h-5zM423 159h3v1h-3zM414 164h2v1h-2zM421 164h2v1h-2zM416 165h5v1h-5zM414 169h9v1h-9zM162 170h5v1h-5zM167 171h2v1h-2zM750 176h2v1h-2zM744 177h2v1h-2zM748 177h2v1h-2zM750 179h2v1h-2zM345 183h2v1h-2zM167 185h2v1h-2zM162 186h5v1h-5zM342 189h2v1h-2zM337 201h2v1h-2zM334 207h2v1h-2zM747 218h3v1h-3zM747 224h3v1h-3zM326 225h2v1h-2zM746 246h3v1h-3zM749 247h2v1h-2zM749 253h2v1h-2zM746 254h3v1h-3zM477 309h3v1h-3zM477 313h3v1h-3zM474 316h2v1h-2zM481 316h2v1h-2zM476 317h5v1h-5zM744 317h2v1h-2zM747 317h3v1h-3zM751 317h2v1h-2zM747 320h3v1h-3zM474 321h9v1h-9zM746 322h5v1h-5zM747 330h3v1h-3zM746 332h5v1h-5zM54 389h5v1h-5zM51 390h3v1h-3zM60 391h3v1h-3zM50 395h3v1h-3zM60 397h3v1h-3zM50 401h3v1h-3zM59 402h3v1h-3zM54 403h5v1h-5zM511 465h3v1h-3zM509 469h2v1h-2zM48 393v1h1v-1zM48 397v3h1v-3zM49 392v1h1v-1zM49 396v1h1v-1zM49 400v1h1v-1zM50 391v1h1v-1zM53 396v1h1v-1zM53 400v1h1v-1zM53 402v1h1v-1zM54 397v3h1v-3zM58 393v3h1v-3zM59 390v1h1v-1zM59 392v1h1v-1zM59 396v1h1v-1zM62 401v1h1v-1zM63 392v1h1v-1zM63 396v1h1v-1zM63 400v1h1v-1zM64 393v3h1v-3zM64 399v1h1v-1zM160 172v1h1v-1zM160 184v1h1v-1zM161 171v1h1v-1zM161 173v1h1v-1zM161 183v1h1v-1zM161 185v1h1v-1zM162 174v1h1v-1zM162 182v1h1v-1zM163 175v2h1v-2zM163 180v2h1v-2zM164 177v3h1v-3zM169 172v1h1v-1zM169 184v1h1v-1zM170 173v1h1v-1zM170 183v1h1v-1zM171 174v2h1v-2zM171 181v2h1v-2zM172 176v5h1v-5zM188 199v1h1v-1zM233 423v1h1v-1zM235 420v1h1v-1zM236 417v1h1v-1zM238 414v1h1v-1zM239 411v1h1v-1zM239 429v1h1v-1zM240 408v1h1v-1zM240 427v1h1v-1zM241 425v1h1v-1zM242 405v1h1v-1zM242 421v1h1v-1zM242 423v1h1v-1zM243 402v1h1v-1zM243 419v1h1v-1zM244 417v1h1v-1zM245 399v1h1v-1zM245 415v1h1v-1zM246 396v1h1v-1zM246 413v1h1v-1zM247 393v1h1v-1zM247 411v1h1v-1zM248 409v1h1v-1zM249 390v1h1v-1zM249 405v1h1v-1zM249 407v1h1v-1zM250 387v1h1v-1zM250 403v1h1v-1zM251 401v1h1v-1zM252 384v1h1v-1zM252 399v1h1v-1zM253 381v1h1v-1zM253 397v1h1v-1zM254 378v1h1v-1zM254 395v1h1v-1zM255 391v1h1v-1zM255 393v1h1v-1zM256 375v1h1v-1zM256 389v1h1v-1zM257 372v1h1v-1zM257 387v1h1v-1zM258 385v1h1v-1zM259 369v1h1v-1zM259 383v1h1v-1zM260 366v1h1v-1zM260 381v1h1v-1zM261 363v1h1v-1zM261 379v1h1v-1zM262 375v1h1v-1zM262 377v1h1v-1zM263 360v1h1v-1zM263 373v1h1v-1zM264 357v1h1v-1zM264 371v1h1v-1zM265 369v1h1v-1zM266 354v1h1v-1zM266 367v1h1v-1zM267 351v1h1v-1zM267 365v1h1v-1zM268 348v1h1v-1zM268 361v1h1v-1zM268 363v1h1v-1zM269 359v1h1v-1zM270 345v1h1v-1zM270 357v1h1v-1zM271 342v1h1v-1zM271 355v1h1v-1zM272 339v1h1v-1zM272 353v1h1v-1zM273 351v1h1v-1zM274 336v1h1v-1zM274 349v1h1v-1zM275 333v1h1v-1zM275 345v1h1v-1zM275 347v1h1v-1zM276 343v1h1v-1zM277 330v1h1v-1zM277 341v1h1v-1zM278 327v1h1v-1zM278 339v1h1v-1zM279 324v1h1v-1zM279 337v1h1v-1zM280 335v1h1v-1zM281 321v1h1v-1zM281 331v1h1v-1zM281 333v1h1v-1zM282 318v1h1v-1zM282 329v1h1v-1zM283 327v1h1v-1zM284 315v1h1v-1zM284 325v1h1v-1zM285 312v1h1v-1zM285 323v1h1v-1zM286 309v1h1v-1zM286 321v1h1v-1zM287 319v1h1v-1zM288 306v1h1v-1zM288 315v1h1v-1zM288 317v1h1v-1zM289 303v1h1v-1zM289 313v1h1v-1zM290 311v1h1v-1zM291 300v1h1v-1zM291 309v1h1v-1zM292 297v1h1v-1zM292 307v1h1v-1zM293 294v1h1v-1zM293 305v1h1v-1zM294 301v1h1v-1zM294 303v1h1v-1zM295 291v1h1v-1zM295 299v1h1v-1zM296 288v1h1v-1zM296 297v1h1v-1zM297 295v1h1v-1zM298 285v1h1v-1zM298 293v1h1v-1zM299 282v1h1v-1zM299 291v1h1v-1zM300 279v1h1v-1zM300 289v1h1v-1zM301 285v1h1v-1zM301 287v1h1v-1zM302 276v1h1v-1zM302 283v1h1v-1zM303 273v1h1v-1zM303 281v1h1v-1zM304 279v1h1v-1zM305 270v1h1v-1zM305 277v1h1v-1zM306 267v1h1v-1zM306 275v1h1v-1zM307 264v1h1v-1zM307 271v1h1v-1zM307 273v1h1v-1zM308 269v1h1v-1zM309 261v1h1v-1zM309 267v1h1v-1zM310 258v1h1v-1zM310 265v1h1v-1zM311 263v1h1v-1zM312 255v1h1v-1zM312 261v1h1v-1zM313 252v1h1v-1zM313 259v1h1v-1zM314 249v1h1v-1zM314 255v1h1v-1zM314 257v1h1v-1zM315 253v1h1v-1zM316 246v1h1v-1zM316 251v1h1v-1zM317 243v1h1v-1zM317 249v1h1v-1zM318 247v1h1v-1zM319 240v1h1v-1zM319 245v1h1v-1zM320 237v1h1v-1zM320 241v1h1v-1zM320 243v1h1v-1zM321 234v1h1v-1zM321 239v1h1v-1zM322 237v1h1v-1zM323 231v1h1v-1zM323 235v1h1v-1zM324 228v1h1v-1zM324 233v1h1v-1zM325 231v1h1v-1zM326 229v1h1v-1zM327 222v1h1v-1zM327 227v1h1v-1zM328 31v1h1v-1zM328 47v1h1v-1zM328 219v1h1v-1zM328 223v1h1v-1zM329 32v1h1v-1zM329 46v1h1v-1zM329 221v1h1v-1zM330 33v1h1v-1zM330 45v1h1v-1zM330 216v1h1v-1zM330 219v1h1v-1zM331 34v2h1v-2zM331 43v2h1v-2zM331 213v1h1v-1zM331 217v1h1v-1zM332 36v3h1v-3zM332 40v3h1v-3zM332 215v1h1v-1zM333 210v2h1v-2zM333 213v1h1v-1zM334 209v1h1v-1zM335 204v1h1v-1zM336 205v1h1v-1zM337 203v1h1v-1zM338 198v1h1v-1zM339 199v1h1v-1zM340 36v3h1v-3zM340 40v3h1v-3zM340 195v1h1v-1zM340 197v1h1v-1zM341 34v2h1v-2zM341 43v2h1v-2zM341 192v2h1v-2zM342 33v1h1v-1zM342 45v1h1v-1zM342 191v1h1v-1zM343 32v1h1v-1zM343 46v1h1v-1zM344 31v1h1v-1zM344 47v1h1v-1zM344 186v2h1v-2zM345 185v1h1v-1zM346 180v2h1v-2zM347 179v1h1v-1zM348 177v1h1v-1zM349 174v2h1v-2zM350 173v1h1v-1zM351 171v1h1v-1zM352 168v2h1v-2zM353 167v1h1v-1zM398 187v1h1v-1zM412 157v2h1v-2zM412 160v2h1v-2zM413 162v2h1v-2zM418 157v2h1v-2zM418 160v5h1v-5zM418 166v3h1v-3zM418 170v4h1v-4zM423 162v2h1v-2zM424 157v2h1v-2zM424 160v2h1v-2zM448 314v1h1v-1zM472 309v5h1v-5zM473 314v2h1v-2zM476 310v3h1v-3zM478 318v3h1v-3zM478 322v4h1v-4zM480 310v3h1v-3zM483 314v2h1v-2zM484 309v5h1v-5zM497 453v1h1v-1zM498 454v1h1v-1zM499 455v13h1v-13zM500 454v1h1v-1zM501 453v1h1v-1zM502 454v1h1v-1zM503 455v13h1v-13zM504 454v1h1v-1zM505 453v1h1v-1zM506 454v1h1v-1zM507 455v13h1v-13zM508 468v1h1v-1zM511 468v1h1v-1zM512 464v1h1v-1zM512 466v2h1v-2zM744 136v1h1v-1zM745 137v7h1v-7zM745 176v1h1v-1zM745 178v3h1v-3zM745 216v1h1v-1zM745 220v3h1v-3zM745 247v1h1v-1zM745 253v1h1v-1zM745 316v1h1v-1zM745 318v1h1v-1zM745 326v3h1v-3zM746 136v1h1v-1zM746 181v3h1v-3zM746 217v1h1v-1zM746 219v1h1v-1zM746 223v1h1v-1zM746 248v1h1v-1zM746 252v1h1v-1zM746 319v1h1v-1zM746 329v1h1v-1zM747 137v7h1v-7zM747 178v3h1v-3zM747 249v3h1v-3zM747 327v1h1v-1zM748 136v1h1v-1zM748 176v1h1v-1zM748 316v1h1v-1zM748 318v2h1v-2zM748 321v1h1v-1zM748 323v2h1v-2zM748 326v1h1v-1zM748 328v1h1v-1zM748 331v1h1v-1zM748 333v2h1v-2zM749 137v1h1v-1zM749 139v4h1v-4zM749 144v1h1v-1zM749 178v1h1v-1zM749 327v1h1v-1zM750 143v1h1v-1zM750 217v1h1v-1zM750 219v1h1v-1zM750 223v1h1v-1zM750 248v1h1v-1zM750 252v1h1v-1zM750 319v1h1v-1zM750 329v1h1v-1zM751 137v1h1v-1zM751 139v4h1v-4zM751 144v1h1v-1zM751 180v1h1v-1zM751 184v1h1v-1zM751 216v1h1v-1zM751 220v3h1v-3zM751 249v3h1v-3zM751 316v1h1v-1zM751 318v1h1v-1zM751 326v3h1v-3zM752 177v2h1v-2zM752 181v3h1v-3z"/><path fill="#00ffff" d="M161 337v3h1v-3zM162 333v4h1v-4zM163 329v4h1v-4zM164 325v4h1v-4zM165 320v5h1v-5zM166 316v4h1v-4zM167 312v4h1v-4zM168 308v4h1v-4zM169 303v5h1v-5zM170 299v4h1v-4zM171 295v4h1v-4zM172 291v4h1v-4zM173 286v5h1v-5zM174 282v4h1v-4zM175 278v4h1v-4zM176 274v4h1v-4zM177 269v5h1v-5zM178 265v4h1v-4zM179 261v4h1v-4zM180 257v4h1v-4zM181 252v5h1v-5zM182 248v4h1v-4zM183 244v4h1v-4zM184 240v4h1v-4zM185 235v5h1v-5zM186 231v4h1v-4zM187 227v4h1v-4zM188 223v4h1v-4zM189 218v5h1v-5zM190 214v4h1v-4zM191 210v4h1v-4zM192 206v4h1v-4zM193 203v3h1v-3zM195 202v1h1v-1zM197 202v1h1v-1zM199 201v1h1v-1zM201 201v1h1v-1zM203 200v1h1v-1zM205 199v1h1v-1zM207 199v1h1v-1zM209 198v1h1v-1zM211 198v1h1v-1zM213 197v1h1v-1zM215 197v1h1v-1zM217 196v1h1v-1zM219 195v1h1v-1zM221 195v1h1v-1zM223 194v1h1v-1zM225 194v1h1v-1zM227 193v1h1v-1zM229 192v1h1v-1zM231 192v1h1v-1zM233 191v1h1v-1zM235 191v1h1v-1zM237 190v1h1v-1zM239 190v1h1v-1zM241 189v1h1v-1zM243 188v1h1v-1zM245 188v1h1v-1zM247 187v1h1v-1zM249 187v1h1v-1zM251 186v1h1v-1zM253 185v1h1v-1zM255 185v1h1v-1zM257 184v1h1v-1zM259 184v1h1v-1zM261 183v1h1v-1zM263 183v1h1v-1zM265 182v1h1v-1zM267 181v1h1v-1zM269 181v1h1v-1zM271 180v1h1v-1zM273 180v1h1v-1zM275 179v1h1v-1zM277 178v1h1v-1zM279 178v1h1v-1zM281 177v1h1v-1zM283 177v1h1v-1zM285 176v1h1v-1zM287 176v1h1v-1zM289 175v1h1v-1zM291 174v1h1v-1zM293 174v1h1v-1zM295 173v1h1v-1zM297 173v1h1v-1zM299 172v1h1v-1zM301 171v1h1v-1zM303 171v1h1v-1zM305 170v1h1v-1zM307 170v1h1v-1zM309 169v1h1v-1zM311 169v1h1v-1zM313 168v1h1v-1zM315 167v1h1v-1zM317 167v1h1v-1zM319 166v1h1v-1zM321 166v1h1v-1zM323 165v1h1v-1zM325 164v1h1v-1zM327 164v1h1v-1zM329 163v1h1v-1zM331 163v1h1v-1zM333 162v1h1v-1zM335 162v1h1v-1zM337 161v1h1v-1zM395 195v1h1v-1zM396 198v1h1v-1zM398 201v1h1v-1zM399 204v1h1v-1zM400 207v1h1v-1zM401 210v1h1v-1zM402 213v1h1v-1zM404 216v1h1v-1zM405 219v1h1v-1zM406 222v1h1v-1zM407 225v1h1v-1zM408 228v1h1v-1zM409 231v1h1v-1zM411 234v1h1v-1zM412 237v1h1v-1zM413 240v1h1v-1zM414 243v1h1v-1zM415 246v1h1v-1zM417 249v1h1v-1zM418 252v1h1v-1zM419 255v1h1v-1zM420 258v1h1v-1zM421 261v1h1v-1zM423 264v1h1v-1zM424 267v1h1v-1zM425 270v1h1v-1zM426 273v1h1v-1zM427 276v1h1v-1zM429 279v1h1v-1zM430 282v1h1v-1zM431 285v1h1v-1zM432 288v1h1v-1zM433 291v1h1v-1zM434 294v1h1v-1zM436 297v1h1v-1zM437 300v1h1v-1zM438 303v1h1v-1zM439 306v1h1v-1zM440 309v1h1v-1zM442 312v1h1v-1z"/><path fill="#008080" d="M139 206h5v1h-5zM135 218h3v1h-3zM145 218h3v1h-3zM747 336h3v1h-3zM745 342h2v1h-2zM750 342h2v1h-2zM133 220v1h1v-1zM134 219v1h1v-1zM134 221v1h1v-1zM135 210v5h1v-5zM135 222v1h1v-1zM136 209v1h1v-1zM136 215v1h1v-1zM136 221v1h1v-1zM137 208v1h1v-1zM137 216v2h1v-2zM137 219v2h1v-2zM138 207v1h1v-1zM144 207v1h1v-1zM145 208v1h1v-1zM145 216v2h1v-2zM145 219v2h1v-2zM146 209v1h1v-1zM146 215v1h1v-1zM146 221v1h1v-1zM147 210v5h1v-5zM147 222v1h1v-1zM148 219v1h1v-1zM148 221v1h1v-1zM149 220v1h1v-1zM167 228v1h1v-1zM744 343v1h1v-1zM745 338v3h1v-3zM745 344v1h1v-1zM746 337v1h1v-1zM746 341v1h1v-1zM746 343v1h1v-1zM750 337v1h1v-1zM750 341v1h1v-1zM750 343v1h1v-1zM751 338v3h1v-3zM751 344v1h1v-1zM752 343v1h1v-1z"/></svg><div id="chart"></div><svg id="ang" width="600" height="600" viewBox="0 0 600 600"><text class="hn" text-anchor="middle" transform="translate(95.30 347.00) scale(0.8 1)" fill="#ff0000">1</text><text class="hn" text-anchor="middle" transform="translate(130.30 427.00) scale(0.8 1)" fill="#ffff00">2</text><text class="hn" text-anchor="middle" transform="translate(202.30 489.00) scale(0.8 1)" fill="#00ff00">3</text><text class="hn" text-anchor="middle" transform="translate(310.30 514.00) scale(0.8 1)" fill="#0000ff">4</text><text class="hn" text-anchor="middle" transform="translate(428.30 470.00) scale(0.8 1)" fill="#ff0000">5</text><text class="hn" text-anchor="middle" transform="translate(501.30 365.00) scale(0.8 1)" fill="#ffff00">6</text><text class="hn" text-anchor="middle" transform="translate(505.30 261.00) scale(0.8 1)" fill="#00ff00">7</text><text class="hn" text-anchor="middle" transform="translate(470.30 181.00) scale(0.8 1)" fill="#0000ff">8</text><text class="hn" text-anchor="middle" transform="translate(398.30 119.00) scale(0.8 1)" fill="#ff0000">9</text><text class="hn" text-anchor="middle" transform="translate(290.30 94.00) scale(0.8 1)" fill="#ffff00">1<tspan class="z">0</tspan></text><text class="hn" text-anchor="middle" transform="translate(172.30 138.00) scale(0.8 1)" fill="#00ff00">11</text><text class="hn" text-anchor="middle" transform="translate(99.30 243.00) scale(0.8 1)" fill="#0000ff">12</text><text transform="translate(325.90 132.00) scale(0.1345 0.2471)" fill="#ffff00" stroke="#ffff00" stroke-width="0.00" vector-effect="non-scaling-stroke">M</text><text transform="translate(337.52 131.77) scale(0.0947 0.2401)" fill="#ffff00" stroke="#ffff00" stroke-width="0.06" vector-effect="non-scaling-stroke">C</text><text transform="translate(110.99 308.00) scale(0.0754 0.2471)" fill="#ff0000" stroke="#ff0000" stroke-width="0.15" vector-effect="non-scaling-stroke">A</text><text transform="translate(117.74 307.80) scale(0.0917 0.2013)" fill="#ff0000" stroke="#ff0000" stroke-width="0.08" vector-effect="non-scaling-stroke">s</text><text transform="translate(123.61 307.80) scale(0.0928 0.2008)" fill="#ff0000" stroke="#ff0000" stroke-width="0.07" vector-effect="non-scaling-stroke">c</text></svg><div id="side"><div class="ln"><span style="color:#ffffff">Astrolog 5.40</span></div><div class="ln"><span style="color:#c0c0c0">"WenYing"</span></div><div class="ln"><span style="color:#c0c0c0">Tue August 19, 2003</span></div><div class="ln"><span style="color:#c0c0c0">12:51am (ST +8:00 GMT)</span></div><div class="ln"><span style="color:#c0c0c0">"Taipei"</span></div><div class="ln"><span style="color:#c0c0c0">121°31E 25°03N</span></div><div class="ln"><span style="color:#c0c0c0">Placidus houses.</span></div><div class="ln"><span style="color:#c0c0c0">Tropical, Geocentric.</span></div><div class="ln"><span style="color:#c0c0c0">Julian Day = 2452870.2021</span></div><div class="ln"><span style="color:#c0c0c0"></span></div><div class="ln"><span style="color:#ff0000"> 1st house: </span><span style="color:#00ff00">23Gem07</span></div><div class="ln"><span style="color:#ffff00"> 2nd house: </span><span style="color:#0000ff">16Can53</span></div><div class="ln"><span style="color:#00ff00"> 3rd house: </span><span style="color:#ff0000">11Leo16</span></div><div class="ln"><span style="color:#0000ff"> 4th house: </span><span style="color:#ffff00"> 9Vir20</span></div><div class="ln"><span style="color:#ff0000"> 5th house: </span><span style="color:#00ff00">12Lib43</span></div><div class="ln"><span style="color:#ffff00"> 6th house: </span><span style="color:#0000ff">19Sco00</span></div><div class="ln"><span style="color:#00ff00"> 7th house: </span><span style="color:#ff0000">23Sag07</span></div><div class="ln"><span style="color:#0000ff"> 8th house: </span><span style="color:#ffff00">16Cap53</span></div><div class="ln"><span style="color:#ff0000"> 9th house: </span><span style="color:#00ff00">11Aqu16</span></div><div class="ln"><span style="color:#ffff00">10th house: </span><span style="color:#0000ff"> 9Pis20</span></div><div class="ln"><span style="color:#00ff00">11th house: </span><span style="color:#ff0000">12Ari43</span></div><div class="ln"><span style="color:#0000ff">12th house: </span><span style="color:#ffff00">19Tau00</span></div><div class="ln">&nbsp;</div><div class="ln"><span style="color:#ff0000"> Sun: </span><span style="color:#ff0000">25Leo20</span><span style="color:#ffffff"> </span><span style="color:#c0c0c0"> - 0°00'</span></div><div class="ln"><span style="color:#0000ff">Moon: </span><span style="color:#ffff00">10Tau52</span><span style="color:#ffffff"> </span><span style="color:#c0c0c0"> - 1°13'</span></div><div class="ln"><span style="color:#00ff00">Merc: </span><span style="color:#ffff00">22Vir18</span><span style="color:#ffffff"> </span><span style="color:#c0c0c0"> - 2°32'</span></div><div class="ln"><span style="color:#00ff00">Venu: </span><span style="color:#ff0000">25Leo20</span><span style="color:#ffffff"> </span><span style="color:#c0c0c0"> + 1°19'</span></div><div class="ln"><span style="color:#ff0000">Mars: </span><span style="color:#0000ff"> 7Pis35</span><span style="color:#ffffff">R</span><span style="color:#c0c0c0"> - 6°41'</span></div><div class="ln"><span style="color:#ff0000">Jupi: </span><span style="color:#ff0000">28Leo06</span><span style="color:#ffffff"> </span><span style="color:#c0c0c0"> + 0°49'</span></div><div class="ln"><span style="color:#ffff00">Satu: </span><span style="color:#0000ff"> 9Can19</span><span style="color:#ffffff"> </span><span style="color:#c0c0c0"> - 0°45'</span></div><div class="ln"><span style="color:#00ff00">Uran: </span><span style="color:#0000ff"> 1Pis04</span><span style="color:#ffffff">R</span><span style="color:#c0c0c0"> - 0°48'</span></div><div class="ln"><span style="color:#0000ff">Nept: </span><span style="color:#00ff00">11Aqu25</span><span style="color:#ffffff">R</span><span style="color:#c0c0c0"> - 0°00'</span></div><div class="ln"><span style="color:#0000ff">Plut: </span><span style="color:#ff0000">17Sag17</span><span style="color:#ffffff">R</span><span style="color:#c0c0c0"> + 9°13'</span></div><div class="ln"><span style="color:#008080">Node: </span><span style="color:#ffff00">24Tau52</span><span style="color:#ffffff">R</span><span style="color:#c0c0c0"> + 0°00'</span></div><div class="ln">&nbsp;</div><div class="ln"><span style="color:#c0c0c0">Fire: 4, Earth: 3,</span></div><div class="ln"><span style="color:#c0c0c0">Air : 2, Water: 4</span></div><div class="ln"><span style="color:#c0c0c0">Car: 1, Fix: 6, Mut: 6</span></div><div class="ln"><span style="color:#c0c0c0">Yang: 6, Yin: 7</span></div><div class="ln"><span style="color:#c0c0c0">M: 5, N: 6, A: 6, D: 5</span></div><div class="ln"><span style="color:#c0c0c0">Ang: 2, Suc: 1, Cad: 8</span></div><div class="ln"><span style="color:#c0c0c0">Learn: 8, Share: 5</span></div></div></body></html>
